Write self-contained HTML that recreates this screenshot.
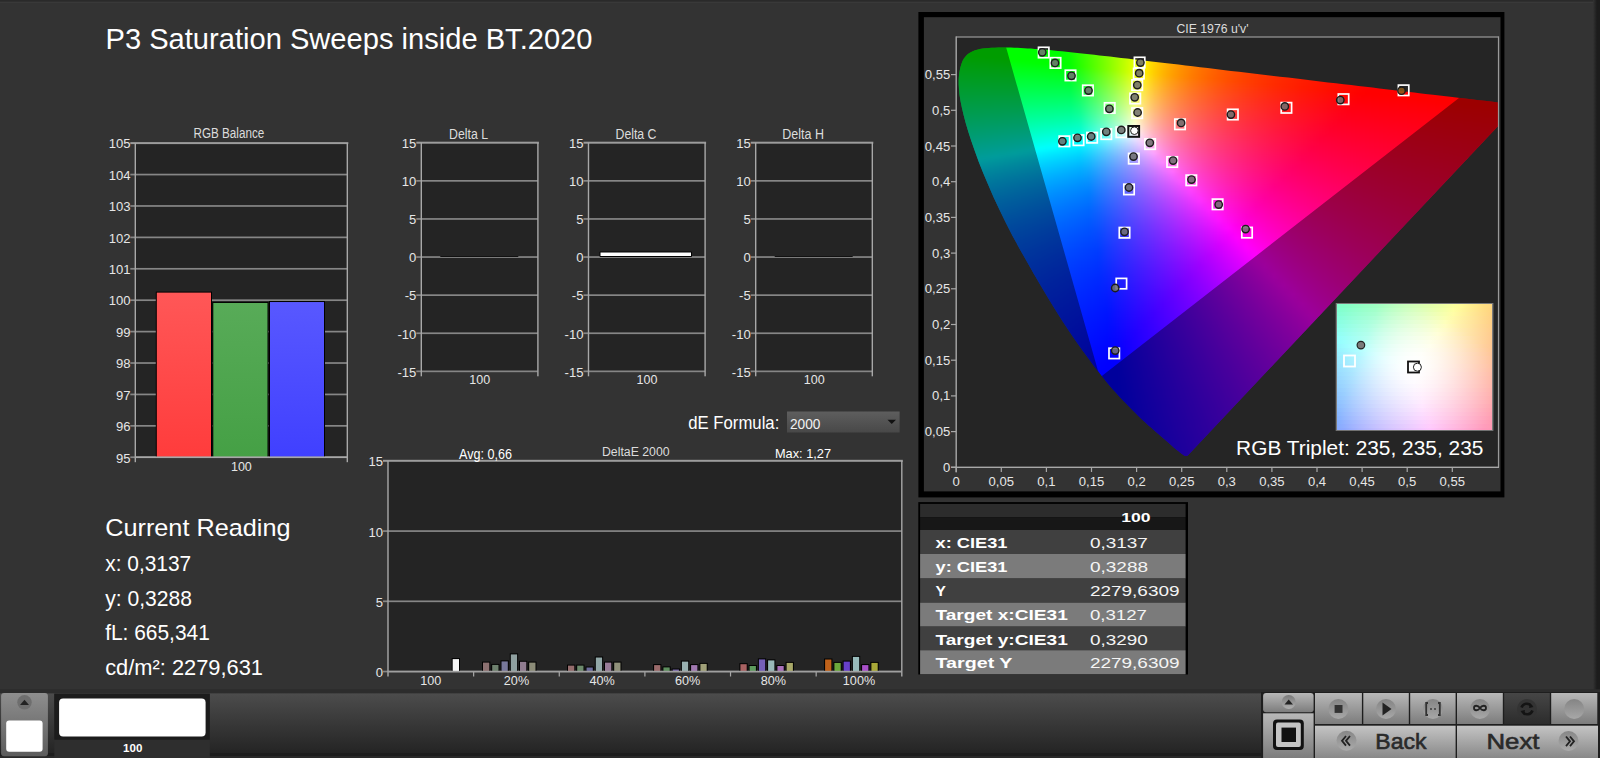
<!DOCTYPE html>
<html><head><meta charset="utf-8"><style>
html,body{margin:0;padding:0;background:#333;width:1600px;height:758px;overflow:hidden}
.L{position:absolute;left:0;top:0}
svg text{font-family:"Liberation Sans", sans-serif}
#cie{position:absolute;overflow:hidden}
#cie,#ins{position:absolute;overflow:hidden}
#cie{filter:blur(1px)}
#cie i,#ins i{position:absolute;left:0;width:100%;height:3px}
</style></head><body>
<svg class="L" width="1600" height="758" viewBox="0 0 1600 758">
<rect width="1600" height="758" fill="#333"/>
<rect width="1600" height="1.6" fill="#2a2a2a"/>
<rect y="1.8" width="1600" height="1.4" fill="#393939"/>
<linearGradient id="re" x1="0" y1="0" x2="1" y2="0"><stop offset="0" stop-color="#333"/><stop offset="1" stop-color="#1c1c1c"/></linearGradient>
<rect x="1593" y="0" width="4" height="690" fill="url(#re)"/>
<rect x="1597" y="0" width="3" height="758" fill="#1c1c1c"/>
<text x="105.5" y="48.5" font-size="29.80" fill="#fff" textLength="487.0" lengthAdjust="spacingAndGlyphs">P3 Saturation Sweeps inside BT.2020</text>
<rect x="135.3" y="143.1" width="212.0" height="314.1" fill="#242424"/>
<rect x="130.3" y="142.1" width="218.0" height="2" fill="#9c9c9c"/>
<text x="130.5" y="148.4" font-size="13.08" text-anchor="end" fill="#e6e6e6">105</text>
<rect x="130.3" y="173.70999999999998" width="217.0" height="1.7" fill="#868686"/>
<text x="130.5" y="179.8" font-size="13.08" text-anchor="end" fill="#e6e6e6">104</text>
<rect x="130.3" y="205.12" width="217.0" height="1.7" fill="#868686"/>
<text x="130.5" y="211.2" font-size="13.08" text-anchor="end" fill="#e6e6e6">103</text>
<rect x="130.3" y="236.52999999999997" width="217.0" height="1.7" fill="#868686"/>
<text x="130.5" y="242.6" font-size="13.08" text-anchor="end" fill="#e6e6e6">102</text>
<rect x="130.3" y="267.94" width="217.0" height="1.7" fill="#868686"/>
<text x="130.5" y="274.0" font-size="13.08" text-anchor="end" fill="#e6e6e6">101</text>
<rect x="130.3" y="299.34999999999997" width="217.0" height="1.7" fill="#868686"/>
<text x="130.5" y="305.4" font-size="13.08" text-anchor="end" fill="#e6e6e6">100</text>
<rect x="130.3" y="330.76" width="217.0" height="1.7" fill="#868686"/>
<text x="130.5" y="336.9" font-size="13.08" text-anchor="end" fill="#e6e6e6">99</text>
<rect x="130.3" y="362.17" width="217.0" height="1.7" fill="#868686"/>
<text x="130.5" y="368.3" font-size="13.08" text-anchor="end" fill="#e6e6e6">98</text>
<rect x="130.3" y="393.58" width="217.0" height="1.7" fill="#868686"/>
<text x="130.5" y="399.7" font-size="13.08" text-anchor="end" fill="#e6e6e6">97</text>
<rect x="130.3" y="424.98999999999995" width="217.0" height="1.7" fill="#868686"/>
<text x="130.5" y="431.1" font-size="13.08" text-anchor="end" fill="#e6e6e6">96</text>
<rect x="130.3" y="456.40000000000003" width="217.0" height="1.7" fill="#868686"/>
<text x="130.5" y="462.5" font-size="13.08" text-anchor="end" fill="#e6e6e6">95</text>
<rect x="134.60000000000002" y="143.1" width="1.4" height="319.1" fill="#a8a8a8"/>
<rect x="346.6" y="143.1" width="1.4" height="319.1" fill="#a8a8a8"/>
<text x="228.9" y="138.4" font-size="13.81" text-anchor="middle" fill="#dcdcdc" textLength="70.8" lengthAdjust="spacingAndGlyphs">RGB Balance</text>
<text x="241.4" y="471.0" font-size="12.50" text-anchor="middle" fill="#e6e6e6">100</text>
<rect x="155.8" y="291.6116000000002" width="56.19999999999999" height="165.5883999999998" fill="#000"/>
<linearGradient id="gff5757" x1="0" y1="0" x2="0" y2="1"><stop offset="0" stop-color="#ff5757"/><stop offset="1" stop-color="#ff3c3c"/></linearGradient>
<rect x="156.8" y="292.6116000000002" width="54.19999999999999" height="164.5883999999998" fill="url(#gff5757)"/>
<rect x="212.3" y="301.9769000000001" width="56.19999999999999" height="155.22309999999987" fill="#000"/>
<linearGradient id="g58ab58" x1="0" y1="0" x2="0" y2="1"><stop offset="0" stop-color="#58ab58"/><stop offset="1" stop-color="#45a045"/></linearGradient>
<rect x="213.3" y="302.9769000000001" width="54.19999999999999" height="154.22309999999987" fill="url(#g58ab58)"/>
<rect x="269.0" y="301.03460000000007" width="56.0" height="156.16539999999992" fill="#000"/>
<linearGradient id="g5858ff" x1="0" y1="0" x2="0" y2="1"><stop offset="0" stop-color="#5858ff"/><stop offset="1" stop-color="#4040ff"/></linearGradient>
<rect x="270.0" y="302.03460000000007" width="54.0" height="155.16539999999992" fill="url(#g5858ff)"/>
<rect x="135.3" y="456.4" width="212" height="1.6" fill="#a8a8a8"/>
<rect x="421.3" y="142.7" width="116.59999999999997" height="228.60000000000002" fill="#242424"/>
<rect x="416.3" y="141.7" width="122.59999999999997" height="2" fill="#9c9c9c"/>
<text x="416.3" y="148.0" font-size="13.08" text-anchor="end" fill="#e6e6e6">15</text>
<rect x="416.3" y="179.99999999999997" width="121.59999999999997" height="1.7" fill="#868686"/>
<text x="416.3" y="186.1" font-size="13.08" text-anchor="end" fill="#e6e6e6">10</text>
<rect x="416.3" y="218.09999999999997" width="121.59999999999997" height="1.7" fill="#868686"/>
<text x="416.3" y="224.2" font-size="13.08" text-anchor="end" fill="#e6e6e6">5</text>
<rect x="416.3" y="256.2" width="121.59999999999997" height="1.7" fill="#868686"/>
<text x="416.3" y="262.3" font-size="13.08" text-anchor="end" fill="#e6e6e6">0</text>
<rect x="416.3" y="294.3" width="121.59999999999997" height="1.7" fill="#868686"/>
<text x="416.3" y="300.4" font-size="13.08" text-anchor="end" fill="#e6e6e6">-5</text>
<rect x="416.3" y="332.4" width="121.59999999999997" height="1.7" fill="#868686"/>
<text x="416.3" y="338.5" font-size="13.08" text-anchor="end" fill="#e6e6e6">-10</text>
<rect x="416.3" y="370.5" width="121.59999999999997" height="1.7" fill="#868686"/>
<text x="416.3" y="376.6" font-size="13.08" text-anchor="end" fill="#e6e6e6">-15</text>
<rect x="420.6" y="142.7" width="1.4" height="233.60000000000002" fill="#a8a8a8"/>
<rect x="537.1999999999999" y="142.7" width="1.4" height="233.60000000000002" fill="#a8a8a8"/>
<text x="468.6" y="138.8" font-size="13.81" text-anchor="middle" fill="#dcdcdc" textLength="39.0" lengthAdjust="spacingAndGlyphs">Delta L</text>
<text x="479.8" y="383.9" font-size="12.50" text-anchor="middle" fill="#e6e6e6">100</text>
<rect x="440.3" y="256.0" width="78" height="1" fill="#111"/>
<rect x="588.5" y="142.7" width="116.60000000000002" height="228.60000000000002" fill="#242424"/>
<rect x="583.5" y="141.7" width="122.60000000000002" height="2" fill="#9c9c9c"/>
<text x="583.5" y="148.0" font-size="13.08" text-anchor="end" fill="#e6e6e6">15</text>
<rect x="583.5" y="179.99999999999997" width="121.60000000000002" height="1.7" fill="#868686"/>
<text x="583.5" y="186.1" font-size="13.08" text-anchor="end" fill="#e6e6e6">10</text>
<rect x="583.5" y="218.09999999999997" width="121.60000000000002" height="1.7" fill="#868686"/>
<text x="583.5" y="224.2" font-size="13.08" text-anchor="end" fill="#e6e6e6">5</text>
<rect x="583.5" y="256.2" width="121.60000000000002" height="1.7" fill="#868686"/>
<text x="583.5" y="262.3" font-size="13.08" text-anchor="end" fill="#e6e6e6">0</text>
<rect x="583.5" y="294.3" width="121.60000000000002" height="1.7" fill="#868686"/>
<text x="583.5" y="300.4" font-size="13.08" text-anchor="end" fill="#e6e6e6">-5</text>
<rect x="583.5" y="332.4" width="121.60000000000002" height="1.7" fill="#868686"/>
<text x="583.5" y="338.5" font-size="13.08" text-anchor="end" fill="#e6e6e6">-10</text>
<rect x="583.5" y="370.5" width="121.60000000000002" height="1.7" fill="#868686"/>
<text x="583.5" y="376.6" font-size="13.08" text-anchor="end" fill="#e6e6e6">-15</text>
<rect x="587.8" y="142.7" width="1.4" height="233.60000000000002" fill="#a8a8a8"/>
<rect x="704.4" y="142.7" width="1.4" height="233.60000000000002" fill="#a8a8a8"/>
<text x="636.0" y="138.8" font-size="13.81" text-anchor="middle" fill="#dcdcdc" textLength="41.0" lengthAdjust="spacingAndGlyphs">Delta C</text>
<text x="647.0" y="383.9" font-size="12.50" text-anchor="middle" fill="#e6e6e6">100</text>
<rect x="599.5" y="251.5" width="92.5" height="5.5" rx="1" fill="#000"/>
<rect x="600.5" y="252.5" width="90.5" height="3.5" fill="#fff"/>
<rect x="755.7" y="142.7" width="116.60000000000002" height="228.60000000000002" fill="#242424"/>
<rect x="750.7" y="141.7" width="122.60000000000002" height="2" fill="#9c9c9c"/>
<text x="750.7" y="148.0" font-size="13.08" text-anchor="end" fill="#e6e6e6">15</text>
<rect x="750.7" y="179.99999999999997" width="121.60000000000002" height="1.7" fill="#868686"/>
<text x="750.7" y="186.1" font-size="13.08" text-anchor="end" fill="#e6e6e6">10</text>
<rect x="750.7" y="218.09999999999997" width="121.60000000000002" height="1.7" fill="#868686"/>
<text x="750.7" y="224.2" font-size="13.08" text-anchor="end" fill="#e6e6e6">5</text>
<rect x="750.7" y="256.2" width="121.60000000000002" height="1.7" fill="#868686"/>
<text x="750.7" y="262.3" font-size="13.08" text-anchor="end" fill="#e6e6e6">0</text>
<rect x="750.7" y="294.3" width="121.60000000000002" height="1.7" fill="#868686"/>
<text x="750.7" y="300.4" font-size="13.08" text-anchor="end" fill="#e6e6e6">-5</text>
<rect x="750.7" y="332.4" width="121.60000000000002" height="1.7" fill="#868686"/>
<text x="750.7" y="338.5" font-size="13.08" text-anchor="end" fill="#e6e6e6">-10</text>
<rect x="750.7" y="370.5" width="121.60000000000002" height="1.7" fill="#868686"/>
<text x="750.7" y="376.6" font-size="13.08" text-anchor="end" fill="#e6e6e6">-15</text>
<rect x="755.0" y="142.7" width="1.4" height="233.60000000000002" fill="#a8a8a8"/>
<rect x="871.6" y="142.7" width="1.4" height="233.60000000000002" fill="#a8a8a8"/>
<text x="803.1" y="138.8" font-size="13.81" text-anchor="middle" fill="#dcdcdc" textLength="41.6" lengthAdjust="spacingAndGlyphs">Delta H</text>
<text x="814.2" y="383.9" font-size="12.50" text-anchor="middle" fill="#e6e6e6">100</text>
<rect x="774.7" y="256.0" width="78" height="1" fill="#111"/>
<text x="688.3" y="428.5" font-size="18.60" fill="#fff" textLength="91.0" lengthAdjust="spacingAndGlyphs">dE Formula:</text>
<linearGradient id="dd" x1="0" y1="0" x2="0" y2="1"><stop offset="0" stop-color="#5e5e5e"/><stop offset="1" stop-color="#484848"/></linearGradient>
<rect x="787" y="411.5" width="112.6" height="21" fill="url(#dd)"/>
<text x="790.0" y="428.5" font-size="14.53" fill="#f0f0f0" textLength="30.5" lengthAdjust="spacingAndGlyphs">2000</text>
<path d="M887.5 419.8 L896 419.8 L891.75 424 Z" fill="#111"/>
<rect x="388" y="460.8" width="513.8" height="210.7" fill="#242424"/>
<rect x="383" y="459.8" width="519.8" height="2" fill="#9c9c9c"/>
<text x="383.0" y="466.3" font-size="13.08" text-anchor="end" fill="#e6e6e6">15</text>
<rect x="383" y="530.2333333333333" width="518.8" height="1.7" fill="#868686"/>
<text x="383.0" y="536.5" font-size="13.08" text-anchor="end" fill="#e6e6e6">10</text>
<rect x="383" y="600.4666666666667" width="518.8" height="1.7" fill="#868686"/>
<text x="383.0" y="606.8" font-size="13.08" text-anchor="end" fill="#e6e6e6">5</text>
<rect x="383" y="670.7" width="518.8" height="1.7" fill="#868686"/>
<text x="383.0" y="677.0" font-size="13.08" text-anchor="end" fill="#e6e6e6">0</text>
<rect x="387.3" y="460.8" width="1.4" height="215.7" fill="#a8a8a8"/>
<rect x="901.0999999999999" y="460.8" width="1.4" height="215.7" fill="#a8a8a8"/>
<rect x="473.0333333333333" y="671.5" width="1.2" height="5" fill="#a8a8a8"/>
<rect x="558.6666666666666" y="671.5" width="1.2" height="5" fill="#a8a8a8"/>
<rect x="644.3" y="671.5" width="1.2" height="5" fill="#a8a8a8"/>
<rect x="729.9333333333333" y="671.5" width="1.2" height="5" fill="#a8a8a8"/>
<rect x="815.5666666666666" y="671.5" width="1.2" height="5" fill="#a8a8a8"/>
<text x="430.8" y="684.5" font-size="12.65" text-anchor="middle" fill="#e6e6e6">100</text>
<text x="516.5" y="684.5" font-size="12.65" text-anchor="middle" fill="#e6e6e6">20%</text>
<text x="602.1" y="684.5" font-size="12.65" text-anchor="middle" fill="#e6e6e6">40%</text>
<text x="687.7" y="684.5" font-size="12.65" text-anchor="middle" fill="#e6e6e6">60%</text>
<text x="773.3" y="684.5" font-size="12.65" text-anchor="middle" fill="#e6e6e6">80%</text>
<text x="859.0" y="684.5" font-size="12.65" text-anchor="middle" fill="#e6e6e6">100%</text>
<text x="459.0" y="459.0" font-size="13.81" fill="#fff" textLength="53.0" lengthAdjust="spacingAndGlyphs">Avg: 0,66</text>
<text x="635.8" y="456.0" font-size="13.08" text-anchor="middle" fill="#dcdcdc" textLength="67.6" lengthAdjust="spacingAndGlyphs">DeltaE 2000</text>
<text x="775.0" y="458.2" font-size="12.79" fill="#fff" textLength="56.0" lengthAdjust="spacingAndGlyphs">Max: 1,27</text>
<rect x="451.7" y="658.1" width="8.3" height="13.4" fill="#000"/>
<rect x="452.7" y="659.1" width="6.3" height="12.4" fill="#f4f4f4"/>
<rect x="482.0" y="661.6" width="8.3" height="9.9" fill="#000"/>
<rect x="483.0" y="662.6" width="6.3" height="8.9" fill="#8c7070"/>
<rect x="491.2" y="663.9" width="8.3" height="7.6" fill="#000"/>
<rect x="492.2" y="664.9" width="6.3" height="6.6" fill="#6e816e"/>
<rect x="500.5" y="660.4" width="8.3" height="11.1" fill="#000"/>
<rect x="501.5" y="661.4" width="6.3" height="10.1" fill="#77779a"/>
<rect x="509.8" y="653.4" width="8.3" height="18.1" fill="#000"/>
<rect x="510.8" y="654.4" width="6.3" height="17.1" fill="#8fa0a0"/>
<rect x="519.0" y="660.8" width="8.3" height="10.8" fill="#000"/>
<rect x="520.0" y="661.8" width="6.3" height="9.8" fill="#907c90"/>
<rect x="528.2" y="661.6" width="8.3" height="9.9" fill="#000"/>
<rect x="529.2" y="662.6" width="6.3" height="8.9" fill="#8c8c78"/>
<rect x="567.0" y="664.6" width="8.3" height="6.9" fill="#000"/>
<rect x="568.0" y="665.6" width="6.3" height="5.9" fill="#946c6c"/>
<rect x="576.2" y="664.6" width="8.3" height="6.9" fill="#000"/>
<rect x="577.2" y="665.6" width="6.3" height="5.9" fill="#6c8a6c"/>
<rect x="585.5" y="666.5" width="8.3" height="5.0" fill="#000"/>
<rect x="586.5" y="667.5" width="6.3" height="4.0" fill="#6c6c9c"/>
<rect x="594.8" y="656.5" width="8.3" height="15.0" fill="#000"/>
<rect x="595.8" y="657.5" width="6.3" height="14.0" fill="#92a8a8"/>
<rect x="604.0" y="661.6" width="8.3" height="9.9" fill="#000"/>
<rect x="605.0" y="662.6" width="6.3" height="8.9" fill="#987c98"/>
<rect x="613.2" y="661.6" width="8.3" height="9.9" fill="#000"/>
<rect x="614.2" y="662.6" width="6.3" height="8.9" fill="#90907a"/>
<rect x="653.1" y="664.1" width="8.3" height="7.4" fill="#000"/>
<rect x="654.1" y="665.1" width="6.3" height="6.4" fill="#9a6a6a"/>
<rect x="662.4" y="666.4" width="8.3" height="5.1" fill="#000"/>
<rect x="663.4" y="667.4" width="6.3" height="4.1" fill="#5e8e5e"/>
<rect x="671.6" y="668.5" width="8.3" height="3.0" fill="#000"/>
<rect x="672.6" y="669.5" width="6.3" height="2.0" fill="#7a6aaa"/>
<rect x="680.9" y="660.6" width="8.3" height="10.9" fill="#000"/>
<rect x="681.9" y="661.6" width="6.3" height="9.9" fill="#98b0b0"/>
<rect x="690.1" y="664.1" width="8.3" height="7.4" fill="#000"/>
<rect x="691.1" y="665.1" width="6.3" height="6.4" fill="#a078b0"/>
<rect x="699.4" y="662.9" width="8.3" height="8.6" fill="#000"/>
<rect x="700.4" y="663.9" width="6.3" height="7.6" fill="#a0a078"/>
<rect x="739.4" y="663.2" width="8.3" height="8.2" fill="#000"/>
<rect x="740.4" y="664.2" width="6.3" height="7.2" fill="#a86262"/>
<rect x="748.6" y="665.0" width="8.3" height="6.5" fill="#000"/>
<rect x="749.6" y="666.0" width="6.3" height="5.5" fill="#5e9a5e"/>
<rect x="757.9" y="658.4" width="8.3" height="13.1" fill="#000"/>
<rect x="758.9" y="659.4" width="6.3" height="12.1" fill="#7460b8"/>
<rect x="767.1" y="659.4" width="8.3" height="12.1" fill="#000"/>
<rect x="768.1" y="660.4" width="6.3" height="11.1" fill="#98b8b8"/>
<rect x="776.4" y="665.0" width="8.3" height="6.5" fill="#000"/>
<rect x="777.4" y="666.0" width="6.3" height="5.5" fill="#a870b8"/>
<rect x="785.6" y="661.9" width="8.3" height="9.6" fill="#000"/>
<rect x="786.6" y="662.9" width="6.3" height="8.6" fill="#a8a868"/>
<rect x="824.1" y="658.5" width="8.3" height="13.0" fill="#000"/>
<rect x="825.1" y="659.5" width="6.3" height="12.0" fill="#c0621a"/>
<rect x="833.4" y="661.9" width="8.3" height="9.6" fill="#000"/>
<rect x="834.4" y="662.9" width="6.3" height="8.6" fill="#6ca83c"/>
<rect x="842.6" y="660.6" width="8.3" height="10.9" fill="#000"/>
<rect x="843.6" y="661.6" width="6.3" height="9.9" fill="#6640c8"/>
<rect x="851.9" y="655.9" width="8.3" height="15.6" fill="#000"/>
<rect x="852.9" y="656.9" width="6.3" height="14.6" fill="#98bcbc"/>
<rect x="861.1" y="664.1" width="8.3" height="7.4" fill="#000"/>
<rect x="862.1" y="665.1" width="6.3" height="6.4" fill="#a850c8"/>
<rect x="870.4" y="661.9" width="8.3" height="9.6" fill="#000"/>
<rect x="871.4" y="662.9" width="6.3" height="8.6" fill="#a8a838"/>
<rect x="388" y="670.8" width="513.8" height="1.5" fill="#a0a0a0"/>
<text x="105.2" y="535.5" font-size="24.27" fill="#fff" textLength="185.4" lengthAdjust="spacingAndGlyphs">Current Reading</text>
<text x="105.2" y="571.0" font-size="22.09" fill="#fff" textLength="86.0" lengthAdjust="spacingAndGlyphs">x: 0,3137</text>
<text x="105.2" y="605.9" font-size="22.09" fill="#fff" textLength="86.8" lengthAdjust="spacingAndGlyphs">y: 0,3288</text>
<text x="105.2" y="640.2" font-size="22.09" fill="#fff" textLength="104.6" lengthAdjust="spacingAndGlyphs">fL: 665,341</text>
<text x="105.2" y="675.0" font-size="22.09" fill="#fff" textLength="157.8" lengthAdjust="spacingAndGlyphs">cd/m²: 2279,631</text>
<rect x="918.4" y="12" width="586" height="485.4" fill="#000"/>
<rect x="923.9" y="17.2" width="576.6" height="474.2" fill="#333"/>
<rect x="956.2" y="36.9" width="542.4" height="430.4" fill="#252525"/>
</svg>
<div id="cie" style="left:950px;top:38px;width:556.0px;height:424px;clip-path:path('M237.8 417.5 L237.4 417.8 L236.8 417.9 L236.1 418.0 L235.4 417.9 L234.5 417.7 L233.7 417.2 L232.7 416.6 L231.5 415.7 L230.0 414.6 L228.2 413.1 L226.1 411.4 L223.7 409.4 L221.0 407.0 L217.9 404.3 L214.1 401.0 L209.8 397.2 L205.4 393.4 L201.6 390.1 L198.5 387.4 L195.9 385.1 L193.4 382.8 L190.6 380.2 L187.6 377.3 L184.4 374.1 L181.1 370.8 L177.5 367.1 L173.8 363.2 L169.9 359.2 L165.7 354.6 L161.1 349.4 L156.1 343.4 L150.8 336.7 L145.1 329.4 L139.2 321.5 L132.9 312.9 L126.3 303.7 L119.5 293.8 L112.7 283.4 L105.6 272.3 L98.4 260.5 L91.1 248.3 L83.9 235.9 L76.7 223.3 L69.4 210.4 L62.3 197.4 L55.7 184.6 L49.6 172.0 L43.7 159.4 L38.3 147.1 L33.4 135.4 L28.9 124.2 L25.0 113.4 L21.4 103.3 L18.3 93.8 L15.7 85.1 L13.6 77.1 L11.9 69.8 L10.5 63.0 L9.5 56.8 L9.0 51.3 L8.7 46.2 L8.7 41.5 L9.0 37.0 L9.6 32.9 L10.4 29.2 L11.4 25.9 L12.5 23.0 L13.9 20.6 L15.5 18.4 L17.3 16.5 L19.4 15.0 L21.8 13.7 L24.4 12.6 L27.1 11.8 L29.8 11.1 L32.7 10.6 L35.7 10.3 L38.7 10.0 L41.8 9.8 L44.9 9.7 L48.1 9.6 L51.4 9.6 L54.5 9.5 L57.7 9.6 L61.0 9.6 L64.2 9.7 L67.5 9.8 L70.8 10.0 L74.2 10.2 L77.7 10.4 L81.2 10.6 L84.8 10.9 L88.4 11.1 L92.1 11.4 L95.9 11.8 L99.8 12.1 L103.8 12.5 L107.9 12.9 L112.0 13.3 L116.3 13.8 L120.6 14.2 L125.1 14.7 L129.7 15.2 L134.5 15.7 L139.3 16.3 L144.3 16.8 L149.4 17.4 L154.6 18.0 L160.0 18.6 L165.5 19.2 L171.1 19.9 L176.9 20.6 L182.9 21.3 L188.9 22.0 L195.2 22.7 L201.5 23.5 L208.1 24.2 L214.7 25.0 L221.5 25.8 L228.5 26.6 L235.6 27.5 L242.8 28.3 L250.2 29.2 L257.7 30.1 L265.4 31.0 L273.2 31.9 L281.0 32.9 L289.0 33.8 L297.1 34.8 L305.2 35.7 L313.4 36.7 L321.7 37.7 L330.0 38.7 L338.2 39.6 L346.3 40.6 L354.3 41.5 L362.2 42.5 L370.1 43.4 L378.0 44.4 L385.9 45.3 L393.7 46.2 L401.2 47.1 L408.5 48.0 L415.7 48.8 L422.6 49.6 L429.4 50.4 L435.9 51.2 L442.3 51.9 L448.4 52.7 L454.3 53.4 L459.6 54.0 L464.4 54.6 L469.5 55.2 L475.5 55.9 L483.0 56.8 L491.6 57.8 L500.3 58.8 L508.2 59.7 L515.0 60.5 L521.2 61.3 L526.9 62.0 L532.1 62.6 L536.8 63.1 L540.9 63.6 L544.6 64.0 L547.8 64.4 L548.4 64.5 L548.4 87.7 Z')"><i style="top:0px;background:linear-gradient(90deg,#00ff00,#00ff00,#00ff00,#00ff00,#00ff00,#00ff00,#00ff00,#00ff00,#00ff00,#00ff00,#00ff00,#00ff00,#00ff00,#13ff00,#2fff00,#4bff00,#67ff00,#84ff00,#a2ff00,#c1ff00,#e2ff00,#fffa00,#ffdb00,#ffc200,#ffad00,#ff9b00,#ff8c00,#ff7e00,#ff7200,#ff6800,#ff5e00,#ff5500,#ff4e00,#ff4700,#ff4000,#ff3a00,#ff3500,#ff2f00,#ff2b00,#ff2600,#ff2200,#ff1e00,#ff1a00,#ff1700,#ff1300,#ff1000,#ff0d00,#ff0a00,#ff0700,#ff0400,#ff0100,#ff0000,#ff0000,#ff0000,#ff0000,#ff0000,#ff0000,#ff0000,#ff0000,#ff0000,#ff0000)"></i><i style="top:3px;background:linear-gradient(90deg,#00ff00,#00ff00,#00ff00,#00ff00,#00ff00,#00ff00,#00ff00,#00ff00,#00ff00,#00ff00,#00ff00,#00ff00,#00ff00,#12ff00,#2eff00,#4aff00,#67ff00,#84ff00,#a2ff00,#c2ff00,#e3ff00,#fff900,#ffda00,#ffc100,#ffac00,#ff9a00,#ff8a00,#ff7d00,#ff7100,#ff6600,#ff5d00,#ff5400,#ff4d00,#ff4600,#ff3f00,#ff3900,#ff3400,#ff2e00,#ff2a00,#ff2500,#ff2100,#ff1d00,#ff1900,#ff1600,#ff1200,#ff0f00,#ff0c00,#ff0900,#ff0600,#ff0300,#ff0000,#ff0000,#ff0000,#ff0000,#ff0000,#ff0000,#ff0000,#ff0000,#ff0000,#ff0000,#ff0000)"></i><i style="top:6px;background:linear-gradient(90deg,#00ff00,#00ff00,#00ff00,#00ff00,#00ff00,#00ff00,#00ff00,#00ff00,#00ff00,#00ff00,#00ff00,#00ff00,#00ff00,#11ff00,#2dff00,#4aff00,#66ff00,#84ff00,#a2ff00,#c2ff00,#e4ff00,#fff800,#ffd900,#ffc000,#ffab00,#ff9900,#ff8900,#ff7c00,#ff7000,#ff6500,#ff5c00,#ff5300,#ff4c00,#ff4500,#ff3e00,#ff3800,#ff3300,#ff2e00,#ff2900,#ff2400,#ff2000,#ff1c00,#ff1800,#ff1500,#ff1100,#ff0e00,#ff0b00,#ff0800,#ff0500,#ff0200,#ff0000,#ff0000,#ff0000,#ff0000,#ff0000,#ff0000,#ff0000,#ff0000,#ff0000,#ff0000,#ff0000)"></i><i style="top:9px;background:linear-gradient(90deg,#00ff00,#00ff00,#00ff00,#00ff00,#00ff00,#00ff00,#00ff00,#00ff00,#00ff00,#00ff00,#00ff00,#00ff00,#00ff00,#0fff00,#2cff00,#49ff00,#66ff00,#84ff00,#a2ff00,#c3ff00,#e4ff00,#fff600,#ffd800,#ffbf00,#ffaa00,#ff9800,#ff8800,#ff7b00,#ff6f00,#ff6400,#ff5b00,#ff5200,#ff4b00,#ff4400,#ff3d00,#ff3700,#ff3200,#ff2d00,#ff2800,#ff2300,#ff1f00,#ff1b00,#ff1800,#ff1400,#ff1100,#ff0d00,#ff0a00,#ff0700,#ff0400,#ff0100,#ff0000,#ff0000,#ff0000,#ff0000,#ff0000,#ff0000,#ff0000,#ff0000,#ff0000,#ff0000,#ff0000)"></i><i style="top:12px;background:linear-gradient(90deg,#00ff00,#00ff00,#00ff00,#00ff00,#00ff00,#00ff00,#00ff00,#00ff00,#00ff00,#00ff00,#00ff00,#00ff00,#00ff00,#0eff00,#2bff00,#48ff00,#65ff00,#83ff00,#a2ff00,#c3ff00,#e5ff00,#fff500,#ffd700,#ffbd00,#ffa800,#ff9600,#ff8700,#ff7a00,#ff6e00,#ff6300,#ff5a00,#ff5100,#ff4a00,#ff4300,#ff3c00,#ff3600,#ff3100,#ff2c00,#ff2700,#ff2300,#ff1e00,#ff1a00,#ff1700,#ff1300,#ff1000,#ff0c00,#ff0900,#ff0600,#ff0300,#ff0000,#ff0000,#ff0000,#ff0000,#ff0000,#ff0000,#ff0000,#ff0000,#ff0000,#ff0000,#ff0000,#ff0000)"></i><i style="top:15px;background:linear-gradient(90deg,#00ff01,#00ff00,#00ff00,#00ff00,#00ff00,#00ff00,#00ff00,#00ff00,#00ff00,#00ff00,#00ff00,#00ff00,#00ff00,#0cff00,#2aff00,#47ff00,#65ff00,#83ff00,#a3ff00,#c3ff00,#e6ff00,#fff400,#ffd500,#ffbc00,#ffa700,#ff9500,#ff8600,#ff7800,#ff6d00,#ff6200,#ff5900,#ff5000,#ff4900,#ff4200,#ff3b00,#ff3500,#ff3000,#ff2b00,#ff2600,#ff2200,#ff1d00,#ff1900,#ff1600,#ff1200,#ff0f00,#ff0c00,#ff0800,#ff0500,#ff0200,#ff0000,#ff0000,#ff0000,#ff0000,#ff0000,#ff0000,#ff0000,#ff0000,#ff0000,#ff0000,#ff0000,#ff0000)"></i><i style="top:18px;background:linear-gradient(90deg,#00ff09,#00ff07,#00ff04,#00ff02,#00ff00,#00ff00,#00ff00,#00ff00,#00ff00,#00ff00,#00ff00,#00ff00,#00ff00,#0bff00,#29ff00,#47ff00,#64ff00,#83ff00,#a3ff00,#c4ff00,#e7ff00,#fff300,#ffd400,#ffbb00,#ffa600,#ff9400,#ff8500,#ff7700,#ff6b00,#ff6100,#ff5800,#ff4f00,#ff4800,#ff4100,#ff3a00,#ff3400,#ff2f00,#ff2a00,#ff2500,#ff2100,#ff1d00,#ff1900,#ff1500,#ff1100,#ff0e00,#ff0b00,#ff0800,#ff0400,#ff0100,#ff0000,#ff0000,#ff0000,#ff0000,#ff0000,#ff0000,#ff0000,#ff0000,#ff0000,#ff0000,#ff0000,#ff0000)"></i><i style="top:21px;background:linear-gradient(90deg,#00ff0f,#00ff0e,#00ff0c,#00ff0a,#00ff08,#00ff06,#00ff03,#00ff00,#00ff00,#00ff00,#00ff00,#00ff00,#00ff00,#09ff00,#28ff00,#46ff00,#64ff00,#83ff00,#a3ff00,#c4ff00,#e7ff00,#fff200,#ffd300,#ffba00,#ffa500,#ff9300,#ff8300,#ff7600,#ff6a00,#ff6000,#ff5700,#ff4e00,#ff4600,#ff4000,#ff3900,#ff3300,#ff2e00,#ff2900,#ff2400,#ff2000,#ff1c00,#ff1800,#ff1400,#ff1000,#ff0d00,#ff0a00,#ff0700,#ff0300,#ff0000,#ff0000,#ff0000,#ff0000,#ff0000,#ff0000,#ff0000,#ff0000,#ff0000,#ff0000,#ff0000,#ff0000,#ff0000)"></i><i style="top:24px;background:linear-gradient(90deg,#00ff16,#00ff15,#00ff13,#00ff11,#00ff0f,#00ff0d,#00ff0b,#00ff09,#00ff07,#00ff04,#00ff01,#00ff00,#00ff00,#08ff00,#27ff00,#45ff00,#63ff00,#82ff00,#a3ff00,#c5ff00,#e8ff00,#fff100,#ffd200,#ffb900,#ffa300,#ff9200,#ff8200,#ff7500,#ff6900,#ff5f00,#ff5500,#ff4d00,#ff4500,#ff3f00,#ff3800,#ff3200,#ff2d00,#ff2800,#ff2300,#ff1f00,#ff1b00,#ff1700,#ff1300,#ff1000,#ff0c00,#ff0900,#ff0600,#ff0200,#ff0000,#ff0000,#ff0000,#ff0000,#ff0000,#ff0000,#ff0000,#ff0000,#ff0000,#ff0000,#ff0000,#ff0000,#ff0000)"></i><i style="top:27px;background:linear-gradient(90deg,#00ff1d,#00ff1b,#00ff1a,#00ff18,#00ff17,#00ff15,#00ff13,#00ff11,#00ff0f,#00ff0d,#00ff0b,#00ff09,#00ff06,#06ff03,#26ff00,#44ff00,#63ff00,#82ff00,#a3ff00,#c5ff00,#e9ff00,#fff000,#ffd100,#ffb700,#ffa200,#ff9000,#ff8100,#ff7400,#ff6800,#ff5e00,#ff5400,#ff4c00,#ff4400,#ff3d00,#ff3700,#ff3100,#ff2c00,#ff2700,#ff2200,#ff1e00,#ff1a00,#ff1600,#ff1200,#ff0f00,#ff0b00,#ff0800,#ff0500,#ff0100,#ff0000,#ff0000,#ff0000,#ff0000,#ff0000,#ff0000,#ff0000,#ff0000,#ff0000,#ff0000,#ff0000,#ff0000,#ff0000)"></i><i style="top:30px;background:linear-gradient(90deg,#00ff23,#00ff22,#00ff20,#00ff1f,#00ff1e,#00ff1c,#00ff1b,#00ff19,#00ff17,#00ff16,#00ff14,#00ff12,#00ff0f,#04ff0d,#24ff0a,#43ff08,#62ff04,#82ff01,#a3ff00,#c6ff00,#eaff00,#ffef00,#ffcf00,#ffb600,#ffa100,#ff8f00,#ff8000,#ff7200,#ff6700,#ff5c00,#ff5300,#ff4b00,#ff4300,#ff3c00,#ff3600,#ff3000,#ff2b00,#ff2600,#ff2100,#ff1d00,#ff1900,#ff1500,#ff1100,#ff0e00,#ff0a00,#ff0700,#ff0400,#ff0000,#ff0000,#ff0000,#ff0000,#ff0000,#ff0000,#ff0000,#ff0000,#ff0000,#ff0000,#ff0000,#ff0000,#ff0000,#ff0000)"></i><i style="top:33px;background:linear-gradient(90deg,#00ff29,#00ff28,#00ff27,#00ff26,#00ff25,#00ff24,#00ff22,#00ff21,#00ff1f,#00ff1e,#00ff1c,#00ff1a,#00ff18,#02ff16,#23ff14,#42ff12,#61ff0f,#82ff0d,#a3ff0a,#c6ff06,#ebff02,#ffed00,#ffce00,#ffb500,#ffa000,#ff8e00,#ff7f00,#ff7100,#ff6600,#ff5b00,#ff5200,#ff4a00,#ff4200,#ff3b00,#ff3500,#ff2f00,#ff2a00,#ff2500,#ff2000,#ff1c00,#ff1800,#ff1400,#ff1000,#ff0d00,#ff0900,#ff0600,#ff0300,#ff0000,#ff0000,#ff0000,#ff0000,#ff0000,#ff0000,#ff0000,#ff0000,#ff0000,#ff0000,#ff0000,#ff0000,#ff0000,#ff0000)"></i><i style="top:36px;background:linear-gradient(90deg,#00ff30,#00ff2f,#00ff2e,#00ff2d,#00ff2c,#00ff2b,#00ff2a,#00ff28,#00ff27,#00ff26,#00ff24,#00ff23,#00ff21,#00ff20,#22ff1e,#41ff1c,#61ff1a,#81ff17,#a3ff15,#c7ff12,#ecff0f,#ffec0b,#ffcd07,#ffb303,#ff9e00,#ff8d00,#ff7d00,#ff7000,#ff6400,#ff5a00,#ff5100,#ff4900,#ff4100,#ff3a00,#ff3400,#ff2e00,#ff2900,#ff2400,#ff1f00,#ff1b00,#ff1700,#ff1300,#ff0f00,#ff0c00,#ff0800,#ff0500,#ff0200,#ff0000,#ff0000,#ff0000,#ff0000,#ff0000,#ff0000,#ff0000,#ff0000,#ff0000,#ff0000,#ff0000,#ff0000,#ff0000,#ff0000)"></i><i style="top:39px;background:linear-gradient(90deg,#00ff36,#00ff35,#00ff34,#00ff34,#00ff33,#00ff32,#00ff31,#00ff30,#00ff2f,#00ff2e,#00ff2d,#00ff2b,#00ff2a,#00ff29,#21ff27,#40ff25,#60ff24,#81ff22,#a3ff20,#c7ff1e,#edff1b,#ffeb17,#ffcc11,#ffb20d,#ff9d09,#ff8b06,#ff7c03,#ff6f01,#ff6300,#ff5900,#ff5000,#ff4700,#ff4000,#ff3900,#ff3300,#ff2d00,#ff2800,#ff2300,#ff1e00,#ff1a00,#ff1600,#ff1200,#ff0e00,#ff0b00,#ff0800,#ff0400,#ff0100,#ff0000,#ff0000,#ff0000,#ff0000,#ff0000,#ff0000,#ff0000,#ff0000,#ff0000,#ff0000,#ff0000,#ff0000,#ff0000,#ff0000)"></i><i style="top:42px;background:linear-gradient(90deg,#00ff3c,#00ff3c,#00ff3b,#00ff3a,#00ff3a,#00ff39,#00ff38,#00ff37,#00ff37,#00ff36,#00ff35,#00ff34,#00ff33,#00ff31,#1fff30,#3fff2f,#60ff2e,#81ff2c,#a3ff2a,#c8ff29,#eeff27,#ffea22,#ffca1b,#ffb116,#ff9c12,#ff8a0e,#ff7b0b,#ff6e08,#ff6206,#ff5804,#ff4f01,#ff4600,#ff3f00,#ff3800,#ff3200,#ff2c00,#ff2700,#ff2200,#ff1d00,#ff1900,#ff1500,#ff1100,#ff0e00,#ff0a00,#ff0700,#ff0300,#ff0000,#ff0000,#ff0000,#ff0000,#ff0000,#ff0000,#ff0000,#ff0000,#ff0000,#ff0000,#ff0000,#ff0000,#ff0000,#ff0000,#ff0000)"></i><i style="top:45px;background:linear-gradient(90deg,#00ff43,#00ff42,#00ff42,#00ff41,#00ff41,#00ff40,#00ff40,#00ff3f,#00ff3e,#00ff3e,#00ff3d,#00ff3c,#00ff3b,#00ff3a,#1eff39,#3eff38,#5fff37,#81ff36,#a3ff35,#c8ff34,#efff32,#ffe82c,#ffc925,#ffaf1f,#ff9a1a,#ff8916,#ff7912,#ff6c0f,#ff610c,#ff570a,#ff4d08,#ff4506,#ff3e04,#ff3702,#ff3100,#ff2b00,#ff2600,#ff2100,#ff1c00,#ff1800,#ff1400,#ff1000,#ff0d00,#ff0900,#ff0600,#ff0200,#ff0000,#ff0000,#ff0000,#ff0000,#ff0000,#ff0000,#ff0000,#ff0000,#ff0000,#ff0000,#ff0000,#ff0000,#ff0000,#ff0000,#ff0000)"></i><i style="top:48px;background:linear-gradient(90deg,#00ff49,#00ff49,#00ff48,#00ff48,#00ff48,#00ff47,#00ff47,#00ff46,#00ff46,#00ff46,#00ff45,#00ff44,#00ff44,#00ff43,#1dff43,#3dff42,#5eff41,#80ff41,#a4ff40,#c9ff3f,#f0ff3e,#ffe737,#ffc82f,#ffae28,#ff9922,#ff871d,#ff7819,#ff6b16,#ff5f13,#ff5510,#ff4c0d,#ff440b,#ff3d09,#ff3607,#ff3005,#ff2a04,#ff2502,#ff2001,#ff1b00,#ff1700,#ff1300,#ff0f00,#ff0c00,#ff0800,#ff0500,#ff0100,#ff0000,#ff0000,#ff0000,#ff0000,#ff0000,#ff0000,#ff0000,#ff0000,#ff0000,#ff0000,#ff0000,#ff0000,#ff0000,#ff0000,#ff0000)"></i><i style="top:51px;background:linear-gradient(90deg,#00ff4f,#00ff4f,#00ff4f,#00ff4f,#00ff4f,#00ff4e,#00ff4e,#00ff4e,#00ff4e,#00ff4d,#00ff4d,#00ff4d,#00ff4d,#00ff4c,#1bff4c,#3cff4c,#5eff4b,#80ff4b,#a4ff4a,#c9ff4a,#f1ff49,#ffe642,#ffc638,#ffad30,#ff982a,#ff8625,#ff7720,#ff6a1c,#ff5e19,#ff5416,#ff4b13,#ff4310,#ff3c0e,#ff350c,#ff2f0a,#ff2908,#ff2407,#ff1f05,#ff1a04,#ff1602,#ff1201,#ff0e00,#ff0b00,#ff0700,#ff0300,#ff0000,#ff0000,#ff0000,#ff0000,#ff0000,#ff0000,#ff0000,#ff0000,#ff0000,#ff0000,#ff0000,#ff0000,#ff0000,#ff0000,#ff0000,#ff0000)"></i><i style="top:54px;background:linear-gradient(90deg,#00ff56,#00ff56,#00ff56,#00ff56,#00ff56,#00ff56,#00ff56,#00ff56,#00ff56,#00ff56,#00ff55,#00ff55,#00ff55,#00ff55,#1aff55,#3bff55,#5dff55,#80ff55,#a4ff55,#caff55,#f2ff55,#ffe44c,#ffc541,#ffab39,#ff9632,#ff852c,#ff7527,#ff6823,#ff5d1f,#ff531b,#ff4a18,#ff4216,#ff3a13,#ff3411,#ff2e0f,#ff280d,#ff230b,#ff1e0a,#ff1908,#ff1507,#ff1105,#ff0d04,#ff0a03,#ff0601,#ff0200,#ff0000,#ff0000,#ff0000,#ff0000,#ff0000,#ff0000,#ff0000,#ff0000,#ff0000,#ff0000,#ff0000,#ff0000,#ff0000,#ff0000,#ff0000,#ff0000)"></i><i style="top:57px;background:linear-gradient(90deg,#00ff5c,#00ff5c,#00ff5c,#00ff5d,#00ff5d,#00ff5d,#00ff5d,#00ff5d,#00ff5d,#00ff5e,#00ff5e,#00ff5e,#00ff5e,#00ff5e,#18ff5f,#3aff5f,#5cff5f,#7fff60,#a4ff60,#caff60,#f3ff61,#ffe357,#ffc34b,#ffaa41,#ff953a,#ff8333,#ff742e,#ff6729,#ff5c25,#ff5221,#ff491e,#ff411b,#ff3918,#ff3315,#ff2d13,#ff2711,#ff220f,#ff1d0e,#ff180c,#ff140a,#ff1009,#ff0c08,#ff0906,#ff0505,#ff0104,#ff0003,#ff0002,#ff0001,#ff0000,#ff0000,#ff0000,#ff0000,#ff0000,#ff0000,#ff0000,#ff0000,#ff0000,#ff0000,#ff0000,#ff0000,#ff0000)"></i><i style="top:60px;background:linear-gradient(90deg,#00ff63,#00ff63,#00ff63,#00ff64,#00ff64,#00ff64,#00ff65,#00ff65,#00ff65,#00ff66,#00ff66,#00ff67,#00ff67,#00ff68,#17ff68,#39ff69,#5cff69,#7fff6a,#a4ff6b,#cbff6c,#f4ff6d,#ffe261,#ffc254,#ffa94a,#ff9441,#ff823a,#ff7334,#ff662f,#ff5a2a,#ff5026,#ff4723,#ff3f1f,#ff381d,#ff311a,#ff2b18,#ff2615,#ff2113,#ff1c11,#ff1710,#ff130e,#ff0f0d,#ff0b0b,#ff080a,#ff0408,#ff0007,#ff0006,#ff0005,#ff0004,#ff0003,#ff0002,#ff0001,#ff0000,#ff0000,#ff0000,#ff0000,#ff0000,#ff0000,#ff0000,#ff0000,#ff0000,#ff0000)"></i><i style="top:63px;background:linear-gradient(90deg,#00ff69,#00ff6a,#00ff6a,#00ff6b,#00ff6b,#00ff6c,#00ff6c,#00ff6d,#00ff6d,#00ff6e,#00ff6f,#00ff6f,#00ff70,#00ff71,#15ff72,#38ff73,#5bff74,#7fff75,#a4ff76,#cbff77,#f5ff79,#ffe06b,#ffc15d,#ffa752,#ff9249,#ff8041,#ff713b,#ff6435,#ff5930,#ff4f2c,#ff4628,#ff3e24,#ff3721,#ff301e,#ff2a1c,#ff2519,#ff2017,#ff1b15,#ff1613,#ff1212,#ff0e10,#ff0a0f,#ff060d,#ff030c,#ff000a,#ff0009,#ff0008,#ff0007,#ff0006,#ff0005,#ff0004,#ff0003,#ff0002,#ff0001,#ff0000,#ff0000,#ff0000,#ff0000,#ff0000,#ff0000,#ff0000)"></i><i style="top:66px;background:linear-gradient(90deg,#00ff70,#00ff70,#00ff71,#00ff72,#00ff72,#00ff73,#00ff74,#00ff75,#00ff75,#00ff76,#00ff77,#00ff78,#00ff79,#00ff7a,#13ff7c,#37ff7d,#5aff7e,#7eff80,#a4ff81,#ccff83,#f6ff85,#ffdf76,#ffbf67,#ffa65b,#ff9151,#ff7f48,#ff7041,#ff633b,#ff5836,#ff4e31,#ff452d,#ff3d29,#ff3626,#ff2f23,#ff2920,#ff241e,#ff1e1b,#ff1a19,#ff1517,#ff1115,#ff0d14,#ff0912,#ff0510,#ff020f,#ff000e,#ff000c,#ff000b,#ff000a,#ff0009,#ff0008,#ff0007,#ff0006,#ff0005,#ff0004,#ff0003,#ff0002,#ff0001,#ff0000,#ff0000,#ff0000,#ff0000)"></i><i style="top:69px;background:linear-gradient(90deg,#00ff76,#00ff77,#00ff78,#00ff79,#00ff7a,#00ff7b,#00ff7b,#00ff7c,#00ff7e,#00ff7f,#00ff80,#00ff81,#00ff82,#00ff84,#12ff85,#36ff87,#59ff89,#7eff8b,#a4ff8d,#cdff8f,#f8ff91,#ffde80,#ffbe70,#ffa463,#ff8f58,#ff7e4f,#ff6f48,#ff6241,#ff573b,#ff4d36,#ff4432,#ff3c2e,#ff352a,#ff2e27,#ff2824,#ff2322,#ff1d1f,#ff191d,#ff141b,#ff1019,#ff0c17,#ff0815,#ff0414,#ff0012,#ff0011,#ff000f,#ff000e,#ff000d,#ff000c,#ff000b,#ff000a,#ff0009,#ff0008,#ff0007,#ff0006,#ff0005,#ff0004,#ff0003,#ff0002,#ff0002,#ff0001)"></i><i style="top:72px;background:linear-gradient(90deg,#00ff7d,#00ff7e,#00ff7f,#00ff80,#00ff81,#00ff82,#00ff83,#00ff84,#00ff86,#00ff87,#00ff89,#00ff8a,#00ff8c,#00ff8d,#10ff8f,#35ff91,#59ff93,#7eff96,#a4ff98,#cdff9b,#f9ff9e,#ffdc8b,#ffbc79,#ffa36b,#ff8e60,#ff7c56,#ff6d4e,#ff6047,#ff5541,#ff4b3c,#ff4237,#ff3b33,#ff332f,#ff2d2c,#ff2728,#ff2126,#ff1c23,#ff1820,#ff131e,#ff0f1c,#ff0b1a,#ff0718,#ff0317,#ff0015,#ff0014,#ff0012,#ff0011,#ff0010,#ff000e,#ff000d,#ff000c,#ff000b,#ff000a,#ff0009,#ff0008,#ff0007,#ff0006,#ff0006,#ff0005,#ff0004,#ff0003)"></i><i style="top:75px;background:linear-gradient(90deg,#00ff84,#00ff85,#00ff86,#00ff87,#00ff88,#00ff8a,#00ff8b,#00ff8d,#00ff8e,#00ff90,#00ff91,#00ff93,#00ff95,#00ff97,#0eff99,#33ff9c,#58ff9e,#7dffa1,#a5ffa4,#ceffa7,#faffab,#ffdb96,#ffbb83,#ffa174,#ff8c68,#ff7b5d,#ff6c55,#ff5f4d,#ff5447,#ff4a41,#ff413c,#ff3938,#ff3233,#ff2c30,#ff262d,#ff2029,#ff1b27,#ff1624,#ff1222,#ff0e20,#ff0a1e,#ff061c,#ff021a,#ff0018,#ff0017,#ff0015,#ff0014,#ff0012,#ff0011,#ff0010,#ff000f,#ff000e,#ff000d,#ff000c,#ff000b,#ff000a,#ff0009,#ff0008,#ff0007,#ff0006,#ff0006)"></i><i style="top:78px;background:linear-gradient(90deg,#00ff8b,#00ff8c,#00ff8d,#00ff8f,#00ff90,#00ff91,#00ff93,#00ff95,#00ff97,#00ff98,#00ff9a,#00ff9c,#00ff9f,#00ffa1,#0cffa4,#32ffa6,#57ffa9,#7dffad,#a5ffb0,#cfffb4,#fbffb8,#ffd9a0,#ffb98c,#ffa07c,#ff8b6f,#ff7964,#ff6a5b,#ff5e53,#ff524c,#ff4946,#ff4041,#ff383c,#ff3138,#ff2a34,#ff2531,#ff1f2d,#ff1a2a,#ff1528,#ff1125,#ff0d23,#ff0921,#ff051f,#ff011d,#ff001b,#ff001a,#ff0018,#ff0016,#ff0015,#ff0014,#ff0012,#ff0011,#ff0010,#ff000f,#ff000e,#ff000d,#ff000c,#ff000b,#ff000a,#ff0009,#ff0009,#ff0008)"></i><i style="top:81px;background:linear-gradient(90deg,#00ff92,#00ff93,#00ff94,#00ff96,#00ff98,#00ff99,#00ff9b,#00ff9d,#00ff9f,#00ffa1,#00ffa3,#00ffa6,#00ffa8,#00ffab,#0affae,#31ffb1,#56ffb5,#7dffb8,#a5ffbc,#cfffc0,#fdffc5,#ffd8ab,#ffb896,#ff9e85,#ff8977,#ff786b,#ff6962,#ff5c59,#ff5152,#ff474c,#ff3f46,#ff3741,#ff303c,#ff2938,#ff2335,#ff1e31,#ff192e,#ff142b,#ff1029,#ff0c26,#ff0824,#ff0422,#ff0020,#ff001e,#ff001c,#ff001b,#ff0019,#ff0018,#ff0016,#ff0015,#ff0014,#ff0013,#ff0011,#ff0010,#ff000f,#ff000e,#ff000d,#ff000c,#ff000c,#ff000b,#ff000a)"></i><i style="top:84px;background:linear-gradient(90deg,#00ff98,#00ff9a,#00ff9c,#00ff9d,#00ff9f,#00ffa1,#00ffa3,#00ffa5,#00ffa8,#00ffaa,#00ffad,#00ffaf,#00ffb2,#00ffb5,#08ffb9,#2fffbc,#55ffc0,#7cffc4,#a5ffc9,#d0ffcd,#feffd3,#ffd6b6,#ffb69f,#ff9d8d,#ff887f,#ff7672,#ff6868,#ff5b5f,#ff5058,#ff4651,#ff3d4b,#ff3646,#ff2e41,#ff283d,#ff2239,#ff1d35,#ff1832,#ff132f,#ff0f2c,#ff0a2a,#ff0627,#ff0225,#ff0023,#ff0021,#ff001f,#ff001e,#ff001c,#ff001a,#ff0019,#ff0018,#ff0016,#ff0015,#ff0014,#ff0013,#ff0012,#ff0011,#ff0010,#ff000f,#ff000e,#ff000d,#ff000c)"></i><i style="top:87px;background:linear-gradient(90deg,#00ff9f,#00ffa1,#00ffa3,#00ffa5,#00ffa7,#00ffa9,#00ffab,#00ffae,#00ffb0,#00ffb3,#00ffb6,#00ffb9,#00ffbc,#00ffc0,#06ffc3,#2effc7,#54ffcc,#7cffd0,#a5ffd5,#d1ffdb,#ffffe0,#ffd5c1,#ffb5a9,#ff9b96,#ff8686,#ff7579,#ff666f,#ff5965,#ff4e5d,#ff4556,#ff3c50,#ff344a,#ff2d45,#ff2741,#ff213d,#ff1c39,#ff1736,#ff1233,#ff0e30,#ff092d,#ff052b,#ff0128,#ff0026,#ff0024,#ff0022,#ff0020,#ff001f,#ff001d,#ff001c,#ff001a,#ff0019,#ff0017,#ff0016,#ff0015,#ff0014,#ff0013,#ff0012,#ff0011,#ff0010,#ff000f,#ff000e)"></i><i style="top:90px;background:linear-gradient(90deg,#00ffa7,#00ffa8,#00ffab,#00ffad,#00ffaf,#00ffb1,#00ffb4,#00ffb6,#00ffb9,#00ffbc,#00ffbf,#00ffc3,#00ffc6,#00ffca,#04ffce,#2dffd3,#54ffd7,#7bffdd,#a5ffe2,#d2ffe8,#fffded,#ffd3cc,#ffb3b2,#ff999e,#ff858e,#ff7380,#ff6575,#ff586b,#ff4d63,#ff435b,#ff3b55,#ff334f,#ff2c4a,#ff2645,#ff2041,#ff1a3d,#ff1539,#ff1136,#ff0c33,#ff0830,#ff042e,#ff002b,#ff0029,#ff0027,#ff0025,#ff0023,#ff0021,#ff0020,#ff001e,#ff001d,#ff001b,#ff001a,#ff0019,#ff0017,#ff0016,#ff0015,#ff0014,#ff0013,#ff0012,#ff0011,#ff0010)"></i><i style="top:93px;background:linear-gradient(90deg,#00ffae,#00ffb0,#00ffb2,#00ffb4,#00ffb7,#00ffb9,#00ffbc,#00ffbf,#00ffc2,#00ffc5,#00ffc9,#00ffcd,#00ffd1,#00ffd5,#02ffd9,#2bffde,#53ffe4,#7bffe9,#a5ffef,#d2fff6,#fffcfa,#ffd2d7,#ffb1bc,#ff98a7,#ff8396,#ff7288,#ff637c,#ff5771,#ff4c68,#ff4261,#ff395a,#ff3254,#ff2b4e,#ff2449,#ff1f45,#ff1941,#ff143d,#ff103a,#ff0b37,#ff0734,#ff0331,#ff002e,#ff002c,#ff002a,#ff0028,#ff0026,#ff0024,#ff0022,#ff0021,#ff001f,#ff001e,#ff001c,#ff001b,#ff001a,#ff0018,#ff0017,#ff0016,#ff0015,#ff0014,#ff0013,#ff0012)"></i><i style="top:96px;background:linear-gradient(90deg,#00ffb5,#00ffb7,#00ffba,#00ffbc,#00ffbf,#00ffc2,#00ffc5,#00ffc8,#00ffcb,#00ffcf,#00ffd3,#00ffd7,#00ffdb,#00ffe0,#00ffe5,#2affea,#52fff0,#7bfff6,#a6fffd,#cffaff,#f7f2ff,#ffd0e2,#ffb0c6,#ff96b0,#ff819e,#ff708f,#ff6282,#ff5577,#ff4a6e,#ff4166,#ff385f,#ff3058,#ff2953,#ff234e,#ff1d49,#ff1845,#ff1341,#ff0e3d,#ff0a3a,#ff0637,#ff0134,#ff0031,#ff002f,#ff002d,#ff002b,#ff0029,#ff0027,#ff0025,#ff0023,#ff0022,#ff0020,#ff001f,#ff001d,#ff001c,#ff001b,#ff0019,#ff0018,#ff0017,#ff0016,#ff0015,#ff0014)"></i><i style="top:99px;background:linear-gradient(90deg,#00ffbc,#00ffbf,#00ffc1,#00ffc4,#00ffc7,#00ffca,#00ffcd,#00ffd1,#00ffd4,#00ffd8,#00ffdd,#00ffe1,#00ffe6,#00ffeb,#00fff0,#28fff6,#51fffc,#78fbff,#9ef4ff,#c5edff,#ebe5ff,#ffceed,#ffaed0,#ff95b8,#ff80a5,#ff6f96,#ff6089,#ff547d,#ff4974,#ff3f6b,#ff3764,#ff2f5d,#ff2857,#ff2252,#ff1c4d,#ff1749,#ff1245,#ff0d41,#ff093d,#ff043a,#ff0037,#ff0035,#ff0032,#ff0030,#ff002d,#ff002b,#ff0029,#ff0027,#ff0026,#ff0024,#ff0022,#ff0021,#ff001f,#ff001e,#ff001d,#ff001b,#ff001a,#ff0019,#ff0018,#ff0017,#ff0016)"></i><i style="top:102px;background:linear-gradient(90deg,#00ffc4,#00ffc6,#00ffc9,#00ffcc,#00ffcf,#00ffd3,#00ffd6,#00ffda,#00ffde,#00ffe2,#00ffe7,#00ffeb,#00fff0,#00fff6,#00fffc,#26fcff,#4df5ff,#72efff,#97e8ff,#bbe1ff,#e0d9ff,#ffcdf9,#ffacda,#ff93c1,#ff7ead,#ff6d9d,#ff5e8f,#ff5284,#ff4779,#ff3e71,#ff3569,#ff2e62,#ff275c,#ff2156,#ff1b51,#ff164c,#ff1148,#ff0c44,#ff0841,#ff033e,#ff003a,#ff0038,#ff0035,#ff0032,#ff0030,#ff002e,#ff002c,#ff002a,#ff0028,#ff0026,#ff0025,#ff0023,#ff0022,#ff0020,#ff001f,#ff001e,#ff001c,#ff001b,#ff001a,#ff0019,#ff0018)"></i><i style="top:105px;background:linear-gradient(90deg,#00ffcb,#00ffce,#00ffd1,#00ffd4,#00ffd8,#00ffdb,#00ffdf,#00ffe3,#00ffe7,#00ffec,#00fff1,#00fff6,#00fffb,#00fdff,#00f7ff,#23f0ff,#48eaff,#6ce3ff,#8fdcff,#b3d5ff,#d6ceff,#fac7ff,#ffabe4,#ff91ca,#ff7cb5,#ff6ba4,#ff5d96,#ff518a,#ff467f,#ff3c76,#ff346e,#ff2c67,#ff2660,#ff1f5a,#ff1a55,#ff1450,#ff0f4c,#ff0b48,#ff0644,#ff0241,#ff003e,#ff003b,#ff0038,#ff0035,#ff0033,#ff0031,#ff002f,#ff002d,#ff002b,#ff0029,#ff0027,#ff0025,#ff0024,#ff0022,#ff0021,#ff0020,#ff001e,#ff001d,#ff001c,#ff001b,#ff001a)"></i><i style="top:108px;background:linear-gradient(90deg,#00ffd3,#00ffd6,#00ffd9,#00ffdc,#00ffe0,#00ffe4,#00ffe8,#00ffec,#00fff1,#00fff6,#00fffb,#00fdff,#00f8ff,#00f2ff,#00ecff,#20e5ff,#44dfff,#67d9ff,#89d2ff,#abcbff,#cdc4ff,#efbdff,#ffa9ee,#ff8fd3,#ff7bbd,#ff6aab,#ff5b9c,#ff4f90,#ff4485,#ff3b7b,#ff3273,#ff2b6b,#ff2465,#ff1e5f,#ff1859,#ff1354,#ff0e50,#ff0a4b,#ff0548,#ff0044,#ff0041,#ff003e,#ff003b,#ff0038,#ff0036,#ff0033,#ff0031,#ff002f,#ff002d,#ff002b,#ff0029,#ff0028,#ff0026,#ff0025,#ff0023,#ff0022,#ff0020,#ff001f,#ff001e,#ff001d,#ff001c)"></i><i style="top:111px;background:linear-gradient(90deg,#00ffda,#00ffde,#00ffe1,#00ffe5,#00ffe9,#00ffed,#00fff1,#00fff6,#00fffb,#00feff,#00f9ff,#00f3ff,#00edff,#00e7ff,#00e2ff,#1ddbff,#40d5ff,#62cfff,#83c8ff,#a3c1ff,#c4baff,#e5b3ff,#ffa7f8,#ff8edc,#ff79c5,#ff68b3,#ff5aa3,#ff4d96,#ff438a,#ff3980,#ff3178,#ff2a70,#ff2369,#ff1d63,#ff175d,#ff1258,#ff0d53,#ff084f,#ff044b,#ff0047,#ff0044,#ff0041,#ff003e,#ff003b,#ff0038,#ff0036,#ff0034,#ff0032,#ff0030,#ff002e,#ff002c,#ff002a,#ff0028,#ff0027,#ff0025,#ff0024,#ff0023,#ff0021,#ff0020,#ff001f,#ff001e)"></i><i style="top:114px;background:linear-gradient(90deg,#00ffe2,#00ffe6,#00ffe9,#00ffed,#00fff1,#00fff6,#00fffa,#00ffff,#00f9ff,#00f4ff,#00efff,#00e9ff,#00e4ff,#00deff,#00d8ff,#1ad2ff,#3cccff,#5dc5ff,#7dbfff,#9cb8ff,#bcb1ff,#dcaaff,#fca3ff,#ff8ce5,#ff77cd,#ff66ba,#ff58aa,#ff4c9c,#ff4190,#ff3886,#ff307d,#ff2875,#ff226d,#ff1b67,#ff1661,#ff115c,#ff0c57,#ff0752,#ff024e,#ff004b,#ff0047,#ff0044,#ff0041,#ff003e,#ff003b,#ff0039,#ff0036,#ff0034,#ff0032,#ff0030,#ff002e,#ff002c,#ff002b,#ff0029,#ff0027,#ff0026,#ff0025,#ff0023,#ff0022,#ff0021,#ff001f)"></i><i style="top:117px;background:linear-gradient(90deg,#00ffea,#00ffee,#00fff2,#00fff6,#00fffa,#00ffff,#00faff,#00f5ff,#00f0ff,#00ebff,#00e6ff,#00e0ff,#00dbff,#00d5ff,#00cfff,#18c9ff,#39c3ff,#58bdff,#77b6ff,#96b0ff,#b5a9ff,#d3a2ff,#f29bff,#ff8aee,#ff76d5,#ff65c1,#ff57b0,#ff4aa2,#ff4096,#ff368b,#ff2e82,#ff2779,#ff2072,#ff1a6b,#ff1465,#ff0f60,#ff0a5b,#ff0656,#ff0152,#ff004e,#ff004a,#ff0047,#ff0044,#ff0041,#ff003e,#ff003b,#ff0039,#ff0037,#ff0034,#ff0032,#ff0030,#ff002f,#ff002d,#ff002b,#ff002a,#ff0028,#ff0027,#ff0025,#ff0024,#ff0023,#ff0021)"></i><i style="top:120px;background:linear-gradient(90deg,#00fff2,#00fff6,#00fffa,#00fffe,#00fbff,#00f6ff,#00f1ff,#00ecff,#00e7ff,#00e2ff,#00ddff,#00d8ff,#00d2ff,#00cdff,#00c7ff,#15c1ff,#36bbff,#54b5ff,#72afff,#90a8ff,#aea1ff,#cb9bff,#e994ff,#ff88f7,#ff74de,#ff63c9,#ff55b7,#ff49a8,#ff3e9c,#ff3591,#ff2d87,#ff257e,#ff1f76,#ff196f,#ff1369,#ff0e64,#ff095e,#ff045a,#ff0055,#ff0051,#ff004d,#ff004a,#ff0047,#ff0044,#ff0041,#ff003e,#ff003c,#ff0039,#ff0037,#ff0035,#ff0033,#ff0031,#ff002f,#ff002d,#ff002c,#ff002a,#ff0029,#ff0027,#ff0026,#ff0024,#ff0023)"></i><i style="top:123px;background:linear-gradient(90deg,#00fffa,#00fffe,#00fcff,#00f7ff,#00f2ff,#00eeff,#00e9ff,#00e4ff,#00dfff,#00daff,#00d5ff,#00cfff,#00caff,#00c5ff,#00bfff,#13b9ff,#32b3ff,#50adff,#6da7ff,#8aa1ff,#a79aff,#c494ff,#e18dff,#fe86ff,#ff72e6,#ff61d0,#ff53be,#ff47af,#ff3da1,#ff3396,#ff2b8c,#ff2483,#ff1d7b,#ff1774,#ff126d,#ff0d67,#ff0862,#ff035d,#ff0059,#ff0054,#ff0051,#ff004d,#ff004a,#ff0046,#ff0043,#ff0041,#ff003e,#ff003c,#ff0039,#ff0037,#ff0035,#ff0033,#ff0031,#ff0030,#ff002e,#ff002c,#ff002b,#ff0029,#ff0028,#ff0026,#ff0025)"></i><i style="top:126px;background:linear-gradient(90deg,#00fcff,#00f8ff,#00f3ff,#00efff,#00eaff,#00e6ff,#00e1ff,#00dcff,#00d7ff,#00d2ff,#00cdff,#00c8ff,#00c3ff,#00bdff,#00b7ff,#11b2ff,#30acff,#4da6ff,#69a0ff,#859aff,#a193ff,#bd8dff,#d986ff,#f57fff,#ff70ee,#ff60d8,#ff52c5,#ff45b5,#ff3ba7,#ff329b,#ff2a91,#ff2388,#ff1c7f,#ff1678,#ff1071,#ff0b6b,#ff0666,#ff0161,#ff005c,#ff0058,#ff0054,#ff0050,#ff004c,#ff0049,#ff0046,#ff0043,#ff0041,#ff003e,#ff003c,#ff003a,#ff0037,#ff0035,#ff0034,#ff0032,#ff0030,#ff002e,#ff002d,#ff002b,#ff002a,#ff0028,#ff0027)"></i><i style="top:129px;background:linear-gradient(90deg,#00f4ff,#00f0ff,#00ecff,#00e7ff,#00e3ff,#00deff,#00d9ff,#00d5ff,#00d0ff,#00cbff,#00c6ff,#00c1ff,#00bbff,#00b6ff,#00b0ff,#0fabff,#2da5ff,#499fff,#6599ff,#8093ff,#9b8dff,#b686ff,#d180ff,#ec79ff,#ff6ef6,#ff5edf,#ff50cc,#ff44bb,#ff39ad,#ff30a1,#ff2896,#ff218c,#ff1b84,#ff157c,#ff0f75,#ff0a6f,#ff0569,#ff0064,#ff005f,#ff005b,#ff0057,#ff0053,#ff004f,#ff004c,#ff0049,#ff0046,#ff0043,#ff0041,#ff003e,#ff003c,#ff003a,#ff0038,#ff0036,#ff0034,#ff0032,#ff0030,#ff002f,#ff002d,#ff002c,#ff002a,#ff0029)"></i><i style="top:132px;background:linear-gradient(90deg,#00edff,#00e9ff,#00e4ff,#00e0ff,#00dbff,#00d7ff,#00d2ff,#00ceff,#00c9ff,#00c4ff,#00bfff,#00baff,#00b5ff,#00afff,#00aaff,#0da4ff,#2a9fff,#4699ff,#6193ff,#7b8dff,#9687ff,#b081ff,#ca7aff,#e573ff,#ff6dff,#ff5ce7,#ff4ed3,#ff42c1,#ff38b3,#ff2fa6,#ff279b,#ff2091,#ff1988,#ff1380,#ff0e79,#ff0873,#ff036d,#ff0068,#ff0063,#ff005e,#ff005a,#ff0056,#ff0052,#ff004f,#ff004c,#ff0049,#ff0046,#ff0043,#ff0041,#ff003e,#ff003c,#ff003a,#ff0038,#ff0036,#ff0034,#ff0032,#ff0031,#ff002f,#ff002e,#ff002c,#ff002b)"></i><i style="top:135px;background:linear-gradient(90deg,#00e6ff,#00e2ff,#00ddff,#00d9ff,#00d5ff,#00d0ff,#00cbff,#00c7ff,#00c2ff,#00bdff,#00b8ff,#00b3ff,#00aeff,#00a9ff,#00a4ff,#0b9eff,#2899ff,#4393ff,#5d8dff,#7787ff,#9081ff,#aa7bff,#c375ff,#dd6eff,#f767ff,#ff5aee,#ff4cd9,#ff40c8,#ff36b9,#ff2dac,#ff25a0,#ff1e96,#ff188d,#ff1285,#ff0c7d,#ff0777,#ff0271,#ff006b,#ff0066,#ff0061,#ff005d,#ff0059,#ff0055,#ff0052,#ff004e,#ff004b,#ff0048,#ff0046,#ff0043,#ff0041,#ff003e,#ff003c,#ff003a,#ff0038,#ff0036,#ff0034,#ff0033,#ff0031,#ff002f,#ff002e,#ff002d)"></i><i style="top:138px;background:linear-gradient(90deg,#00dfff,#00dbff,#00d7ff,#00d2ff,#00ceff,#00caff,#00c5ff,#00c0ff,#00bcff,#00b7ff,#00b2ff,#00adff,#00a8ff,#00a3ff,#009eff,#0998ff,#2593ff,#408dff,#5987ff,#7282ff,#8b7cff,#a476ff,#bd6fff,#d669ff,#ef62ff,#ff58f6,#ff4be0,#ff3fce,#ff35bf,#ff2cb1,#ff24a5,#ff1d9b,#ff1691,#ff1089,#ff0b82,#ff057b,#ff0074,#ff006f,#ff006a,#ff0065,#ff0060,#ff005c,#ff0058,#ff0055,#ff0051,#ff004e,#ff004b,#ff0048,#ff0046,#ff0043,#ff0041,#ff003e,#ff003c,#ff003a,#ff0038,#ff0036,#ff0035,#ff0033,#ff0031,#ff0030,#ff002e)"></i><i style="top:141px;background:linear-gradient(90deg,#00d9ff,#00d4ff,#00d0ff,#00ccff,#00c8ff,#00c3ff,#00bfff,#00baff,#00b6ff,#00b1ff,#00acff,#00a7ff,#00a2ff,#009dff,#0098ff,#0793ff,#238dff,#3d88ff,#5682ff,#6e7cff,#8776ff,#9f70ff,#b76aff,#d064ff,#e85eff,#ff57fe,#ff49e7,#ff3dd5,#ff33c4,#ff2ab7,#ff22aa,#ff1ba0,#ff1596,#ff0f8d,#ff0986,#ff047f,#ff0078,#ff0072,#ff006d,#ff0068,#ff0063,#ff005f,#ff005b,#ff0057,#ff0054,#ff0051,#ff004e,#ff004b,#ff0048,#ff0045,#ff0043,#ff0041,#ff003e,#ff003c,#ff003a,#ff0039,#ff0037,#ff0035,#ff0033,#ff0032,#ff0030)"></i><i style="top:144px;background:linear-gradient(90deg,#00d2ff,#00ceff,#00caff,#00c6ff,#00c2ff,#00bdff,#00b9ff,#00b4ff,#00b0ff,#00abff,#00a6ff,#00a2ff,#009dff,#0098ff,#0092ff,#068dff,#2188ff,#3a82ff,#537dff,#6b77ff,#8271ff,#9a6cff,#b266ff,#c95fff,#e159ff,#f953ff,#ff47ee,#ff3bdb,#ff31ca,#ff28bc,#ff21af,#ff1aa4,#ff139a,#ff0d92,#ff088a,#ff0282,#ff007c,#ff0076,#ff0070,#ff006b,#ff0066,#ff0062,#ff005e,#ff005a,#ff0057,#ff0053,#ff0050,#ff004d,#ff004a,#ff0048,#ff0045,#ff0043,#ff0041,#ff003f,#ff003c,#ff003b,#ff0039,#ff0037,#ff0035,#ff0034,#ff0032)"></i><i style="top:147px;background:linear-gradient(90deg,#00cdff,#00c8ff,#00c4ff,#00c0ff,#00bcff,#00b8ff,#00b3ff,#00afff,#00aaff,#00a6ff,#00a1ff,#009cff,#0097ff,#0092ff,#008dff,#0488ff,#1f83ff,#387eff,#5078ff,#6772ff,#7e6dff,#9567ff,#ac61ff,#c35bff,#da55ff,#f24eff,#ff45f5,#ff3ae1,#ff30d0,#ff27c2,#ff1fb5,#ff18a9,#ff129f,#ff0c96,#ff068e,#ff0086,#ff0080,#ff0079,#ff0074,#ff006e,#ff006a,#ff0065,#ff0061,#ff005d,#ff0059,#ff0056,#ff0053,#ff0050,#ff004d,#ff004a,#ff0048,#ff0045,#ff0043,#ff0041,#ff003f,#ff003d,#ff003b,#ff0039,#ff0037,#ff0035,#ff0034)"></i><i style="top:150px;background:linear-gradient(90deg,#00c7ff,#00c3ff,#00bfff,#00bbff,#00b6ff,#00b2ff,#00aeff,#00a9ff,#00a5ff,#00a0ff,#009cff,#0097ff,#0092ff,#008dff,#0088ff,#0283ff,#1d7eff,#3579ff,#4d73ff,#636eff,#7a68ff,#9163ff,#a75dff,#be57ff,#d451ff,#eb4aff,#ff43fd,#ff38e8,#ff2ed6,#ff25c7,#ff1dba,#ff16ae,#ff10a4,#ff0a9a,#ff0492,#ff008a,#ff0083,#ff007d,#ff0077,#ff0072,#ff006d,#ff0068,#ff0064,#ff0060,#ff005c,#ff0059,#ff0055,#ff0052,#ff004f,#ff004d,#ff004a,#ff0047,#ff0045,#ff0043,#ff0041,#ff003f,#ff003d,#ff003b,#ff0039,#ff0037,#ff0036)"></i><i style="top:153px;background:linear-gradient(90deg,#00c1ff,#00bdff,#00b9ff,#00b5ff,#00b1ff,#00adff,#00a9ff,#00a4ff,#00a0ff,#009bff,#0097ff,#0092ff,#008dff,#0089ff,#0084ff,#007fff,#1b7aff,#3374ff,#4a6fff,#606aff,#7664ff,#8c5eff,#a259ff,#b853ff,#ce4dff,#e447ff,#fa40ff,#ff36ef,#ff2cdc,#ff23cd,#ff1cbf,#ff15b3,#ff0ea8,#ff089f,#ff0396,#ff008e,#ff0087,#ff0081,#ff007b,#ff0075,#ff0070,#ff006b,#ff0067,#ff0063,#ff005f,#ff005b,#ff0058,#ff0055,#ff0052,#ff004f,#ff004c,#ff004a,#ff0047,#ff0045,#ff0043,#ff0041,#ff003f,#ff003d,#ff003b,#ff0039,#ff0038)"></i><i style="top:156px;background:linear-gradient(90deg,#00bcff,#00b8ff,#00b4ff,#00b0ff,#00acff,#00a8ff,#00a4ff,#009fff,#009bff,#0097ff,#0092ff,#008dff,#0089ff,#0084ff,#007fff,#007aff,#1975ff,#3170ff,#476bff,#5d65ff,#7360ff,#885aff,#9e55ff,#b34fff,#c849ff,#de43ff,#f43dff,#ff34f5,#ff2ae2,#ff22d2,#ff1ac4,#ff13b8,#ff0dad,#ff07a3,#ff019a,#ff0092,#ff008b,#ff0084,#ff007e,#ff0078,#ff0073,#ff006e,#ff006a,#ff0066,#ff0062,#ff005e,#ff005a,#ff0057,#ff0054,#ff0051,#ff004e,#ff004c,#ff0049,#ff0047,#ff0045,#ff0043,#ff0041,#ff003f,#ff003d,#ff003b,#ff0039)"></i><i style="top:159px;background:linear-gradient(90deg,#00b7ff,#00b3ff,#00afff,#00abff,#00a7ff,#00a3ff,#009fff,#009bff,#0096ff,#0092ff,#008dff,#0089ff,#0084ff,#0080ff,#007bff,#0076ff,#1871ff,#2f6cff,#4567ff,#5a61ff,#6f5cff,#8457ff,#9951ff,#ae4bff,#c345ff,#d83fff,#ed39ff,#ff32fc,#ff29e8,#ff20d8,#ff18c9,#ff11bd,#ff0bb1,#ff05a7,#ff009e,#ff0096,#ff008e,#ff0088,#ff0081,#ff007c,#ff0076,#ff0071,#ff006d,#ff0068,#ff0064,#ff0061,#ff005d,#ff005a,#ff0057,#ff0054,#ff0051,#ff004e,#ff004c,#ff0049,#ff0047,#ff0045,#ff0043,#ff0041,#ff003f,#ff003d,#ff003b)"></i><i style="top:162px;background:linear-gradient(90deg,#00b2ff,#00aeff,#00abff,#00a7ff,#00a3ff,#009eff,#009aff,#0096ff,#0092ff,#008dff,#0089ff,#0085ff,#0080ff,#007bff,#0077ff,#0072ff,#166dff,#2d68ff,#4263ff,#575eff,#6c58ff,#8053ff,#954dff,#a948ff,#be42ff,#d23cff,#e736ff,#fc30ff,#ff27ef,#ff1ede,#ff17cf,#ff10c2,#ff09b6,#ff03ac,#ff00a2,#ff009a,#ff0092,#ff008b,#ff0085,#ff007f,#ff0079,#ff0074,#ff0070,#ff006b,#ff0067,#ff0063,#ff0060,#ff005c,#ff0059,#ff0056,#ff0053,#ff0050,#ff004e,#ff004b,#ff0049,#ff0047,#ff0045,#ff0043,#ff0041,#ff003f,#ff003d)"></i><i style="top:165px;background:linear-gradient(90deg,#00aeff,#00aaff,#00a6ff,#00a2ff,#009eff,#009aff,#0096ff,#0092ff,#008eff,#0089ff,#0085ff,#0080ff,#007cff,#0077ff,#0073ff,#006eff,#1469ff,#2b64ff,#405fff,#545aff,#6955ff,#7d4fff,#914aff,#a544ff,#b93fff,#cd39ff,#e133ff,#f52dff,#ff25f5,#ff1ce3,#ff15d4,#ff0ec7,#ff08bb,#ff01b0,#ff00a6,#ff009e,#ff0096,#ff008f,#ff0088,#ff0082,#ff007d,#ff0077,#ff0073,#ff006e,#ff006a,#ff0066,#ff0062,#ff005f,#ff005b,#ff0058,#ff0055,#ff0053,#ff0050,#ff004d,#ff004b,#ff0049,#ff0047,#ff0045,#ff0043,#ff0041,#ff003f)"></i><i style="top:168px;background:linear-gradient(90deg,#00a9ff,#00a5ff,#00a2ff,#009eff,#009aff,#0096ff,#0092ff,#008eff,#0089ff,#0085ff,#0081ff,#007cff,#0078ff,#0073ff,#006fff,#006aff,#1365ff,#2960ff,#3d5cff,#5256ff,#6651ff,#794cff,#8d47ff,#a141ff,#b43cff,#c836ff,#dc30ff,#ef2aff,#ff23fb,#ff1be9,#ff13d9,#ff0ccc,#ff06bf,#ff00b4,#ff00ab,#ff00a2,#ff009a,#ff0092,#ff008c,#ff0085,#ff0080,#ff007a,#ff0075,#ff0071,#ff006d,#ff0069,#ff0065,#ff0061,#ff005e,#ff005b,#ff0058,#ff0055,#ff0052,#ff0050,#ff004d,#ff004b,#ff0049,#ff0046,#ff0044,#ff0042,#ff0041)"></i><i style="top:171px;background:linear-gradient(90deg,#00a5ff,#00a1ff,#009dff,#0099ff,#0096ff,#0092ff,#008eff,#008aff,#0085ff,#0081ff,#007dff,#0079ff,#0074ff,#0070ff,#006bff,#0066ff,#1162ff,#275dff,#3b58ff,#4f53ff,#634eff,#7649ff,#8944ff,#9c3eff,#b039ff,#c333ff,#d62dff,#e927ff,#fd21ff,#ff19ef,#ff11df,#ff0ad1,#ff04c4,#ff00b9,#ff00af,#ff00a6,#ff009e,#ff0096,#ff008f,#ff0089,#ff0083,#ff007d,#ff0078,#ff0074,#ff006f,#ff006b,#ff0067,#ff0064,#ff0060,#ff005d,#ff005a,#ff0057,#ff0054,#ff0052,#ff004f,#ff004d,#ff004b,#ff0048,#ff0046,#ff0044,#ff0042)"></i><i style="top:174px;background:linear-gradient(90deg,#00a1ff,#009dff,#0099ff,#0095ff,#0092ff,#008eff,#008aff,#0086ff,#0082ff,#007dff,#0079ff,#0075ff,#0071ff,#006cff,#0068ff,#0063ff,#105eff,#255aff,#3955ff,#4d50ff,#604bff,#7346ff,#8640ff,#983bff,#ab36ff,#be30ff,#d12aff,#e424ff,#f71eff,#ff17f4,#ff0fe4,#ff09d6,#ff02c9,#ff00bd,#ff00b3,#ff00aa,#ff00a1,#ff009a,#ff0093,#ff008c,#ff0086,#ff0081,#ff007b,#ff0077,#ff0072,#ff006e,#ff006a,#ff0066,#ff0063,#ff005f,#ff005c,#ff0059,#ff0056,#ff0054,#ff0051,#ff004f,#ff004d,#ff004a,#ff0048,#ff0046,#ff0044)"></i><i style="top:177px;background:linear-gradient(90deg,#009dff,#0099ff,#0095ff,#0091ff,#008eff,#008aff,#0086ff,#0082ff,#007eff,#007aff,#0076ff,#0071ff,#006dff,#0069ff,#0064ff,#0060ff,#0f5bff,#2356ff,#3752ff,#4a4dff,#5d48ff,#7043ff,#823eff,#9538ff,#a733ff,#ba2dff,#cc28ff,#df22ff,#f11cff,#ff15fa,#ff0ee9,#ff07db,#ff00cd,#ff00c2,#ff00b7,#ff00ae,#ff00a5,#ff009d,#ff0096,#ff008f,#ff0089,#ff0084,#ff007e,#ff0079,#ff0075,#ff0070,#ff006c,#ff0069,#ff0065,#ff0062,#ff005f,#ff005c,#ff0059,#ff0056,#ff0053,#ff0051,#ff004f,#ff004c,#ff004a,#ff0048,#ff0046)"></i><i style="top:180px;background:linear-gradient(90deg,#0099ff,#0095ff,#0091ff,#008eff,#008aff,#0086ff,#0082ff,#007eff,#007aff,#0076ff,#0072ff,#006eff,#006aff,#0065ff,#0061ff,#005cff,#0d58ff,#2253ff,#354eff,#484aff,#5a45ff,#6d40ff,#7f3bff,#9135ff,#a330ff,#b52bff,#c725ff,#d91fff,#ec19ff,#fe13ff,#ff0cef,#ff05e0,#ff00d2,#ff00c6,#ff00bb,#ff00b2,#ff00a9,#ff00a1,#ff0099,#ff0093,#ff008c,#ff0087,#ff0081,#ff007c,#ff0078,#ff0073,#ff006f,#ff006b,#ff0068,#ff0064,#ff0061,#ff005e,#ff005b,#ff0058,#ff0055,#ff0053,#ff0050,#ff004e,#ff004c,#ff004a,#ff0048)"></i><i style="top:183px;background:linear-gradient(90deg,#0095ff,#0091ff,#008eff,#008aff,#0086ff,#0082ff,#007fff,#007bff,#0077ff,#0073ff,#006fff,#006bff,#0066ff,#0062ff,#005eff,#0059ff,#0c55ff,#2050ff,#334cff,#4647ff,#5842ff,#6a3dff,#7c38ff,#8e33ff,#9f2eff,#b128ff,#c323ff,#d51dff,#e617ff,#f811ff,#ff0af4,#ff03e5,#ff00d7,#ff00cb,#ff00c0,#ff00b6,#ff00ad,#ff00a4,#ff009d,#ff0096,#ff0090,#ff008a,#ff0084,#ff007f,#ff007a,#ff0076,#ff0072,#ff006e,#ff006a,#ff0066,#ff0063,#ff0060,#ff005d,#ff005a,#ff0057,#ff0055,#ff0052,#ff0050,#ff004e,#ff004c,#ff004a)"></i><i style="top:186px;background:linear-gradient(90deg,#0091ff,#008eff,#008aff,#0086ff,#0083ff,#007fff,#007bff,#0077ff,#0073ff,#006fff,#006bff,#0067ff,#0063ff,#005fff,#005bff,#0056ff,#0b52ff,#1f4dff,#3149ff,#4444ff,#553fff,#673aff,#7935ff,#8a30ff,#9c2bff,#ad26ff,#be20ff,#d01aff,#e115ff,#f30eff,#ff08fa,#ff00ea,#ff00dc,#ff00cf,#ff00c4,#ff00ba,#ff00b1,#ff00a8,#ff00a0,#ff0099,#ff0093,#ff008d,#ff0087,#ff0082,#ff007d,#ff0078,#ff0074,#ff0070,#ff006c,#ff0069,#ff0065,#ff0062,#ff005f,#ff005c,#ff005a,#ff0057,#ff0054,#ff0052,#ff0050,#ff004e,#ff004c)"></i><i style="top:189px;background:linear-gradient(90deg,#008eff,#008aff,#0087ff,#0083ff,#007fff,#007cff,#0078ff,#0074ff,#0070ff,#006cff,#0068ff,#0064ff,#0060ff,#005cff,#0058ff,#0053ff,#094fff,#1d4aff,#3046ff,#4241ff,#533dff,#6438ff,#7633ff,#872eff,#9829ff,#a923ff,#ba1eff,#cb18ff,#dc12ff,#ee0cff,#ff06ff,#ff00ef,#ff00e0,#ff00d4,#ff00c8,#ff00be,#ff00b4,#ff00ac,#ff00a4,#ff009d,#ff0096,#ff0090,#ff008a,#ff0085,#ff0080,#ff007b,#ff0077,#ff0073,#ff006f,#ff006b,#ff0068,#ff0064,#ff0061,#ff005e,#ff005c,#ff0059,#ff0056,#ff0054,#ff0052,#ff004f,#ff004d)"></i><i style="top:192px;background:linear-gradient(90deg,#008aff,#0087ff,#0083ff,#0080ff,#007cff,#0078ff,#0075ff,#0071ff,#006dff,#0069ff,#0065ff,#0061ff,#005dff,#0059ff,#0055ff,#0050ff,#084cff,#1c48ff,#2e43ff,#403fff,#513aff,#6235ff,#7330ff,#842bff,#9526ff,#a521ff,#b61cff,#c716ff,#d810ff,#e90aff,#fa03ff,#ff00f4,#ff00e5,#ff00d8,#ff00cc,#ff00c2,#ff00b8,#ff00af,#ff00a7,#ff00a0,#ff0099,#ff0093,#ff008d,#ff0088,#ff0083,#ff007e,#ff0079,#ff0075,#ff0071,#ff006e,#ff006a,#ff0067,#ff0064,#ff0061,#ff005e,#ff005b,#ff0058,#ff0056,#ff0054,#ff0051,#ff004f)"></i><i style="top:195px;background:linear-gradient(90deg,#0087ff,#0084ff,#0080ff,#007cff,#0079ff,#0075ff,#0072ff,#006eff,#006aff,#0066ff,#0062ff,#005eff,#005aff,#0056ff,#0052ff,#004eff,#0749ff,#1a45ff,#2c41ff,#3e3cff,#4f37ff,#5f33ff,#702eff,#8129ff,#9124ff,#a21fff,#b219ff,#c314ff,#d30eff,#e408ff,#f401ff,#ff00f9,#ff00ea,#ff00dd,#ff00d1,#ff00c6,#ff00bc,#ff00b3,#ff00ab,#ff00a3,#ff009c,#ff0096,#ff0090,#ff008b,#ff0085,#ff0081,#ff007c,#ff0078,#ff0074,#ff0070,#ff006c,#ff0069,#ff0066,#ff0063,#ff0060,#ff005d,#ff005a,#ff0058,#ff0055,#ff0053,#ff0051)"></i><i style="top:198px;background:linear-gradient(90deg,#0084ff,#0080ff,#007dff,#0079ff,#0076ff,#0072ff,#006fff,#006bff,#0067ff,#0063ff,#005fff,#005bff,#0057ff,#0053ff,#004fff,#004bff,#0647ff,#1943ff,#2b3eff,#3c3aff,#4d35ff,#5d30ff,#6d2cff,#7e27ff,#8e22ff,#9e1dff,#ae17ff,#bf12ff,#cf0cff,#df06ff,#ef00ff,#ff00fe,#ff00ef,#ff00e1,#ff00d5,#ff00ca,#ff00c0,#ff00b7,#ff00ae,#ff00a7,#ff00a0,#ff0099,#ff0093,#ff008d,#ff0088,#ff0083,#ff007f,#ff007a,#ff0076,#ff0072,#ff006f,#ff006b,#ff0068,#ff0065,#ff0062,#ff005f,#ff005c,#ff005a,#ff0057,#ff0055,#ff0053)"></i><i style="top:201px;background:linear-gradient(90deg,#0081ff,#007dff,#007aff,#0076ff,#0073ff,#006fff,#006cff,#0068ff,#0064ff,#0060ff,#005dff,#0059ff,#0055ff,#0051ff,#004dff,#0049ff,#0544ff,#1840ff,#293cff,#3a37ff,#4b33ff,#5b2eff,#6b29ff,#7b25ff,#8b20ff,#9b1aff,#ab15ff,#bb10ff,#cb0aff,#db04ff,#eb00ff,#fb00ff,#ff00f4,#ff00e6,#ff00d9,#ff00ce,#ff00c4,#ff00ba,#ff00b2,#ff00aa,#ff00a3,#ff009c,#ff0096,#ff0090,#ff008b,#ff0086,#ff0081,#ff007d,#ff0079,#ff0075,#ff0071,#ff006d,#ff006a,#ff0067,#ff0064,#ff0061,#ff005e,#ff005c,#ff0059,#ff0057,#ff0055)"></i><i style="top:204px;background:linear-gradient(90deg,#007eff,#007aff,#0077ff,#0073ff,#0070ff,#006cff,#0069ff,#0065ff,#0061ff,#005eff,#005aff,#0056ff,#0052ff,#004eff,#004aff,#0046ff,#0342ff,#163eff,#2839ff,#3835ff,#4930ff,#592cff,#6827ff,#7822ff,#881dff,#9818ff,#a713ff,#b70eff,#c608ff,#d601ff,#e600ff,#f600ff,#ff00f9,#ff00ea,#ff00de,#ff00d2,#ff00c8,#ff00be,#ff00b5,#ff00ad,#ff00a6,#ff009f,#ff0099,#ff0093,#ff008e,#ff0089,#ff0084,#ff007f,#ff007b,#ff0077,#ff0073,#ff0070,#ff006c,#ff0069,#ff0066,#ff0063,#ff0060,#ff005e,#ff005b,#ff0059,#ff0056)"></i><i style="top:207px;background:linear-gradient(90deg,#007bff,#0077ff,#0074ff,#0071ff,#006dff,#006aff,#0066ff,#0062ff,#005fff,#005bff,#0057ff,#0053ff,#0050ff,#004cff,#0048ff,#0044ff,#0240ff,#153bff,#2637ff,#3733ff,#472eff,#562aff,#6625ff,#7620ff,#851bff,#9416ff,#a411ff,#b30cff,#c306ff,#d200ff,#e100ff,#f100ff,#ff00fd,#ff00ef,#ff00e2,#ff00d6,#ff00cc,#ff00c2,#ff00b9,#ff00b1,#ff00a9,#ff00a2,#ff009c,#ff0096,#ff0090,#ff008b,#ff0086,#ff0082,#ff007d,#ff0079,#ff0076,#ff0072,#ff006e,#ff006b,#ff0068,#ff0065,#ff0062,#ff0060,#ff005d,#ff005b,#ff0058)"></i><i style="top:210px;background:linear-gradient(90deg,#0078ff,#0075ff,#0071ff,#006eff,#006aff,#0067ff,#0063ff,#0060ff,#005cff,#0058ff,#0055ff,#0051ff,#004dff,#0049ff,#0045ff,#0041ff,#013dff,#1439ff,#2535ff,#3531ff,#452cff,#5428ff,#6423ff,#731eff,#8219ff,#9114ff,#a00fff,#b00aff,#bf04ff,#ce00ff,#dd00ff,#ec00ff,#fc00ff,#ff00f4,#ff00e6,#ff00da,#ff00cf,#ff00c6,#ff00bd,#ff00b4,#ff00ad,#ff00a6,#ff009f,#ff0099,#ff0093,#ff008e,#ff0089,#ff0084,#ff0080,#ff007c,#ff0078,#ff0074,#ff0071,#ff006d,#ff006a,#ff0067,#ff0064,#ff0061,#ff005f,#ff005c,#ff005a)"></i><i style="top:213px;background:linear-gradient(90deg,#0075ff,#0072ff,#006eff,#006bff,#0068ff,#0064ff,#0061ff,#005dff,#005aff,#0056ff,#0052ff,#004fff,#004bff,#0047ff,#0043ff,#003fff,#003bff,#1337ff,#2333ff,#332eff,#432aff,#5226ff,#6121ff,#701cff,#7f18ff,#8e13ff,#9d0dff,#ac08ff,#bb02ff,#ca00ff,#d900ff,#e800ff,#f700ff,#ff00f8,#ff00eb,#ff00de,#ff00d3,#ff00c9,#ff00c0,#ff00b8,#ff00b0,#ff00a9,#ff00a2,#ff009c,#ff0096,#ff0091,#ff008c,#ff0087,#ff0082,#ff007e,#ff007a,#ff0076,#ff0073,#ff006f,#ff006c,#ff0069,#ff0066,#ff0063,#ff0061,#ff005e,#ff005c)"></i><i style="top:216px;background:linear-gradient(90deg,#0072ff,#006fff,#006cff,#0068ff,#0065ff,#0062ff,#005eff,#005bff,#0057ff,#0054ff,#0050ff,#004cff,#0048ff,#0045ff,#0041ff,#003dff,#0039ff,#1235ff,#2231ff,#322cff,#4128ff,#5024ff,#5f1fff,#6e1aff,#7d16ff,#8b11ff,#9a0cff,#a906ff,#b700ff,#c600ff,#d500ff,#e400ff,#f200ff,#ff00fd,#ff00ef,#ff00e3,#ff00d7,#ff00cd,#ff00c4,#ff00bb,#ff00b3,#ff00ac,#ff00a5,#ff009f,#ff0099,#ff0093,#ff008e,#ff0089,#ff0085,#ff0081,#ff007c,#ff0079,#ff0075,#ff0072,#ff006e,#ff006b,#ff0068,#ff0065,#ff0063,#ff0060,#ff005e)"></i><i style="top:219px;background:linear-gradient(90deg,#0070ff,#006cff,#0069ff,#0066ff,#0063ff,#005fff,#005cff,#0058ff,#0055ff,#0051ff,#004eff,#004aff,#0046ff,#0042ff,#003fff,#003bff,#0037ff,#1133ff,#212fff,#302aff,#4026ff,#4e22ff,#5d1dff,#6c19ff,#7a14ff,#890fff,#970aff,#a604ff,#b400ff,#c200ff,#d100ff,#df00ff,#ee00ff,#fd00ff,#ff00f3,#ff00e7,#ff00db,#ff00d1,#ff00c7,#ff00be,#ff00b6,#ff00af,#ff00a8,#ff00a2,#ff009c,#ff0096,#ff0091,#ff008c,#ff0087,#ff0083,#ff007f,#ff007b,#ff0077,#ff0074,#ff0070,#ff006d,#ff006a,#ff0067,#ff0065,#ff0062,#ff005f)"></i><i style="top:222px;background:linear-gradient(90deg,#006dff,#006aff,#0067ff,#0063ff,#0060ff,#005dff,#0059ff,#0056ff,#0052ff,#004fff,#004bff,#0048ff,#0044ff,#0040ff,#003cff,#0039ff,#0035ff,#0f31ff,#202dff,#2f28ff,#3e24ff,#4d20ff,#5b1bff,#6917ff,#7812ff,#860dff,#9408ff,#a202ff,#b100ff,#bf00ff,#cd00ff,#db00ff,#ea00ff,#f800ff,#ff00f8,#ff00eb,#ff00df,#ff00d4,#ff00cb,#ff00c2,#ff00ba,#ff00b2,#ff00ab,#ff00a5,#ff009e,#ff0099,#ff0093,#ff008e,#ff008a,#ff0085,#ff0081,#ff007d,#ff0079,#ff0076,#ff0072,#ff006f,#ff006c,#ff0069,#ff0066,#ff0064,#ff0061)"></i><i style="top:225px;background:linear-gradient(90deg,#006bff,#0067ff,#0064ff,#0061ff,#005eff,#005aff,#0057ff,#0054ff,#0050ff,#004dff,#0049ff,#0046ff,#0042ff,#003eff,#003aff,#0037ff,#0033ff,#0e2fff,#1e2bff,#2e27ff,#3c22ff,#4b1eff,#591aff,#6715ff,#7510ff,#830bff,#9106ff,#9f00ff,#ad00ff,#bb00ff,#c900ff,#d700ff,#e600ff,#f400ff,#ff00fc,#ff00ef,#ff00e3,#ff00d8,#ff00ce,#ff00c5,#ff00bd,#ff00b5,#ff00ae,#ff00a7,#ff00a1,#ff009b,#ff0096,#ff0091,#ff008c,#ff0088,#ff0083,#ff007f,#ff007c,#ff0078,#ff0075,#ff0071,#ff006e,#ff006b,#ff0068,#ff0066,#ff0063)"></i><i style="top:228px;background:linear-gradient(90deg,#0068ff,#0065ff,#0062ff,#005fff,#005bff,#0058ff,#0055ff,#0051ff,#004eff,#004bff,#0047ff,#0043ff,#0040ff,#003cff,#0038ff,#0035ff,#0031ff,#0d2dff,#1d29ff,#2c25ff,#3b20ff,#491cff,#5718ff,#6513ff,#730fff,#810aff,#8f04ff,#9c00ff,#aa00ff,#b800ff,#c600ff,#d400ff,#e200ff,#ef00ff,#fd00ff,#ff00f3,#ff00e7,#ff00dc,#ff00d2,#ff00c9,#ff00c0,#ff00b8,#ff00b1,#ff00aa,#ff00a4,#ff009e,#ff0099,#ff0094,#ff008f,#ff008a,#ff0086,#ff0082,#ff007e,#ff007a,#ff0077,#ff0073,#ff0070,#ff006d,#ff006a,#ff0067,#ff0065)"></i><i style="top:231px;background:linear-gradient(90deg,#0066ff,#0063ff,#0060ff,#005cff,#0059ff,#0056ff,#0053ff,#004fff,#004cff,#0048ff,#0045ff,#0041ff,#003eff,#003aff,#0036ff,#0033ff,#002fff,#0c2bff,#1c27ff,#2b23ff,#391fff,#471aff,#5516ff,#6312ff,#710dff,#7e08ff,#8c03ff,#9a00ff,#a700ff,#b500ff,#c200ff,#d000ff,#de00ff,#eb00ff,#f900ff,#ff00f7,#ff00eb,#ff00e0,#ff00d6,#ff00cc,#ff00c4,#ff00bc,#ff00b4,#ff00ad,#ff00a7,#ff00a1,#ff009b,#ff0096,#ff0091,#ff008c,#ff0088,#ff0084,#ff0080,#ff007c,#ff0079,#ff0075,#ff0072,#ff006f,#ff006c,#ff0069,#ff0067)"></i><i style="top:234px;background:linear-gradient(90deg,#0064ff,#0060ff,#005dff,#005aff,#0057ff,#0054ff,#0050ff,#004dff,#004aff,#0046ff,#0043ff,#003fff,#003cff,#0038ff,#0034ff,#0031ff,#002dff,#0b29ff,#1b25ff,#2a21ff,#381dff,#4619ff,#5314ff,#6110ff,#6f0bff,#7c06ff,#8901ff,#9700ff,#a400ff,#b200ff,#bf00ff,#cc00ff,#da00ff,#e700ff,#f500ff,#ff00fc,#ff00ef,#ff00e4,#ff00d9,#ff00d0,#ff00c7,#ff00bf,#ff00b7,#ff00b0,#ff00aa,#ff00a4,#ff009e,#ff0099,#ff0094,#ff008f,#ff008a,#ff0086,#ff0082,#ff007e,#ff007b,#ff0077,#ff0074,#ff0071,#ff006e,#ff006b,#ff0068)"></i><i style="top:237px;background:linear-gradient(90deg,#0061ff,#005eff,#005bff,#0058ff,#0055ff,#0052ff,#004eff,#004bff,#0048ff,#0044ff,#0041ff,#003dff,#003aff,#0036ff,#0033ff,#002fff,#002bff,#0a27ff,#1a23ff,#281fff,#361bff,#4417ff,#5213ff,#5f0eff,#6c0aff,#7a05ff,#8700ff,#9400ff,#a100ff,#af00ff,#bc00ff,#c900ff,#d600ff,#e300ff,#f100ff,#fe00ff,#ff00f3,#ff00e7,#ff00dd,#ff00d3,#ff00ca,#ff00c2,#ff00ba,#ff00b3,#ff00ad,#ff00a6,#ff00a1,#ff009b,#ff0096,#ff0091,#ff008d,#ff0088,#ff0084,#ff0081,#ff007d,#ff0079,#ff0076,#ff0073,#ff0070,#ff006d,#ff006a)"></i><i style="top:240px;background:linear-gradient(90deg,#005fff,#005cff,#0059ff,#0056ff,#0053ff,#004fff,#004cff,#0049ff,#0046ff,#0042ff,#003fff,#003bff,#0038ff,#0034ff,#0031ff,#002dff,#0029ff,#0926ff,#1922ff,#271eff,#351aff,#4315ff,#5011ff,#5d0dff,#6a08ff,#7703ff,#8400ff,#9100ff,#9f00ff,#ac00ff,#b900ff,#c600ff,#d300ff,#e000ff,#ed00ff,#fa00ff,#ff00f7,#ff00eb,#ff00e0,#ff00d7,#ff00cd,#ff00c5,#ff00bd,#ff00b6,#ff00af,#ff00a9,#ff00a3,#ff009e,#ff0099,#ff0094,#ff008f,#ff008b,#ff0087,#ff0083,#ff007f,#ff007b,#ff0078,#ff0075,#ff0072,#ff006f,#ff006c)"></i><i style="top:243px;background:linear-gradient(90deg,#005dff,#005aff,#0057ff,#0054ff,#0051ff,#004dff,#004aff,#0047ff,#0044ff,#0040ff,#003dff,#003aff,#0036ff,#0033ff,#002fff,#002bff,#0028ff,#0924ff,#1820ff,#261cff,#3418ff,#4114ff,#4e10ff,#5b0bff,#6806ff,#7501ff,#8200ff,#8f00ff,#9c00ff,#a900ff,#b500ff,#c200ff,#cf00ff,#dc00ff,#e900ff,#f600ff,#ff00fb,#ff00ef,#ff00e4,#ff00da,#ff00d1,#ff00c8,#ff00c0,#ff00b9,#ff00b2,#ff00ac,#ff00a6,#ff00a0,#ff009b,#ff0096,#ff0091,#ff008d,#ff0089,#ff0085,#ff0081,#ff007d,#ff007a,#ff0077,#ff0074,#ff0071,#ff006e)"></i><i style="top:246px;background:linear-gradient(90deg,#005bff,#0058ff,#0055ff,#0052ff,#004fff,#004bff,#0048ff,#0045ff,#0042ff,#003fff,#003bff,#0038ff,#0034ff,#0031ff,#002dff,#002aff,#0026ff,#0822ff,#171eff,#251aff,#3216ff,#3f12ff,#4d0eff,#590aff,#6605ff,#7300ff,#8000ff,#8c00ff,#9900ff,#a600ff,#b200ff,#bf00ff,#cc00ff,#d800ff,#e500ff,#f200ff,#ff00ff,#ff00f3,#ff00e8,#ff00de,#ff00d4,#ff00cb,#ff00c3,#ff00bc,#ff00b5,#ff00af,#ff00a9,#ff00a3,#ff009d,#ff0098,#ff0094,#ff008f,#ff008b,#ff0087,#ff0083,#ff007f,#ff007c,#ff0079,#ff0076,#ff0073,#ff0070)"></i><i style="top:249px;background:linear-gradient(90deg,#0059ff,#0056ff,#0053ff,#0050ff,#004dff,#004aff,#0046ff,#0043ff,#0040ff,#003dff,#0039ff,#0036ff,#0033ff,#002fff,#002cff,#0028ff,#0024ff,#0721ff,#161dff,#2419ff,#3115ff,#3e11ff,#4b0cff,#5808ff,#6403ff,#7100ff,#7e00ff,#8a00ff,#9700ff,#a300ff,#b000ff,#bc00ff,#c900ff,#d500ff,#e200ff,#ee00ff,#fb00ff,#ff00f7,#ff00eb,#ff00e1,#ff00d7,#ff00cf,#ff00c7,#ff00bf,#ff00b8,#ff00b1,#ff00ab,#ff00a5,#ff00a0,#ff009b,#ff0096,#ff0092,#ff008d,#ff0089,#ff0085,#ff0082,#ff007e,#ff007b,#ff0077,#ff0074,#ff0072)"></i><i style="top:252px;background:linear-gradient(90deg,#0057ff,#0054ff,#0051ff,#004eff,#004bff,#0048ff,#0045ff,#0041ff,#003eff,#003bff,#0038ff,#0034ff,#0031ff,#002dff,#002aff,#0026ff,#0023ff,#061fff,#151bff,#2217ff,#3013ff,#3d0fff,#490bff,#5606ff,#6301ff,#6f00ff,#7b00ff,#8800ff,#9400ff,#a000ff,#ad00ff,#b900ff,#c500ff,#d200ff,#de00ff,#ea00ff,#f700ff,#ff00fb,#ff00ef,#ff00e5,#ff00db,#ff00d2,#ff00ca,#ff00c2,#ff00bb,#ff00b4,#ff00ae,#ff00a8,#ff00a2,#ff009d,#ff0098,#ff0094,#ff008f,#ff008b,#ff0087,#ff0084,#ff0080,#ff007d,#ff0079,#ff0076,#ff0073)"></i><i style="top:255px;background:linear-gradient(90deg,#0055ff,#0052ff,#004fff,#004cff,#0049ff,#0046ff,#0043ff,#0040ff,#003cff,#0039ff,#0036ff,#0033ff,#002fff,#002cff,#0028ff,#0025ff,#0021ff,#051dff,#141aff,#2116ff,#2e12ff,#3b0eff,#4809ff,#5405ff,#6100ff,#6d00ff,#7900ff,#8500ff,#9200ff,#9e00ff,#aa00ff,#b600ff,#c200ff,#ce00ff,#db00ff,#e700ff,#f300ff,#ff00ff,#ff00f3,#ff00e8,#ff00de,#ff00d5,#ff00cd,#ff00c5,#ff00be,#ff00b7,#ff00b1,#ff00ab,#ff00a5,#ff00a0,#ff009b,#ff0096,#ff0092,#ff008d,#ff0089,#ff0086,#ff0082,#ff007f,#ff007b,#ff0078,#ff0075)"></i><i style="top:258px;background:linear-gradient(90deg,#0053ff,#0050ff,#004dff,#004aff,#0047ff,#0044ff,#0041ff,#003eff,#003bff,#0037ff,#0034ff,#0031ff,#002eff,#002aff,#0027ff,#0023ff,#0020ff,#041cff,#1318ff,#2014ff,#2d10ff,#3a0cff,#4608ff,#5303ff,#5f00ff,#6b00ff,#7700ff,#8300ff,#8f00ff,#9b00ff,#a700ff,#b300ff,#bf00ff,#cb00ff,#d700ff,#e300ff,#ef00ff,#fc00ff,#ff00f7,#ff00ec,#ff00e2,#ff00d8,#ff00d0,#ff00c8,#ff00c0,#ff00ba,#ff00b3,#ff00ad,#ff00a7,#ff00a2,#ff009d,#ff0098,#ff0094,#ff0090,#ff008c,#ff0088,#ff0084,#ff0081,#ff007d,#ff007a,#ff0077)"></i><i style="top:261px;background:linear-gradient(90deg,#0051ff,#004eff,#004bff,#0048ff,#0045ff,#0042ff,#003fff,#003cff,#0039ff,#0036ff,#0033ff,#002fff,#002cff,#0029ff,#0025ff,#0022ff,#001eff,#031aff,#1217ff,#1f13ff,#2c0fff,#390bff,#4507ff,#5102ff,#5d00ff,#6900ff,#7500ff,#8100ff,#8d00ff,#9900ff,#a500ff,#b000ff,#bc00ff,#c800ff,#d400ff,#e000ff,#ec00ff,#f800ff,#ff00fa,#ff00ef,#ff00e5,#ff00dc,#ff00d3,#ff00cb,#ff00c3,#ff00bc,#ff00b6,#ff00b0,#ff00aa,#ff00a5,#ff009f,#ff009b,#ff0096,#ff0092,#ff008e,#ff008a,#ff0086,#ff0082,#ff007f,#ff007c,#ff0079)"></i><i style="top:264px;background:linear-gradient(90deg,#004fff,#004cff,#0049ff,#0046ff,#0044ff,#0041ff,#003dff,#003aff,#0037ff,#0034ff,#0031ff,#002eff,#002aff,#0027ff,#0024ff,#0020ff,#001dff,#0219ff,#1115ff,#1e11ff,#2b0eff,#3709ff,#4405ff,#5000ff,#5b00ff,#6700ff,#7300ff,#7f00ff,#8b00ff,#9600ff,#a200ff,#ae00ff,#b900ff,#c500ff,#d100ff,#dd00ff,#e800ff,#f400ff,#ff00fe,#ff00f3,#ff00e8,#ff00df,#ff00d6,#ff00ce,#ff00c6,#ff00bf,#ff00b9,#ff00b2,#ff00ac,#ff00a7,#ff00a2,#ff009d,#ff0098,#ff0094,#ff0090,#ff008c,#ff0088,#ff0084,#ff0081,#ff007e,#ff007b)"></i><i style="top:267px;background:linear-gradient(90deg,#004dff,#004bff,#0048ff,#0045ff,#0042ff,#003fff,#003cff,#0039ff,#0036ff,#0033ff,#002fff,#002cff,#0029ff,#0026ff,#0022ff,#001fff,#001bff,#0118ff,#1014ff,#1d10ff,#2a0cff,#3608ff,#4204ff,#4e00ff,#5a00ff,#6600ff,#7100ff,#7d00ff,#8800ff,#9400ff,#9f00ff,#ab00ff,#b700ff,#c200ff,#ce00ff,#d900ff,#e500ff,#f100ff,#fc00ff,#ff00f6,#ff00ec,#ff00e2,#ff00d9,#ff00d1,#ff00c9,#ff00c2,#ff00bb,#ff00b5,#ff00af,#ff00a9,#ff00a4,#ff009f,#ff009b,#ff0096,#ff0092,#ff008e,#ff008a,#ff0086,#ff0083,#ff0080,#ff007c)"></i><i style="top:270px;background:linear-gradient(90deg,#004cff,#0049ff,#0046ff,#0043ff,#0040ff,#003dff,#003aff,#0037ff,#0034ff,#0031ff,#002eff,#002bff,#0027ff,#0024ff,#0021ff,#001dff,#001aff,#0016ff,#0f12ff,#1c0fff,#290bff,#3507ff,#4102ff,#4d00ff,#5800ff,#6400ff,#6f00ff,#7b00ff,#8600ff,#9200ff,#9d00ff,#a800ff,#b400ff,#bf00ff,#cb00ff,#d600ff,#e200ff,#ed00ff,#f900ff,#ff00fa,#ff00ef,#ff00e5,#ff00dc,#ff00d4,#ff00cc,#ff00c5,#ff00be,#ff00b8,#ff00b2,#ff00ac,#ff00a7,#ff00a2,#ff009d,#ff0098,#ff0094,#ff0090,#ff008c,#ff0088,#ff0085,#ff0081,#ff007e)"></i><i style="top:273px;background:linear-gradient(90deg,#004aff,#0047ff,#0044ff,#0041ff,#003fff,#003cff,#0039ff,#0036ff,#0033ff,#002fff,#002cff,#0029ff,#0026ff,#0023ff,#001fff,#001cff,#0018ff,#0015ff,#0e11ff,#1b0dff,#2809ff,#3405ff,#3f00ff,#4b00ff,#5700ff,#6200ff,#6d00ff,#7900ff,#8400ff,#8f00ff,#9b00ff,#a600ff,#b100ff,#bc00ff,#c800ff,#d300ff,#de00ff,#ea00ff,#f500ff,#ff00fd,#ff00f3,#ff00e9,#ff00df,#ff00d7,#ff00cf,#ff00c8,#ff00c1,#ff00ba,#ff00b4,#ff00ae,#ff00a9,#ff00a4,#ff009f,#ff009a,#ff0096,#ff0092,#ff008e,#ff008a,#ff0087,#ff0083,#ff0080)"></i><i style="top:276px;background:linear-gradient(90deg,#0048ff,#0045ff,#0043ff,#0040ff,#003dff,#003aff,#0037ff,#0034ff,#0031ff,#002eff,#002bff,#0028ff,#0024ff,#0021ff,#001eff,#001aff,#0017ff,#0013ff,#0e10ff,#1a0cff,#2708ff,#3204ff,#3e00ff,#4a00ff,#5500ff,#6000ff,#6c00ff,#7700ff,#8200ff,#8d00ff,#9800ff,#a300ff,#af00ff,#ba00ff,#c500ff,#d000ff,#db00ff,#e600ff,#f200ff,#fd00ff,#ff00f6,#ff00ec,#ff00e3,#ff00da,#ff00d2,#ff00ca,#ff00c3,#ff00bd,#ff00b7,#ff00b1,#ff00ab,#ff00a6,#ff00a1,#ff009d,#ff0098,#ff0094,#ff0090,#ff008c,#ff0089,#ff0085,#ff0082)"></i><i style="top:279px;background:linear-gradient(90deg,#0047ff,#0044ff,#0041ff,#003eff,#003bff,#0038ff,#0035ff,#0033ff,#0030ff,#002cff,#0029ff,#0026ff,#0023ff,#0020ff,#001cff,#0019ff,#0016ff,#0012ff,#0d0eff,#190bff,#2607ff,#3102ff,#3d00ff,#4800ff,#5400ff,#5f00ff,#6a00ff,#7500ff,#8000ff,#8b00ff,#9600ff,#a100ff,#ac00ff,#b700ff,#c200ff,#cd00ff,#d800ff,#e300ff,#ee00ff,#f900ff,#ff00f9,#ff00ef,#ff00e6,#ff00dd,#ff00d5,#ff00cd,#ff00c6,#ff00bf,#ff00b9,#ff00b3,#ff00ae,#ff00a8,#ff00a3,#ff009f,#ff009a,#ff0096,#ff0092,#ff008e,#ff008b,#ff0087,#ff0084)"></i><i style="top:282px;background:linear-gradient(90deg,#0045ff,#0042ff,#003fff,#003dff,#003aff,#0037ff,#0034ff,#0031ff,#002eff,#002bff,#0028ff,#0025ff,#0022ff,#001eff,#001bff,#0018ff,#0014ff,#0011ff,#0c0dff,#1909ff,#2505ff,#3001ff,#3c00ff,#4700ff,#5200ff,#5d00ff,#6800ff,#7300ff,#7e00ff,#8900ff,#9400ff,#9f00ff,#aa00ff,#b400ff,#bf00ff,#ca00ff,#d500ff,#e000ff,#eb00ff,#f600ff,#ff00fd,#ff00f3,#ff00e9,#ff00e0,#ff00d8,#ff00d0,#ff00c9,#ff00c2,#ff00bc,#ff00b6,#ff00b0,#ff00ab,#ff00a6,#ff00a1,#ff009c,#ff0098,#ff0094,#ff0090,#ff008c,#ff0089,#ff0086)"></i><i style="top:285px;background:linear-gradient(90deg,#0043ff,#0041ff,#003eff,#003bff,#0038ff,#0035ff,#0033ff,#0030ff,#002dff,#002aff,#0027ff,#0023ff,#0020ff,#001dff,#001aff,#0016ff,#0013ff,#000fff,#0b0cff,#1808ff,#2404ff,#2f00ff,#3a00ff,#4600ff,#5100ff,#5c00ff,#6700ff,#7100ff,#7c00ff,#8700ff,#9200ff,#9c00ff,#a700ff,#b200ff,#bd00ff,#c700ff,#d200ff,#dd00ff,#e800ff,#f300ff,#fe00ff,#ff00f6,#ff00ec,#ff00e3,#ff00db,#ff00d3,#ff00cb,#ff00c5,#ff00be,#ff00b8,#ff00b2,#ff00ad,#ff00a8,#ff00a3,#ff009f,#ff009a,#ff0096,#ff0092,#ff008e,#ff008b,#ff0087)"></i><i style="top:288px;background:linear-gradient(90deg,#0042ff,#003fff,#003cff,#003aff,#0037ff,#0034ff,#0031ff,#002eff,#002bff,#0028ff,#0025ff,#0022ff,#001fff,#001cff,#0018ff,#0015ff,#0012ff,#000eff,#0a0bff,#1707ff,#2303ff,#2e00ff,#3900ff,#4400ff,#4f00ff,#5a00ff,#6500ff,#7000ff,#7a00ff,#8500ff,#9000ff,#9a00ff,#a500ff,#af00ff,#ba00ff,#c500ff,#cf00ff,#da00ff,#e500ff,#ef00ff,#fa00ff,#ff00f9,#ff00ef,#ff00e6,#ff00de,#ff00d6,#ff00ce,#ff00c7,#ff00c1,#ff00bb,#ff00b5,#ff00af,#ff00aa,#ff00a5,#ff00a1,#ff009c,#ff0098,#ff0094,#ff0090,#ff008d,#ff0089)"></i><i style="top:291px;background:linear-gradient(90deg,#0040ff,#003eff,#003bff,#0038ff,#0035ff,#0033ff,#0030ff,#002dff,#002aff,#0027ff,#0024ff,#0021ff,#001eff,#001aff,#0017ff,#0014ff,#0010ff,#000dff,#0a09ff,#1605ff,#2201ff,#2d00ff,#3800ff,#4300ff,#4e00ff,#5900ff,#6300ff,#6e00ff,#7800ff,#8300ff,#8e00ff,#9800ff,#a300ff,#ad00ff,#b800ff,#c200ff,#cd00ff,#d700ff,#e200ff,#ec00ff,#f700ff,#ff00fc,#ff00f2,#ff00e9,#ff00e0,#ff00d8,#ff00d1,#ff00ca,#ff00c3,#ff00bd,#ff00b7,#ff00b2,#ff00ac,#ff00a7,#ff00a3,#ff009e,#ff009a,#ff0096,#ff0092,#ff008f,#ff008b)"></i><i style="top:294px;background:linear-gradient(90deg,#003fff,#003cff,#0039ff,#0037ff,#0034ff,#0031ff,#002eff,#002bff,#0028ff,#0026ff,#0023ff,#001fff,#001cff,#0019ff,#0016ff,#0013ff,#000fff,#000cff,#0908ff,#1504ff,#2100ff,#2c00ff,#3700ff,#4200ff,#4d00ff,#5700ff,#6200ff,#6c00ff,#7700ff,#8100ff,#8b00ff,#9600ff,#a000ff,#ab00ff,#b500ff,#bf00ff,#ca00ff,#d400ff,#df00ff,#e900ff,#f400ff,#fe00ff,#ff00f6,#ff00ec,#ff00e3,#ff00db,#ff00d4,#ff00cc,#ff00c6,#ff00c0,#ff00ba,#ff00b4,#ff00af,#ff00aa,#ff00a5,#ff00a0,#ff009c,#ff0098,#ff0094,#ff0090,#ff008d)"></i><i style="top:297px;background:linear-gradient(90deg,#003dff,#003bff,#0038ff,#0035ff,#0033ff,#0030ff,#002dff,#002aff,#0027ff,#0024ff,#0021ff,#001eff,#001bff,#0018ff,#0015ff,#0011ff,#000eff,#000aff,#0807ff,#1403ff,#2000ff,#2b00ff,#3600ff,#4100ff,#4b00ff,#5600ff,#6000ff,#6b00ff,#7500ff,#7f00ff,#8a00ff,#9400ff,#9e00ff,#a800ff,#b300ff,#bd00ff,#c700ff,#d100ff,#dc00ff,#e600ff,#f100ff,#fb00ff,#ff00f9,#ff00ef,#ff00e6,#ff00de,#ff00d6,#ff00cf,#ff00c8,#ff00c2,#ff00bc,#ff00b6,#ff00b1,#ff00ac,#ff00a7,#ff00a3,#ff009e,#ff009a,#ff0096,#ff0092,#ff008f)"></i><i style="top:300px;background:linear-gradient(90deg,#003cff,#0039ff,#0037ff,#0034ff,#0031ff,#002eff,#002cff,#0029ff,#0026ff,#0023ff,#0020ff,#001dff,#001aff,#0017ff,#0013ff,#0010ff,#000dff,#0009ff,#0706ff,#1401ff,#1f00ff,#2a00ff,#3500ff,#3f00ff,#4a00ff,#5400ff,#5f00ff,#6900ff,#7300ff,#7d00ff,#8800ff,#9200ff,#9c00ff,#a600ff,#b000ff,#ba00ff,#c500ff,#cf00ff,#d900ff,#e300ff,#ed00ff,#f800ff,#ff00fc,#ff00f2,#ff00e9,#ff00e1,#ff00d9,#ff00d2,#ff00cb,#ff00c4,#ff00be,#ff00b9,#ff00b3,#ff00ae,#ff00a9,#ff00a5,#ff00a0,#ff009c,#ff0098,#ff0094,#ff0091)"></i><i style="top:303px;background:linear-gradient(90deg,#003aff,#0038ff,#0035ff,#0032ff,#0030ff,#002dff,#002aff,#0027ff,#0025ff,#0022ff,#001fff,#001cff,#0019ff,#0015ff,#0012ff,#000fff,#000cff,#0008ff,#0704ff,#1300ff,#1e00ff,#2900ff,#3400ff,#3e00ff,#4900ff,#5300ff,#5d00ff,#6700ff,#7200ff,#7c00ff,#8600ff,#9000ff,#9a00ff,#a400ff,#ae00ff,#b800ff,#c200ff,#cc00ff,#d600ff,#e000ff,#ea00ff,#f500ff,#ff00ff,#ff00f5,#ff00ec,#ff00e4,#ff00dc,#ff00d4,#ff00cd,#ff00c7,#ff00c1,#ff00bb,#ff00b5,#ff00b0,#ff00ab,#ff00a7,#ff00a2,#ff009e,#ff009a,#ff0096,#ff0092)"></i><i style="top:306px;background:linear-gradient(90deg,#0039ff,#0036ff,#0034ff,#0031ff,#002eff,#002cff,#0029ff,#0026ff,#0023ff,#0020ff,#001dff,#001aff,#0017ff,#0014ff,#0011ff,#000eff,#000aff,#0007ff,#0603ff,#1200ff,#1d00ff,#2800ff,#3300ff,#3d00ff,#4700ff,#5200ff,#5c00ff,#6600ff,#7000ff,#7a00ff,#8400ff,#8e00ff,#9800ff,#a200ff,#ac00ff,#b600ff,#c000ff,#c900ff,#d300ff,#dd00ff,#e700ff,#f200ff,#fc00ff,#ff00f9,#ff00ef,#ff00e7,#ff00df,#ff00d7,#ff00d0,#ff00c9,#ff00c3,#ff00bd,#ff00b8,#ff00b2,#ff00ad,#ff00a9,#ff00a4,#ff00a0,#ff009c,#ff0098,#ff0094)"></i><i style="top:309px;background:linear-gradient(90deg,#0038ff,#0035ff,#0032ff,#0030ff,#002dff,#002aff,#0028ff,#0025ff,#0022ff,#001fff,#001cff,#0019ff,#0016ff,#0013ff,#0010ff,#000dff,#0009ff,#0006ff,#0502ff,#1100ff,#1c00ff,#2700ff,#3200ff,#3c00ff,#4600ff,#5000ff,#5a00ff,#6400ff,#6e00ff,#7800ff,#8200ff,#8c00ff,#9600ff,#a000ff,#a900ff,#b300ff,#bd00ff,#c700ff,#d100ff,#db00ff,#e500ff,#ef00ff,#f800ff,#ff00fc,#ff00f2,#ff00ea,#ff00e1,#ff00da,#ff00d3,#ff00cc,#ff00c6,#ff00c0,#ff00ba,#ff00b5,#ff00b0,#ff00ab,#ff00a6,#ff00a2,#ff009e,#ff009a,#ff0096)"></i><i style="top:312px;background:linear-gradient(90deg,#0036ff,#0034ff,#0031ff,#002fff,#002cff,#0029ff,#0026ff,#0024ff,#0021ff,#001eff,#001bff,#0018ff,#0015ff,#0012ff,#000fff,#000bff,#0008ff,#0004ff,#0400ff,#1000ff,#1c00ff,#2600ff,#3100ff,#3b00ff,#4500ff,#4f00ff,#5900ff,#6300ff,#6d00ff,#7600ff,#8000ff,#8a00ff,#9400ff,#9d00ff,#a700ff,#b100ff,#bb00ff,#c400ff,#ce00ff,#d800ff,#e200ff,#ec00ff,#f500ff,#ff00ff,#ff00f5,#ff00ec,#ff00e4,#ff00dc,#ff00d5,#ff00ce,#ff00c8,#ff00c2,#ff00bc,#ff00b7,#ff00b2,#ff00ad,#ff00a8,#ff00a4,#ff00a0,#ff009c,#ff0098)"></i><i style="top:315px;background:linear-gradient(90deg,#0035ff,#0032ff,#0030ff,#002dff,#002bff,#0028ff,#0025ff,#0022ff,#0020ff,#001dff,#001aff,#0017ff,#0014ff,#0011ff,#000eff,#000aff,#0007ff,#0003ff,#0400ff,#1000ff,#1b00ff,#2500ff,#3000ff,#3a00ff,#4400ff,#4e00ff,#5800ff,#6100ff,#6b00ff,#7500ff,#7f00ff,#8800ff,#9200ff,#9b00ff,#a500ff,#af00ff,#b800ff,#c200ff,#cc00ff,#d500ff,#df00ff,#e900ff,#f200ff,#fc00ff,#ff00f8,#ff00ef,#ff00e7,#ff00df,#ff00d8,#ff00d1,#ff00ca,#ff00c4,#ff00bf,#ff00b9,#ff00b4,#ff00af,#ff00aa,#ff00a6,#ff00a2,#ff009e,#ff009a)"></i><i style="top:318px;background:linear-gradient(90deg,#0034ff,#0031ff,#002fff,#002cff,#0029ff,#0027ff,#0024ff,#0021ff,#001eff,#001cff,#0019ff,#0016ff,#0013ff,#0010ff,#000cff,#0009ff,#0006ff,#0002ff,#0300ff,#0f00ff,#1a00ff,#2400ff,#2f00ff,#3900ff,#4300ff,#4d00ff,#5600ff,#6000ff,#6a00ff,#7300ff,#7d00ff,#8600ff,#9000ff,#9900ff,#a300ff,#ad00ff,#b600ff,#c000ff,#c900ff,#d300ff,#dc00ff,#e600ff,#f000ff,#f900ff,#ff00fb,#ff00f2,#ff00ea,#ff00e2,#ff00da,#ff00d3,#ff00cd,#ff00c7,#ff00c1,#ff00bb,#ff00b6,#ff00b1,#ff00ac,#ff00a8,#ff00a4,#ff00a0,#ff009c)"></i><i style="top:321px;background:linear-gradient(90deg,#0032ff,#0030ff,#002dff,#002bff,#0028ff,#0025ff,#0023ff,#0020ff,#001dff,#001aff,#0018ff,#0015ff,#0012ff,#000fff,#000bff,#0008ff,#0005ff,#0001ff,#0200ff,#0e00ff,#1900ff,#2400ff,#2e00ff,#3800ff,#4200ff,#4b00ff,#5500ff,#5f00ff,#6800ff,#7200ff,#7b00ff,#8500ff,#8e00ff,#9700ff,#a100ff,#aa00ff,#b400ff,#bd00ff,#c700ff,#d000ff,#da00ff,#e300ff,#ed00ff,#f600ff,#ff00fe,#ff00f5,#ff00ed,#ff00e5,#ff00dd,#ff00d6,#ff00cf,#ff00c9,#ff00c3,#ff00be,#ff00b8,#ff00b3,#ff00ae,#ff00aa,#ff00a6,#ff00a1,#ff009d)"></i><i style="top:324px;background:linear-gradient(90deg,#0031ff,#002fff,#002cff,#002aff,#0027ff,#0024ff,#0022ff,#001fff,#001cff,#0019ff,#0016ff,#0014ff,#0011ff,#000dff,#000aff,#0007ff,#0003ff,#0000ff,#0200ff,#0e00ff,#1800ff,#2300ff,#2d00ff,#3700ff,#4000ff,#4a00ff,#5400ff,#5d00ff,#6700ff,#7000ff,#7900ff,#8300ff,#8c00ff,#9600ff,#9f00ff,#a800ff,#b200ff,#bb00ff,#c400ff,#ce00ff,#d700ff,#e000ff,#ea00ff,#f300ff,#fd00ff,#ff00f8,#ff00ef,#ff00e7,#ff00e0,#ff00d8,#ff00d2,#ff00cb,#ff00c5,#ff00c0,#ff00ba,#ff00b5,#ff00b1,#ff00ac,#ff00a8,#ff00a3,#ff009f)"></i><i style="top:327px;background:linear-gradient(90deg,#0030ff,#002dff,#002bff,#0028ff,#0026ff,#0023ff,#0020ff,#001eff,#001bff,#0018ff,#0015ff,#0012ff,#000fff,#000cff,#0009ff,#0006ff,#0002ff,#0000ff,#0100ff,#0d00ff,#1800ff,#2200ff,#2c00ff,#3600ff,#3f00ff,#4900ff,#5200ff,#5c00ff,#6500ff,#6f00ff,#7800ff,#8100ff,#8a00ff,#9400ff,#9d00ff,#a600ff,#af00ff,#b900ff,#c200ff,#cb00ff,#d400ff,#de00ff,#e700ff,#f000ff,#fa00ff,#ff00fb,#ff00f2,#ff00ea,#ff00e2,#ff00db,#ff00d4,#ff00ce,#ff00c8,#ff00c2,#ff00bd,#ff00b7,#ff00b3,#ff00ae,#ff00a9,#ff00a5,#ff00a1)"></i><i style="top:330px;background:linear-gradient(90deg,#002fff,#002cff,#002aff,#0027ff,#0025ff,#0022ff,#001fff,#001dff,#001aff,#0017ff,#0014ff,#0011ff,#000eff,#000bff,#0008ff,#0005ff,#0001ff,#0000ff,#0000ff,#0c00ff,#1700ff,#2100ff,#2b00ff,#3500ff,#3e00ff,#4800ff,#5100ff,#5b00ff,#6400ff,#6d00ff,#7600ff,#8000ff,#8900ff,#9200ff,#9b00ff,#a400ff,#ad00ff,#b600ff,#c000ff,#c900ff,#d200ff,#db00ff,#e400ff,#ee00ff,#f700ff,#ff00fe,#ff00f5,#ff00ed,#ff00e5,#ff00de,#ff00d7,#ff00d0,#ff00ca,#ff00c4,#ff00bf,#ff00ba,#ff00b5,#ff00b0,#ff00ab,#ff00a7,#ff00a3)"></i><i style="top:333px;background:linear-gradient(90deg,#002eff,#002bff,#0029ff,#0026ff,#0023ff,#0021ff,#001eff,#001cff,#0019ff,#0016ff,#0013ff,#0010ff,#000dff,#000aff,#0007ff,#0004ff,#0000ff,#0000ff,#0000ff,#0c00ff,#1600ff,#2000ff,#2a00ff,#3400ff,#3d00ff,#4700ff,#5000ff,#5900ff,#6200ff,#6c00ff,#7500ff,#7e00ff,#8700ff,#9000ff,#9900ff,#a200ff,#ab00ff,#b400ff,#bd00ff,#c600ff,#d000ff,#d900ff,#e200ff,#eb00ff,#f400ff,#fd00ff,#ff00f8,#ff00ef,#ff00e7,#ff00e0,#ff00d9,#ff00d3,#ff00cc,#ff00c6,#ff00c1,#ff00bc,#ff00b7,#ff00b2,#ff00ad,#ff00a9,#ff00a5)"></i><i style="top:336px;background:linear-gradient(90deg,#002cff,#002aff,#0027ff,#0025ff,#0022ff,#0020ff,#001dff,#001aff,#0018ff,#0015ff,#0012ff,#000fff,#000cff,#0009ff,#0006ff,#0002ff,#0000ff,#0000ff,#0000ff,#0b00ff,#1500ff,#2000ff,#2900ff,#3300ff,#3c00ff,#4600ff,#4f00ff,#5800ff,#6100ff,#6a00ff,#7300ff,#7c00ff,#8500ff,#8e00ff,#9700ff,#a000ff,#a900ff,#b200ff,#bb00ff,#c400ff,#cd00ff,#d600ff,#df00ff,#e800ff,#f100ff,#fa00ff,#ff00fb,#ff00f2,#ff00ea,#ff00e3,#ff00dc,#ff00d5,#ff00cf,#ff00c9,#ff00c3,#ff00be,#ff00b9,#ff00b4,#ff00af,#ff00ab,#ff00a7)"></i><i style="top:339px;background:linear-gradient(90deg,#002bff,#0029ff,#0026ff,#0024ff,#0021ff,#001fff,#001cff,#0019ff,#0017ff,#0014ff,#0011ff,#000eff,#000bff,#0008ff,#0005ff,#0001ff,#0000ff,#0000ff,#0000ff,#0a00ff,#1500ff,#1f00ff,#2800ff,#3200ff,#3b00ff,#4500ff,#4e00ff,#5700ff,#6000ff,#6900ff,#7200ff,#7b00ff,#8400ff,#8d00ff,#9500ff,#9e00ff,#a700ff,#b000ff,#b900ff,#c200ff,#cb00ff,#d400ff,#dd00ff,#e600ff,#ef00ff,#f800ff,#ff00fd,#ff00f5,#ff00ed,#ff00e5,#ff00de,#ff00d7,#ff00d1,#ff00cb,#ff00c5,#ff00c0,#ff00bb,#ff00b6,#ff00b1,#ff00ad,#ff00a9)"></i><i style="top:342px;background:linear-gradient(90deg,#002aff,#0028ff,#0025ff,#0023ff,#0020ff,#001eff,#001bff,#0018ff,#0016ff,#0013ff,#0010ff,#000dff,#000aff,#0007ff,#0004ff,#0000ff,#0000ff,#0000ff,#0000ff,#0a00ff,#1400ff,#1e00ff,#2800ff,#3100ff,#3a00ff,#4300ff,#4d00ff,#5600ff,#5f00ff,#6700ff,#7000ff,#7900ff,#8200ff,#8b00ff,#9400ff,#9c00ff,#a500ff,#ae00ff,#b700ff,#c000ff,#c900ff,#d100ff,#da00ff,#e300ff,#ec00ff,#f500ff,#fe00ff,#ff00f8,#ff00ef,#ff00e8,#ff00e0,#ff00da,#ff00d3,#ff00cd,#ff00c7,#ff00c2,#ff00bd,#ff00b8,#ff00b3,#ff00af,#ff00ab)"></i><i style="top:345px;background:linear-gradient(90deg,#0029ff,#0027ff,#0024ff,#0022ff,#001fff,#001dff,#001aff,#0017ff,#0015ff,#0012ff,#000fff,#000cff,#0009ff,#0006ff,#0003ff,#0000ff,#0000ff,#0000ff,#0000ff,#0900ff,#1300ff,#1d00ff,#2700ff,#3000ff,#3900ff,#4200ff,#4b00ff,#5400ff,#5d00ff,#6600ff,#6f00ff,#7800ff,#8000ff,#8900ff,#9200ff,#9b00ff,#a300ff,#ac00ff,#b500ff,#be00ff,#c600ff,#cf00ff,#d800ff,#e100ff,#e900ff,#f200ff,#fb00ff,#ff00fa,#ff00f2,#ff00ea,#ff00e3,#ff00dc,#ff00d6,#ff00cf,#ff00ca,#ff00c4,#ff00bf,#ff00ba,#ff00b5,#ff00b1,#ff00ac)"></i><i style="top:348px;background:linear-gradient(90deg,#0028ff,#0025ff,#0023ff,#0021ff,#001eff,#001bff,#0019ff,#0016ff,#0014ff,#0011ff,#000eff,#000bff,#0008ff,#0005ff,#0001ff,#0000ff,#0000ff,#0000ff,#0000ff,#0800ff,#1300ff,#1d00ff,#2600ff,#2f00ff,#3800ff,#4100ff,#4a00ff,#5300ff,#5c00ff,#6500ff,#6d00ff,#7600ff,#7f00ff,#8800ff,#9000ff,#9900ff,#a100ff,#aa00ff,#b300ff,#bb00ff,#c400ff,#cd00ff,#d500ff,#de00ff,#e700ff,#f000ff,#f800ff,#ff00fd,#ff00f5,#ff00ed,#ff00e5,#ff00de,#ff00d8,#ff00d2,#ff00cc,#ff00c6,#ff00c1,#ff00bc,#ff00b7,#ff00b3,#ff00ae)"></i><i style="top:351px;background:linear-gradient(90deg,#0027ff,#0024ff,#0022ff,#001fff,#001dff,#001aff,#0018ff,#0015ff,#0013ff,#0010ff,#000dff,#000aff,#0007ff,#0004ff,#0000ff,#0000ff,#0000ff,#0000ff,#0000ff,#0800ff,#1200ff,#1c00ff,#2500ff,#2e00ff,#3700ff,#4000ff,#4900ff,#5200ff,#5b00ff,#6300ff,#6c00ff,#7500ff,#7d00ff,#8600ff,#8e00ff,#9700ff,#a000ff,#a800ff,#b100ff,#b900ff,#c200ff,#ca00ff,#d300ff,#dc00ff,#e400ff,#ed00ff,#f600ff,#fe00ff,#ff00f7,#ff00ef,#ff00e8,#ff00e1,#ff00da,#ff00d4,#ff00ce,#ff00c8,#ff00c3,#ff00be,#ff00b9,#ff00b5,#ff00b0)"></i><i style="top:354px;background:linear-gradient(90deg,#0026ff,#0023ff,#0021ff,#001eff,#001cff,#0019ff,#0017ff,#0014ff,#0012ff,#000fff,#000cff,#0009ff,#0006ff,#0003ff,#0000ff,#0000ff,#0000ff,#0000ff,#0000ff,#0700ff,#1100ff,#1b00ff,#2400ff,#2e00ff,#3700ff,#3f00ff,#4800ff,#5100ff,#5a00ff,#6200ff,#6b00ff,#7300ff,#7c00ff,#8400ff,#8d00ff,#9500ff,#9e00ff,#a600ff,#af00ff,#b700ff,#c000ff,#c800ff,#d100ff,#d900ff,#e200ff,#ea00ff,#f300ff,#fc00ff,#ff00fa,#ff00f2,#ff00ea,#ff00e3,#ff00dd,#ff00d6,#ff00d0,#ff00cb,#ff00c5,#ff00c0,#ff00bb,#ff00b6,#ff00b2)"></i><i style="top:357px;background:linear-gradient(90deg,#0025ff,#0022ff,#0020ff,#001dff,#001bff,#0018ff,#0016ff,#0013ff,#0011ff,#000eff,#000bff,#0008ff,#0005ff,#0002ff,#0000ff,#0000ff,#0000ff,#0000ff,#0000ff,#0700ff,#1100ff,#1a00ff,#2400ff,#2d00ff,#3600ff,#3e00ff,#4700ff,#5000ff,#5800ff,#6100ff,#6900ff,#7200ff,#7a00ff,#8300ff,#8b00ff,#9400ff,#9c00ff,#a400ff,#ad00ff,#b500ff,#be00ff,#c600ff,#cf00ff,#d700ff,#df00ff,#e800ff,#f000ff,#f900ff,#ff00fd,#ff00f5,#ff00ed,#ff00e6,#ff00df,#ff00d9,#ff00d2,#ff00cd,#ff00c7,#ff00c2,#ff00bd,#ff00b8,#ff00b4)"></i><i style="top:360px;background:linear-gradient(90deg,#0024ff,#0021ff,#001fff,#001cff,#001aff,#0017ff,#0015ff,#0012ff,#0010ff,#000dff,#000aff,#0007ff,#0004ff,#0001ff,#0000ff,#0000ff,#0000ff,#0000ff,#0000ff,#0600ff,#1000ff,#1a00ff,#2300ff,#2c00ff,#3500ff,#3d00ff,#4600ff,#4f00ff,#5700ff,#6000ff,#6800ff,#7000ff,#7900ff,#8100ff,#8a00ff,#9200ff,#9a00ff,#a300ff,#ab00ff,#b300ff,#bc00ff,#c400ff,#cc00ff,#d500ff,#dd00ff,#e500ff,#ee00ff,#f600ff,#ff00ff,#ff00f7,#ff00ef,#ff00e8,#ff00e1,#ff00db,#ff00d5,#ff00cf,#ff00c9,#ff00c4,#ff00bf,#ff00ba,#ff00b6)"></i><i style="top:363px;background:linear-gradient(90deg,#0023ff,#0020ff,#001eff,#001bff,#0019ff,#0016ff,#0014ff,#0011ff,#000fff,#000cff,#0009ff,#0006ff,#0003ff,#0000ff,#0000ff,#0000ff,#0000ff,#0000ff,#0000ff,#0500ff,#1000ff,#1900ff,#2200ff,#2b00ff,#3400ff,#3d00ff,#4500ff,#4e00ff,#5600ff,#5e00ff,#6700ff,#6f00ff,#7700ff,#8000ff,#8800ff,#9000ff,#9900ff,#a100ff,#a900ff,#b100ff,#ba00ff,#c200ff,#ca00ff,#d200ff,#db00ff,#e300ff,#eb00ff,#f400ff,#fc00ff,#ff00fa,#ff00f2,#ff00eb,#ff00e4,#ff00dd,#ff00d7,#ff00d1,#ff00cb,#ff00c6,#ff00c1,#ff00bc,#ff00b8)"></i><i style="top:366px;background:linear-gradient(90deg,#0022ff,#001fff,#001dff,#001aff,#0018ff,#0015ff,#0013ff,#0010ff,#000eff,#000bff,#0008ff,#0005ff,#0002ff,#0000ff,#0000ff,#0000ff,#0000ff,#0000ff,#0000ff,#0500ff,#0f00ff,#1800ff,#2100ff,#2a00ff,#3300ff,#3c00ff,#4400ff,#4d00ff,#5500ff,#5d00ff,#6600ff,#6e00ff,#7600ff,#7e00ff,#8600ff,#8f00ff,#9700ff,#9f00ff,#a700ff,#af00ff,#b800ff,#c000ff,#c800ff,#d000ff,#d800ff,#e100ff,#e900ff,#f100ff,#f900ff,#ff00fc,#ff00f4,#ff00ed,#ff00e6,#ff00df,#ff00d9,#ff00d3,#ff00ce,#ff00c8,#ff00c3,#ff00be,#ff00ba)"></i><i style="top:369px;background:linear-gradient(90deg,#0021ff,#001eff,#001cff,#0019ff,#0017ff,#0015ff,#0012ff,#000fff,#000dff,#000aff,#0007ff,#0004ff,#0001ff,#0000ff,#0000ff,#0000ff,#0000ff,#0000ff,#0000ff,#0400ff,#0e00ff,#1800ff,#2100ff,#2a00ff,#3200ff,#3b00ff,#4300ff,#4b00ff,#5400ff,#5c00ff,#6400ff,#6c00ff,#7500ff,#7d00ff,#8500ff,#8d00ff,#9500ff,#9d00ff,#a500ff,#ae00ff,#b600ff,#be00ff,#c600ff,#ce00ff,#d600ff,#de00ff,#e700ff,#ef00ff,#f700ff,#ff00ff,#ff00f7,#ff00ef,#ff00e8,#ff00e2,#ff00db,#ff00d5,#ff00d0,#ff00ca,#ff00c5,#ff00c0,#ff00bb)"></i><i style="top:372px;background:linear-gradient(90deg,#0020ff,#001dff,#001bff,#0019ff,#0016ff,#0014ff,#0011ff,#000eff,#000cff,#0009ff,#0006ff,#0003ff,#0000ff,#0000ff,#0000ff,#0000ff,#0000ff,#0000ff,#0000ff,#0400ff,#0e00ff,#1700ff,#2000ff,#2900ff,#3100ff,#3a00ff,#4200ff,#4a00ff,#5300ff,#5b00ff,#6300ff,#6b00ff,#7300ff,#7b00ff,#8300ff,#8c00ff,#9400ff,#9c00ff,#a400ff,#ac00ff,#b400ff,#bc00ff,#c400ff,#cc00ff,#d400ff,#dc00ff,#e400ff,#ec00ff,#f400ff,#fd00ff,#ff00f9,#ff00f2,#ff00eb,#ff00e4,#ff00de,#ff00d7,#ff00d2,#ff00cc,#ff00c7,#ff00c2,#ff00bd)"></i><i style="top:375px;background:linear-gradient(90deg,#001fff,#001cff,#001aff,#0018ff,#0015ff,#0013ff,#0010ff,#000eff,#000bff,#0008ff,#0005ff,#0002ff,#0000ff,#0000ff,#0000ff,#0000ff,#0000ff,#0000ff,#0000ff,#0300ff,#0d00ff,#1600ff,#1f00ff,#2800ff,#3100ff,#3900ff,#4100ff,#4900ff,#5200ff,#5a00ff,#6200ff,#6a00ff,#7200ff,#7a00ff,#8200ff,#8a00ff,#9200ff,#9a00ff,#a200ff,#aa00ff,#b200ff,#ba00ff,#c200ff,#ca00ff,#d200ff,#da00ff,#e200ff,#ea00ff,#f200ff,#fa00ff,#ff00fc,#ff00f4,#ff00ed,#ff00e6,#ff00e0,#ff00da,#ff00d4,#ff00ce,#ff00c9,#ff00c4,#ff00bf)"></i><i style="top:378px;background:linear-gradient(90deg,#001eff,#001bff,#0019ff,#0017ff,#0014ff,#0012ff,#000fff,#000dff,#000aff,#0007ff,#0004ff,#0001ff,#0000ff,#0000ff,#0000ff,#0000ff,#0000ff,#0000ff,#0000ff,#0200ff,#0d00ff,#1600ff,#1f00ff,#2700ff,#3000ff,#3800ff,#4000ff,#4800ff,#5100ff,#5900ff,#6100ff,#6900ff,#7100ff,#7900ff,#8100ff,#8800ff,#9000ff,#9800ff,#a000ff,#a800ff,#b000ff,#b800ff,#c000ff,#c800ff,#d000ff,#d800ff,#e000ff,#e800ff,#f000ff,#f800ff,#ff00fe,#ff00f7,#ff00ef,#ff00e9,#ff00e2,#ff00dc,#ff00d6,#ff00d0,#ff00cb,#ff00c6,#ff00c1)"></i><i style="top:381px;background:linear-gradient(90deg,#001dff,#001aff,#0018ff,#0016ff,#0013ff,#0011ff,#000eff,#000cff,#0009ff,#0006ff,#0003ff,#0000ff,#0000ff,#0000ff,#0000ff,#0000ff,#0000ff,#0000ff,#0000ff,#0200ff,#0c00ff,#1500ff,#1e00ff,#2700ff,#2f00ff,#3700ff,#3f00ff,#4700ff,#5000ff,#5800ff,#6000ff,#6700ff,#6f00ff,#7700ff,#7f00ff,#8700ff,#8f00ff,#9700ff,#9f00ff,#a600ff,#ae00ff,#b600ff,#be00ff,#c600ff,#ce00ff,#d500ff,#dd00ff,#e500ff,#ed00ff,#f500ff,#fd00ff,#ff00f9,#ff00f2,#ff00eb,#ff00e4,#ff00de,#ff00d8,#ff00d2,#ff00cd,#ff00c8,#ff00c3)"></i><i style="top:384px;background:linear-gradient(90deg,#001cff,#001aff,#0017ff,#0015ff,#0012ff,#0010ff,#000dff,#000bff,#0008ff,#0005ff,#0002ff,#0000ff,#0000ff,#0000ff,#0000ff,#0000ff,#0000ff,#0000ff,#0000ff,#0100ff,#0b00ff,#1500ff,#1d00ff,#2600ff,#2e00ff,#3600ff,#3e00ff,#4700ff,#4f00ff,#5600ff,#5e00ff,#6600ff,#6e00ff,#7600ff,#7e00ff,#8600ff,#8d00ff,#9500ff,#9d00ff,#a500ff,#ac00ff,#b400ff,#bc00ff,#c400ff,#cc00ff,#d300ff,#db00ff,#e300ff,#eb00ff,#f300ff,#fb00ff,#ff00fc,#ff00f4,#ff00ed,#ff00e6,#ff00e0,#ff00da,#ff00d4,#ff00cf,#ff00ca,#ff00c5)"></i><i style="top:387px;background:linear-gradient(90deg,#001bff,#0019ff,#0016ff,#0014ff,#0011ff,#000fff,#000cff,#000aff,#0007ff,#0004ff,#0001ff,#0000ff,#0000ff,#0000ff,#0000ff,#0000ff,#0000ff,#0000ff,#0000ff,#0000ff,#0b00ff,#1400ff,#1d00ff,#2500ff,#2d00ff,#3600ff,#3e00ff,#4600ff,#4e00ff,#5500ff,#5d00ff,#6500ff,#6d00ff,#7500ff,#7c00ff,#8400ff,#8c00ff,#9400ff,#9b00ff,#a300ff,#ab00ff,#b200ff,#ba00ff,#c200ff,#ca00ff,#d100ff,#d900ff,#e100ff,#e900ff,#f000ff,#f800ff,#ff00fe,#ff00f7,#ff00ef,#ff00e9,#ff00e2,#ff00dc,#ff00d6,#ff00d1,#ff00cc,#ff00c7)"></i><i style="top:390px;background:linear-gradient(90deg,#001aff,#0018ff,#0015ff,#0013ff,#0011ff,#000eff,#000cff,#0009ff,#0006ff,#0003ff,#0000ff,#0000ff,#0000ff,#0000ff,#0000ff,#0000ff,#0000ff,#0000ff,#0000ff,#0000ff,#0a00ff,#1300ff,#1c00ff,#2400ff,#2d00ff,#3500ff,#3d00ff,#4500ff,#4d00ff,#5400ff,#5c00ff,#6400ff,#6c00ff,#7300ff,#7b00ff,#8300ff,#8a00ff,#9200ff,#9a00ff,#a100ff,#a900ff,#b100ff,#b800ff,#c000ff,#c800ff,#cf00ff,#d700ff,#df00ff,#e600ff,#ee00ff,#f600ff,#fd00ff,#ff00f9,#ff00f2,#ff00eb,#ff00e4,#ff00de,#ff00d9,#ff00d3,#ff00ce,#ff00c9)"></i><i style="top:393px;background:linear-gradient(90deg,#0019ff,#0017ff,#0014ff,#0012ff,#0010ff,#000dff,#000bff,#0008ff,#0005ff,#0002ff,#0000ff,#0000ff,#0000ff,#0000ff,#0000ff,#0000ff,#0000ff,#0000ff,#0000ff,#0000ff,#0a00ff,#1300ff,#1b00ff,#2400ff,#2c00ff,#3400ff,#3c00ff,#4400ff,#4c00ff,#5300ff,#5b00ff,#6300ff,#6a00ff,#7200ff,#7a00ff,#8100ff,#8900ff,#9000ff,#9800ff,#a000ff,#a700ff,#af00ff,#b600ff,#be00ff,#c600ff,#cd00ff,#d500ff,#dc00ff,#e400ff,#ec00ff,#f300ff,#fb00ff,#ff00fb,#ff00f4,#ff00ed,#ff00e7,#ff00e0,#ff00db,#ff00d5,#ff00d0,#ff00cb)"></i><i style="top:396px;background:linear-gradient(90deg,#0018ff,#0016ff,#0014ff,#0011ff,#000fff,#000cff,#000aff,#0007ff,#0004ff,#0002ff,#0000ff,#0000ff,#0000ff,#0000ff,#0000ff,#0000ff,#0000ff,#0000ff,#0000ff,#0000ff,#0900ff,#1200ff,#1b00ff,#2300ff,#2b00ff,#3300ff,#3b00ff,#4300ff,#4b00ff,#5200ff,#5a00ff,#6200ff,#6900ff,#7100ff,#7800ff,#8000ff,#8700ff,#8f00ff,#9700ff,#9e00ff,#a600ff,#ad00ff,#b500ff,#bc00ff,#c400ff,#cb00ff,#d300ff,#da00ff,#e200ff,#e900ff,#f100ff,#f900ff,#ff00fe,#ff00f6,#ff00ef,#ff00e9,#ff00e3,#ff00dd,#ff00d7,#ff00d2,#ff00cd)"></i><i style="top:399px;background:linear-gradient(90deg,#0017ff,#0015ff,#0013ff,#0010ff,#000eff,#000cff,#0009ff,#0006ff,#0004ff,#0000ff,#0000ff,#0000ff,#0000ff,#0000ff,#0000ff,#0000ff,#0000ff,#0000ff,#0000ff,#0000ff,#0900ff,#1200ff,#1a00ff,#2200ff,#2a00ff,#3200ff,#3a00ff,#4200ff,#4a00ff,#5100ff,#5900ff,#6000ff,#6800ff,#7000ff,#7700ff,#7f00ff,#8600ff,#8e00ff,#9500ff,#9c00ff,#a400ff,#ab00ff,#b300ff,#ba00ff,#c200ff,#c900ff,#d100ff,#d800ff,#e000ff,#e700ff,#ef00ff,#f600ff,#fe00ff,#ff00f9,#ff00f2,#ff00eb,#ff00e5,#ff00df,#ff00d9,#ff00d4,#ff00ce)"></i><i style="top:402px;background:linear-gradient(90deg,#0016ff,#0014ff,#0012ff,#0010ff,#000dff,#000bff,#0008ff,#0005ff,#0003ff,#0000ff,#0000ff,#0000ff,#0000ff,#0000ff,#0000ff,#0000ff,#0000ff,#0000ff,#0000ff,#0000ff,#0800ff,#1100ff,#1900ff,#2200ff,#2a00ff,#3200ff,#3900ff,#4100ff,#4900ff,#5000ff,#5800ff,#5f00ff,#6700ff,#6e00ff,#7600ff,#7d00ff,#8500ff,#8c00ff,#9300ff,#9b00ff,#a200ff,#aa00ff,#b100ff,#b900ff,#c000ff,#c700ff,#cf00ff,#d600ff,#de00ff,#e500ff,#ed00ff,#f400ff,#fc00ff,#ff00fb,#ff00f4,#ff00ed,#ff00e7,#ff00e1,#ff00db,#ff00d6,#ff00d0)"></i><i style="top:405px;background:linear-gradient(90deg,#0016ff,#0013ff,#0011ff,#000fff,#000cff,#000aff,#0007ff,#0005ff,#0002ff,#0000ff,#0000ff,#0000ff,#0000ff,#0000ff,#0000ff,#0000ff,#0000ff,#0000ff,#0000ff,#0000ff,#0800ff,#1000ff,#1900ff,#2100ff,#2900ff,#3100ff,#3900ff,#4000ff,#4800ff,#4f00ff,#5700ff,#5e00ff,#6600ff,#6d00ff,#7500ff,#7c00ff,#8300ff,#8b00ff,#9200ff,#9900ff,#a100ff,#a800ff,#af00ff,#b700ff,#be00ff,#c500ff,#cd00ff,#d400ff,#dc00ff,#e300ff,#ea00ff,#f200ff,#f900ff,#ff00fd,#ff00f6,#ff00ef,#ff00e9,#ff00e3,#ff00dd,#ff00d8,#ff00d2)"></i><i style="top:408px;background:linear-gradient(90deg,#0015ff,#0012ff,#0010ff,#000eff,#000bff,#0009ff,#0006ff,#0004ff,#0001ff,#0000ff,#0000ff,#0000ff,#0000ff,#0000ff,#0000ff,#0000ff,#0000ff,#0000ff,#0000ff,#0000ff,#0700ff,#1000ff,#1800ff,#2000ff,#2800ff,#3000ff,#3800ff,#3f00ff,#4700ff,#4e00ff,#5600ff,#5d00ff,#6500ff,#6c00ff,#7300ff,#7b00ff,#8200ff,#8900ff,#9100ff,#9800ff,#9f00ff,#a600ff,#ae00ff,#b500ff,#bc00ff,#c400ff,#cb00ff,#d200ff,#da00ff,#e100ff,#e800ff,#f000ff,#f700ff,#fe00ff,#ff00f8,#ff00f2,#ff00eb,#ff00e5,#ff00df,#ff00da,#ff00d4)"></i><i style="top:411px;background:linear-gradient(90deg,#0014ff,#0012ff,#000fff,#000dff,#000bff,#0008ff,#0006ff,#0003ff,#0000ff,#0000ff,#0000ff,#0000ff,#0000ff,#0000ff,#0000ff,#0000ff,#0000ff,#0000ff,#0000ff,#0000ff,#0600ff,#0f00ff,#1800ff,#2000ff,#2800ff,#2f00ff,#3700ff,#3f00ff,#4600ff,#4d00ff,#5500ff,#5c00ff,#6400ff,#6b00ff,#7200ff,#7900ff,#8100ff,#8800ff,#8f00ff,#9600ff,#9e00ff,#a500ff,#ac00ff,#b300ff,#bb00ff,#c200ff,#c900ff,#d000ff,#d800ff,#df00ff,#e600ff,#ed00ff,#f500ff,#fc00ff,#ff00fb,#ff00f4,#ff00ed,#ff00e7,#ff00e1,#ff00dc,#ff00d6)"></i><i style="top:414px;background:linear-gradient(90deg,#0013ff,#0011ff,#000fff,#000cff,#000aff,#0007ff,#0005ff,#0002ff,#0000ff,#0000ff,#0000ff,#0000ff,#0000ff,#0000ff,#0000ff,#0000ff,#0000ff,#0000ff,#0000ff,#0000ff,#0600ff,#0f00ff,#1700ff,#1f00ff,#2700ff,#2f00ff,#3600ff,#3e00ff,#4500ff,#4d00ff,#5400ff,#5b00ff,#6200ff,#6a00ff,#7100ff,#7800ff,#7f00ff,#8700ff,#8e00ff,#9500ff,#9c00ff,#a300ff,#aa00ff,#b200ff,#b900ff,#c000ff,#c700ff,#ce00ff,#d600ff,#dd00ff,#e400ff,#eb00ff,#f200ff,#fa00ff,#ff00fd,#ff00f6,#ff00ef,#ff00e9,#ff00e3,#ff00de,#ff00d8)"></i><i style="top:417px;background:linear-gradient(90deg,#0012ff,#0010ff,#000eff,#000bff,#0009ff,#0006ff,#0004ff,#0001ff,#0000ff,#0000ff,#0000ff,#0000ff,#0000ff,#0000ff,#0000ff,#0000ff,#0000ff,#0000ff,#0000ff,#0000ff,#0500ff,#0e00ff,#1700ff,#1e00ff,#2600ff,#2e00ff,#3500ff,#3d00ff,#4400ff,#4c00ff,#5300ff,#5a00ff,#6100ff,#6900ff,#7000ff,#7700ff,#7e00ff,#8500ff,#8c00ff,#9300ff,#9b00ff,#a200ff,#a900ff,#b000ff,#b700ff,#be00ff,#c500ff,#cc00ff,#d400ff,#db00ff,#e200ff,#e900ff,#f000ff,#f700ff,#ff00ff,#ff00f8,#ff00f2,#ff00eb,#ff00e5,#ff00df,#ff00da)"></i><i style="top:420px;background:linear-gradient(90deg,#0011ff,#000fff,#000dff,#000bff,#0008ff,#0006ff,#0003ff,#0000ff,#0000ff,#0000ff,#0000ff,#0000ff,#0000ff,#0000ff,#0000ff,#0000ff,#0000ff,#0000ff,#0000ff,#0000ff,#0500ff,#0e00ff,#1600ff,#1e00ff,#2600ff,#2d00ff,#3500ff,#3c00ff,#4300ff,#4b00ff,#5200ff,#5900ff,#6000ff,#6700ff,#6f00ff,#7600ff,#7d00ff,#8400ff,#8b00ff,#9200ff,#9900ff,#a000ff,#a700ff,#ae00ff,#b500ff,#bc00ff,#c400ff,#cb00ff,#d200ff,#d900ff,#e000ff,#e700ff,#ee00ff,#f500ff,#fc00ff,#ff00fb,#ff00f4,#ff00ed,#ff00e7,#ff00e1,#ff00dc)"></i><i style="top:423px;background:linear-gradient(90deg,#0011ff,#000eff,#000cff,#000aff,#0007ff,#0005ff,#0002ff,#0000ff,#0000ff,#0000ff,#0000ff,#0000ff,#0000ff,#0000ff,#0000ff,#0000ff,#0000ff,#0000ff,#0000ff,#0000ff,#0400ff,#0d00ff,#1500ff,#1d00ff,#2500ff,#2d00ff,#3400ff,#3b00ff,#4300ff,#4a00ff,#5100ff,#5800ff,#5f00ff,#6600ff,#6d00ff,#7500ff,#7c00ff,#8300ff,#8a00ff,#9100ff,#9800ff,#9f00ff,#a600ff,#ad00ff,#b400ff,#bb00ff,#c200ff,#c900ff,#d000ff,#d700ff,#de00ff,#e500ff,#ec00ff,#f300ff,#fa00ff,#ff00fd,#ff00f6,#ff00ef,#ff00e9,#ff00e3,#ff00de)"></i></div>
<svg class="L" width="1600" height="758" viewBox="0 0 1600 758">
<clipPath id="hs"><path d="M1187.8 455.5 L1187.4 455.8 L1186.8 455.9 L1186.1 456.0 L1185.4 455.9 L1184.5 455.7 L1183.7 455.2 L1182.7 454.6 L1181.5 453.7 L1180.0 452.6 L1178.2 451.1 L1176.1 449.4 L1173.7 447.4 L1171.0 445.0 L1167.9 442.3 L1164.1 439.0 L1159.8 435.2 L1155.4 431.4 L1151.6 428.1 L1148.5 425.4 L1145.9 423.1 L1143.4 420.8 L1140.6 418.2 L1137.6 415.3 L1134.4 412.1 L1131.1 408.8 L1127.5 405.1 L1123.8 401.2 L1119.9 397.2 L1115.7 392.6 L1111.1 387.4 L1106.1 381.4 L1100.8 374.7 L1095.1 367.4 L1089.2 359.5 L1082.9 350.9 L1076.3 341.7 L1069.5 331.8 L1062.7 321.4 L1055.6 310.3 L1048.4 298.5 L1041.1 286.3 L1033.9 273.9 L1026.7 261.3 L1019.4 248.4 L1012.3 235.4 L1005.7 222.6 L999.6 210.0 L993.7 197.4 L988.3 185.1 L983.4 173.4 L978.9 162.2 L975.0 151.4 L971.4 141.3 L968.3 131.8 L965.7 123.1 L963.6 115.1 L961.9 107.8 L960.5 101.0 L959.5 94.8 L959.0 89.3 L958.7 84.2 L958.7 79.5 L959.0 75.0 L959.6 70.9 L960.4 67.2 L961.4 63.9 L962.5 61.0 L963.9 58.6 L965.5 56.4 L967.3 54.5 L969.4 53.0 L971.8 51.7 L974.4 50.6 L977.1 49.8 L979.8 49.1 L982.7 48.6 L985.7 48.3 L988.7 48.0 L991.8 47.8 L994.9 47.7 L998.1 47.6 L1001.4 47.6 L1004.5 47.5 L1007.7 47.6 L1011.0 47.6 L1014.2 47.7 L1017.5 47.8 L1020.8 48.0 L1024.2 48.2 L1027.7 48.4 L1031.2 48.6 L1034.8 48.9 L1038.4 49.1 L1042.1 49.4 L1045.9 49.8 L1049.8 50.1 L1053.8 50.5 L1057.9 50.9 L1062.0 51.3 L1066.3 51.8 L1070.6 52.2 L1075.1 52.7 L1079.7 53.2 L1084.5 53.7 L1089.3 54.3 L1094.3 54.8 L1099.4 55.4 L1104.6 56.0 L1110.0 56.6 L1115.5 57.2 L1121.1 57.9 L1126.9 58.6 L1132.9 59.3 L1138.9 60.0 L1145.2 60.7 L1151.5 61.5 L1158.1 62.2 L1164.7 63.0 L1171.5 63.8 L1178.5 64.6 L1185.6 65.5 L1192.8 66.3 L1200.2 67.2 L1207.7 68.1 L1215.4 69.0 L1223.2 69.9 L1231.0 70.9 L1239.0 71.8 L1247.1 72.8 L1255.2 73.7 L1263.4 74.7 L1271.7 75.7 L1280.0 76.7 L1288.2 77.6 L1296.3 78.6 L1304.3 79.5 L1312.2 80.5 L1320.1 81.4 L1328.0 82.4 L1335.9 83.3 L1343.7 84.2 L1351.2 85.1 L1358.5 86.0 L1365.7 86.8 L1372.6 87.6 L1379.4 88.4 L1385.9 89.2 L1392.3 89.9 L1398.4 90.7 L1404.3 91.4 L1409.6 92.0 L1414.4 92.6 L1419.5 93.2 L1425.5 93.9 L1433.0 94.8 L1441.6 95.8 L1450.3 96.8 L1458.2 97.7 L1465.0 98.5 L1471.2 99.3 L1476.9 100.0 L1482.1 100.6 L1486.8 101.1 L1490.9 101.6 L1494.6 102.0 L1497.8 102.4 L1500.7 102.7 L1503.0 103.0 L1505.1 103.3 L1507.2 103.5 L1509.4 103.8 L1511.7 104.1 L1513.7 104.3 L1515.3 104.5 L1516.6 104.6 L1517.4 104.7 L1518.1 104.8 Z"/></clipPath>
<clipPath id="pa"><rect x="956.2" y="36.9" width="542.4" height="430.4"/></clipPath>
<g clip-path="url(#pa)"><g clip-path="url(#hs)"><path d="M900 -20 H1700 V600 H900 Z M1099.9 377.5 L987.0 -20.0 L1700 -20 L1700.0 -89.6 Z" fill="#000" fill-opacity="0.39" fill-rule="evenodd"/></g></g>
<rect x="956.2" y="36.4" width="542.4" height="1.2" fill="#9a9a9a"/>
<rect x="1497.9" y="36.4" width="1.2" height="431" fill="#9a9a9a"/>
<rect x="955.5" y="36.4" width="1.4" height="436" fill="#a8a8a8"/>
<rect x="951" y="466.6" width="548" height="1.4" fill="#a8a8a8"/>
<rect x="951" y="466.7" width="5" height="1.2" fill="#a8a8a8"/>
<text x="950.3" y="471.8" font-size="13.08" text-anchor="end" fill="#e6e6e6">0</text>
<rect x="951" y="431.0" width="5" height="1.2" fill="#a8a8a8"/>
<text x="950.3" y="436.1" font-size="13.08" text-anchor="end" fill="#e6e6e6">0,05</text>
<rect x="951" y="395.3" width="5" height="1.2" fill="#a8a8a8"/>
<text x="950.3" y="400.4" font-size="13.08" text-anchor="end" fill="#e6e6e6">0,1</text>
<rect x="951" y="359.6" width="5" height="1.2" fill="#a8a8a8"/>
<text x="950.3" y="364.7" font-size="13.08" text-anchor="end" fill="#e6e6e6">0,15</text>
<rect x="951" y="323.9" width="5" height="1.2" fill="#a8a8a8"/>
<text x="950.3" y="329.0" font-size="13.08" text-anchor="end" fill="#e6e6e6">0,2</text>
<rect x="951" y="288.2" width="5" height="1.2" fill="#a8a8a8"/>
<text x="950.3" y="293.3" font-size="13.08" text-anchor="end" fill="#e6e6e6">0,25</text>
<rect x="951" y="252.5" width="5" height="1.2" fill="#a8a8a8"/>
<text x="950.3" y="257.6" font-size="13.08" text-anchor="end" fill="#e6e6e6">0,3</text>
<rect x="951" y="216.8" width="5" height="1.2" fill="#a8a8a8"/>
<text x="950.3" y="221.9" font-size="13.08" text-anchor="end" fill="#e6e6e6">0,35</text>
<rect x="951" y="181.1" width="5" height="1.2" fill="#a8a8a8"/>
<text x="950.3" y="186.2" font-size="13.08" text-anchor="end" fill="#e6e6e6">0,4</text>
<rect x="951" y="145.4" width="5" height="1.2" fill="#a8a8a8"/>
<text x="950.3" y="150.5" font-size="13.08" text-anchor="end" fill="#e6e6e6">0,45</text>
<rect x="951" y="109.7" width="5" height="1.2" fill="#a8a8a8"/>
<text x="950.3" y="114.8" font-size="13.08" text-anchor="end" fill="#e6e6e6">0,5</text>
<rect x="951" y="74.0" width="5" height="1.2" fill="#a8a8a8"/>
<text x="950.3" y="79.1" font-size="13.08" text-anchor="end" fill="#e6e6e6">0,55</text>
<rect x="955.6" y="467" width="1.2" height="5" fill="#a8a8a8"/>
<text x="956.2" y="485.7" font-size="13.08" text-anchor="middle" fill="#e6e6e6">0</text>
<rect x="1000.7" y="467" width="1.2" height="5" fill="#a8a8a8"/>
<text x="1001.3" y="485.7" font-size="13.08" text-anchor="middle" fill="#e6e6e6">0,05</text>
<rect x="1045.8" y="467" width="1.2" height="5" fill="#a8a8a8"/>
<text x="1046.4" y="485.7" font-size="13.08" text-anchor="middle" fill="#e6e6e6">0,1</text>
<rect x="1090.9" y="467" width="1.2" height="5" fill="#a8a8a8"/>
<text x="1091.5" y="485.7" font-size="13.08" text-anchor="middle" fill="#e6e6e6">0,15</text>
<rect x="1136.0" y="467" width="1.2" height="5" fill="#a8a8a8"/>
<text x="1136.6" y="485.7" font-size="13.08" text-anchor="middle" fill="#e6e6e6">0,2</text>
<rect x="1181.1" y="467" width="1.2" height="5" fill="#a8a8a8"/>
<text x="1181.7" y="485.7" font-size="13.08" text-anchor="middle" fill="#e6e6e6">0,25</text>
<rect x="1226.2" y="467" width="1.2" height="5" fill="#a8a8a8"/>
<text x="1226.8" y="485.7" font-size="13.08" text-anchor="middle" fill="#e6e6e6">0,3</text>
<rect x="1271.3" y="467" width="1.2" height="5" fill="#a8a8a8"/>
<text x="1271.9" y="485.7" font-size="13.08" text-anchor="middle" fill="#e6e6e6">0,35</text>
<rect x="1316.4" y="467" width="1.2" height="5" fill="#a8a8a8"/>
<text x="1317.0" y="485.7" font-size="13.08" text-anchor="middle" fill="#e6e6e6">0,4</text>
<rect x="1361.5" y="467" width="1.2" height="5" fill="#a8a8a8"/>
<text x="1362.1" y="485.7" font-size="13.08" text-anchor="middle" fill="#e6e6e6">0,45</text>
<rect x="1406.6" y="467" width="1.2" height="5" fill="#a8a8a8"/>
<text x="1407.2" y="485.7" font-size="13.08" text-anchor="middle" fill="#e6e6e6">0,5</text>
<rect x="1451.7" y="467" width="1.2" height="5" fill="#a8a8a8"/>
<text x="1452.3" y="485.7" font-size="13.08" text-anchor="middle" fill="#e6e6e6">0,55</text>
<text x="1212.5" y="33.4" font-size="13.52" text-anchor="middle" fill="#dcdcdc" textLength="72.2" lengthAdjust="spacingAndGlyphs">CIE 1976 u'v'</text>
<rect x="1038.5" y="47.3" width="10.4" height="10.4" fill="none" stroke="#fff" stroke-width="1.7"/>
<rect x="1050.3" y="57.7" width="10.4" height="10.4" fill="none" stroke="#fff" stroke-width="1.7"/>
<rect x="1065.3" y="70.2" width="10.4" height="10.4" fill="none" stroke="#fff" stroke-width="1.7"/>
<rect x="1082.7" y="85.2" width="10.4" height="10.4" fill="none" stroke="#fff" stroke-width="1.7"/>
<rect x="1104.5" y="102.8" width="10.4" height="10.4" fill="none" stroke="#fff" stroke-width="1.7"/>
<rect x="1134.4" y="57.3" width="10.4" height="10.4" fill="none" stroke="#fff" stroke-width="1.7"/>
<rect x="1133.6" y="68.4" width="10.4" height="10.4" fill="none" stroke="#fff" stroke-width="1.7"/>
<rect x="1132.0" y="79.9" width="10.4" height="10.4" fill="none" stroke="#fff" stroke-width="1.7"/>
<rect x="1130.0" y="93.3" width="10.4" height="10.4" fill="none" stroke="#fff" stroke-width="1.7"/>
<rect x="1132.0" y="108.0" width="10.4" height="10.4" fill="none" stroke="#fff" stroke-width="1.7"/>
<rect x="1059.2" y="136.1" width="10.4" height="10.4" fill="none" stroke="#fff" stroke-width="1.7"/>
<rect x="1073.3" y="135.0" width="10.4" height="10.4" fill="none" stroke="#fff" stroke-width="1.7"/>
<rect x="1086.9" y="132.5" width="10.4" height="10.4" fill="none" stroke="#fff" stroke-width="1.7"/>
<rect x="1101.1" y="128.9" width="10.4" height="10.4" fill="none" stroke="#fff" stroke-width="1.7"/>
<rect x="1116.2" y="127.0" width="10.4" height="10.4" fill="none" stroke="#fff" stroke-width="1.7"/>
<rect x="1174.8" y="119.1" width="10.4" height="10.4" fill="none" stroke="#fff" stroke-width="1.7"/>
<rect x="1227.6" y="109.3" width="10.4" height="10.4" fill="none" stroke="#fff" stroke-width="1.7"/>
<rect x="1281.2" y="102.6" width="10.4" height="10.4" fill="none" stroke="#fff" stroke-width="1.7"/>
<rect x="1338.3" y="94.0" width="10.4" height="10.4" fill="none" stroke="#fff" stroke-width="1.7"/>
<rect x="1398.4" y="85.1" width="10.4" height="10.4" fill="none" stroke="#fff" stroke-width="1.7"/>
<rect x="1144.9" y="138.9" width="10.4" height="10.4" fill="none" stroke="#fff" stroke-width="1.7"/>
<rect x="1167.0" y="156.8" width="10.4" height="10.4" fill="none" stroke="#fff" stroke-width="1.7"/>
<rect x="1186.1" y="175.1" width="10.4" height="10.4" fill="none" stroke="#fff" stroke-width="1.7"/>
<rect x="1212.4" y="199.1" width="10.4" height="10.4" fill="none" stroke="#fff" stroke-width="1.7"/>
<rect x="1241.8" y="227.4" width="10.4" height="10.4" fill="none" stroke="#fff" stroke-width="1.7"/>
<rect x="1128.6" y="153.4" width="10.4" height="10.4" fill="none" stroke="#fff" stroke-width="1.7"/>
<rect x="1123.8" y="184.2" width="10.4" height="10.4" fill="none" stroke="#fff" stroke-width="1.7"/>
<rect x="1119.3" y="227.5" width="10.4" height="10.4" fill="none" stroke="#fff" stroke-width="1.7"/>
<rect x="1116.2" y="278.4" width="10.4" height="10.4" fill="none" stroke="#fff" stroke-width="1.7"/>
<rect x="1109.0" y="348.2" width="10.4" height="10.4" fill="none" stroke="#fff" stroke-width="1.7"/>
<circle cx="1042.3" cy="52.3" r="3.7" fill="#707070" fill-opacity="0.88" stroke="#1c1c1c" stroke-width="1.4"/>
<circle cx="1055" cy="62.9" r="3.7" fill="#707070" fill-opacity="0.88" stroke="#1c1c1c" stroke-width="1.4"/>
<circle cx="1071.5" cy="75.8" r="3.7" fill="#707070" fill-opacity="0.88" stroke="#1c1c1c" stroke-width="1.4"/>
<circle cx="1088.5" cy="90.6" r="3.7" fill="#707070" fill-opacity="0.88" stroke="#1c1c1c" stroke-width="1.4"/>
<circle cx="1109.4" cy="108.8" r="3.7" fill="#707070" fill-opacity="0.88" stroke="#1c1c1c" stroke-width="1.4"/>
<circle cx="1140.4" cy="62.6" r="3.7" fill="#707070" fill-opacity="0.88" stroke="#1c1c1c" stroke-width="1.4"/>
<circle cx="1139.2" cy="73.2" r="3.7" fill="#707070" fill-opacity="0.88" stroke="#1c1c1c" stroke-width="1.4"/>
<circle cx="1137.3" cy="85.1" r="3.7" fill="#707070" fill-opacity="0.88" stroke="#1c1c1c" stroke-width="1.4"/>
<circle cx="1134.7" cy="97.3" r="3.7" fill="#707070" fill-opacity="0.88" stroke="#1c1c1c" stroke-width="1.4"/>
<circle cx="1137.6" cy="112.5" r="3.7" fill="#707070" fill-opacity="0.88" stroke="#1c1c1c" stroke-width="1.4"/>
<circle cx="1062.4" cy="141.3" r="3.7" fill="#707070" fill-opacity="0.88" stroke="#1c1c1c" stroke-width="1.4"/>
<circle cx="1077.5" cy="137.8" r="3.7" fill="#707070" fill-opacity="0.88" stroke="#1c1c1c" stroke-width="1.4"/>
<circle cx="1091.2" cy="136.5" r="3.7" fill="#707070" fill-opacity="0.88" stroke="#1c1c1c" stroke-width="1.4"/>
<circle cx="1106.3" cy="131.8" r="3.7" fill="#707070" fill-opacity="0.88" stroke="#1c1c1c" stroke-width="1.4"/>
<circle cx="1121.3" cy="129.9" r="3.7" fill="#707070" fill-opacity="0.88" stroke="#1c1c1c" stroke-width="1.4"/>
<circle cx="1181.1" cy="122.9" r="3.7" fill="#707070" fill-opacity="0.88" stroke="#1c1c1c" stroke-width="1.4"/>
<circle cx="1230.9" cy="114.6" r="3.7" fill="#707070" fill-opacity="0.88" stroke="#1c1c1c" stroke-width="1.4"/>
<circle cx="1284.8" cy="106.4" r="3.7" fill="#707070" fill-opacity="0.88" stroke="#1c1c1c" stroke-width="1.4"/>
<circle cx="1340.3" cy="100.1" r="3.7" fill="#707070" fill-opacity="0.88" stroke="#1c1c1c" stroke-width="1.4"/>
<circle cx="1401.5" cy="90.65" r="3.7" fill="#8a5a1a" fill-opacity="0.88" stroke="#1c1c1c" stroke-width="1.4"/>
<circle cx="1149.8" cy="142.8" r="3.7" fill="#707070" fill-opacity="0.88" stroke="#1c1c1c" stroke-width="1.4"/>
<circle cx="1173.1" cy="160.6" r="3.7" fill="#707070" fill-opacity="0.88" stroke="#1c1c1c" stroke-width="1.4"/>
<circle cx="1191.5" cy="179.6" r="3.7" fill="#707070" fill-opacity="0.88" stroke="#1c1c1c" stroke-width="1.4"/>
<circle cx="1218.7" cy="204.6" r="3.7" fill="#707070" fill-opacity="0.88" stroke="#1c1c1c" stroke-width="1.4"/>
<circle cx="1245.6" cy="229.1" r="3.7" fill="#707070" fill-opacity="0.88" stroke="#1c1c1c" stroke-width="1.4"/>
<circle cx="1133.5" cy="156.6" r="3.7" fill="#707070" fill-opacity="0.88" stroke="#1c1c1c" stroke-width="1.4"/>
<circle cx="1129" cy="187.5" r="3.7" fill="#707070" fill-opacity="0.88" stroke="#1c1c1c" stroke-width="1.4"/>
<circle cx="1124.5" cy="231.8" r="3.7" fill="#707070" fill-opacity="0.88" stroke="#1c1c1c" stroke-width="1.4"/>
<circle cx="1115.2" cy="288" r="3.7" fill="#707070" fill-opacity="0.88" stroke="#1c1c1c" stroke-width="1.4"/>
<circle cx="1115.2" cy="350.6" r="3.7" fill="#707070" fill-opacity="0.88" stroke="#1c1c1c" stroke-width="1.4"/>
<rect x="1128.3" y="126" width="10.8" height="10.8" fill="none" stroke="#111" stroke-width="2"/>
<circle cx="1134.4" cy="130.7" r="3.8" fill="#fff" stroke="#222" stroke-width="1"/>
<rect x="1335.7" y="303" width="157.7" height="127.9" fill="#7a7a7a"/>
</svg>
<div id="ins" style="left:1337px;top:304.3px;width:155px;height:125.3px"><i style="top:0px;height:4px;background:linear-gradient(90deg,#80ffcb,#83ffc8,#8bffc6,#92ffc5,#99ffc4,#9fffc3,#aaffc2,#b7ffc1,#c2ffbf,#cbffbc,#d3ffb8,#dbffb2,#e2ffab,#e9ffa8,#f1ffa3,#faff9e,#fffb98,#fff191,#ffe88a,#ffde82,#ffd780)"></i><i style="top:4px;height:4px;background:linear-gradient(90deg,#80ffd0,#87ffce,#8fffcd,#96ffcc,#9dffcb,#a3ffca,#b1ffc9,#bdffc8,#c7ffc6,#d0ffc4,#d8ffc0,#dfffbb,#e6ffb4,#edffac,#f5ffa8,#feffa2,#fff79c,#ffee95,#ffe58e,#ffdc86,#ffd480)"></i><i style="top:8px;height:4px;background:linear-gradient(90deg,#82ffd6,#8affd4,#92ffd3,#9affd2,#a1ffd1,#a8ffd0,#b7ffd0,#c3ffcf,#cdffcd,#d6ffcb,#ddffc8,#e3ffc3,#eaffbc,#f1ffb4,#f8ffad,#fffda7,#fff5a0,#ffec99,#ffe391,#ffdb89,#ffd281)"></i><i style="top:12px;height:4px;background:linear-gradient(90deg,#85ffdd,#8dffdb,#96ffd9,#9effd8,#a5ffd7,#aeffd6,#bcffd6,#c8ffd5,#d2ffd4,#daffd2,#e1ffcf,#e8ffca,#eeffc4,#f4ffbc,#fbffb2,#fffaab,#fff2a4,#ffea9d,#ffe295,#ffd98c,#ffd184)"></i><i style="top:16px;height:4px;background:linear-gradient(90deg,#88ffe3,#90ffe1,#99ffdf,#a1ffde,#a9ffdd,#b4ffdc,#c2ffdb,#ceffdb,#d7ffda,#dfffd8,#e6ffd6,#ebffd2,#f1ffcc,#f7ffc4,#feffbb,#fff8af,#fff0a8,#ffe8a0,#ffe098,#ffd88f,#ffcf86)"></i><i style="top:20px;height:4px;background:linear-gradient(90deg,#8affe9,#93ffe6,#9cffe5,#a5ffe3,#adffe2,#baffe1,#c8ffe1,#d3ffe0,#dcffe0,#e3ffde,#eaffdc,#efffd8,#f4ffd3,#faffcb,#fffdc2,#fff6b6,#ffeeac,#ffe7a3,#ffde9b,#ffd692,#ffce89)"></i><i style="top:24px;height:4px;background:linear-gradient(90deg,#8dffef,#96ffec,#9fffea,#a8ffe8,#b0ffe7,#bfffe6,#cdffe6,#d7ffe6,#e1ffe5,#e8ffe4,#edffe2,#f2ffde,#f7ffd9,#fdffd2,#fffbc9,#fff4bd,#ffecb1,#ffe5a7,#ffdd9e,#ffd595,#ffcd8b)"></i><i style="top:28px;height:4px;background:linear-gradient(90deg,#8ffff5,#98fff2,#a2ffef,#abffed,#b3ffec,#c4ffeb,#d1ffeb,#dcffea,#e5ffea,#ebffe9,#f1ffe7,#f5ffe4,#faffdf,#ffffd8,#fff9ce,#fff2c3,#ffebb7,#ffe4a9,#ffdca0,#ffd497,#ffcb8d)"></i><i style="top:32px;height:4px;background:linear-gradient(90deg,#91fffb,#9afff8,#a4fff5,#adfff2,#b8fff0,#c8ffef,#d6ffef,#e0ffee,#e9ffee,#efffee,#f4ffec,#f8ffe9,#fcffe5,#fffddd,#fff7d3,#fff1c8,#ffeabd,#ffe3b0,#ffdba3,#ffd399,#ffca8f)"></i><i style="top:36px;height:4px;background:linear-gradient(90deg,#92fdff,#9cfffd,#a6fffa,#b0fff7,#bdfff5,#cdfff3,#dafff3,#e4fff2,#ecfff2,#f2fff2,#f6fff1,#faffee,#feffe9,#fffbe2,#fff6d8,#fff0cd,#ffe9c2,#ffe2b5,#ffdaa7,#ffd29b,#ffc991)"></i><i style="top:40px;height:4px;background:linear-gradient(90deg,#94f7ff,#9efcff,#a8ffff,#b2fffb,#c1fff9,#d1fff7,#ddfff6,#e8fff6,#f0fff6,#f5fff5,#f9fff5,#fcfff2,#ffffee,#fffae6,#fff5dc,#ffefd1,#ffe8c6,#ffe1b9,#ffd9ac,#ffd09e,#ffc893)"></i><i style="top:44px;height:4px;background:linear-gradient(90deg,#95f3ff,#9ff7ff,#a9fbff,#b3feff,#c5fffd,#d4fffb,#e1fff9,#ebfff9,#f2fff9,#f8fff8,#fbfff8,#fdfff6,#fffdf1,#fff9e9,#fff4e0,#ffeed5,#ffe7ca,#ffdfbd,#ffd8b0,#ffcfa3,#ffc794)"></i><i style="top:48px;height:4px;background:linear-gradient(90deg,#96eeff,#a1f2ff,#abf6ff,#b5faff,#c7fdff,#d7fffe,#e4fffc,#edfffb,#f5fffb,#fafffb,#fdfffb,#fffff9,#fffcf3,#fff8ec,#fff3e3,#ffedd8,#ffe6cd,#ffdec1,#ffd6b4,#ffcea6,#ffc598)"></i><i style="top:52px;height:4px;background:linear-gradient(90deg,#97eaff,#a1eeff,#acf3ff,#b8f6ff,#cafaff,#d9fdff,#e6ffff,#f0fffe,#f7fffd,#fcfffd,#fefffd,#fffffb,#fffcf5,#fff8ee,#fff2e5,#ffecdb,#ffe5d0,#ffddc4,#ffd5b7,#ffcdaa,#ffc49c)"></i><i style="top:56px;height:4px;background:linear-gradient(90deg,#97e6ff,#a2ebff,#acefff,#baf3ff,#cbf6ff,#dafaff,#e7fcff,#f1feff,#f8fffe,#fdfffe,#fffffe,#fffefc,#fffbf7,#fff7f0,#fff1e7,#ffebdd,#ffe4d2,#ffdcc6,#ffd4ba,#ffcbad,#ffc39f)"></i><i style="top:60px;height:4px;background:linear-gradient(90deg,#98e2ff,#a2e7ff,#acecff,#bcf0ff,#ccf4ff,#dbf7ff,#e7faff,#f1fcff,#f9feff,#feffff,#ffffff,#fffefd,#fffbf8,#fff6f1,#fff0e8,#ffeadf,#ffe2d4,#ffdbc9,#ffd2bc,#ffcab0,#ffc1a2)"></i><i style="top:64px;height:4px;background:linear-gradient(90deg,#98dfff,#a2e3ff,#ace8ff,#bdedff,#cdf1ff,#dbf4ff,#e7f8ff,#f1fbff,#f9fdff,#fdfeff,#ffffff,#fffdfd,#fffaf8,#fff5f1,#ffefe9,#ffe8e0,#ffe1d6,#ffd9ca,#ffd1be,#ffc8b2,#ffbfa5)"></i><i style="top:68px;height:4px;background:linear-gradient(90deg,#97dbff,#a2e0ff,#ace5ff,#beeaff,#cdeeff,#dbf2ff,#e7f6ff,#f1f9ff,#f8fbff,#fdfdff,#fffeff,#fffcfd,#fff9f8,#fff3f2,#ffedea,#ffe7e1,#ffdfd7,#ffd7cc,#ffcfc0,#ffc6b4,#ffbda7)"></i><i style="top:72px;height:4px;background:linear-gradient(90deg,#97d7ff,#a1ddff,#ade2ff,#bee7ff,#cdebff,#dbefff,#e6f3ff,#f0f7ff,#f7faff,#fcfcff,#fffdff,#fffbfc,#fff7f8,#fff2f2,#ffecea,#ffe5e2,#ffddd8,#ffd6cd,#ffcdc1,#ffc4b5,#ffbba9)"></i><i style="top:76px;height:4px;background:linear-gradient(90deg,#96d4ff,#a0d9ff,#addfff,#bee4ff,#cde8ff,#daedff,#e5f1ff,#eef4ff,#f6f7ff,#fbfaff,#fefbff,#fff9fc,#fff5f8,#fff0f2,#ffeaeb,#ffe3e2,#ffdbd8,#ffd3ce,#ffcbc3,#ffc2b7,#ffb9aa)"></i><i style="top:80px;height:4px;background:linear-gradient(90deg,#94d1ff,#9fd6ff,#addbff,#bee0ff,#cce5ff,#d9eaff,#e4eeff,#edf2ff,#f4f5ff,#f9f7ff,#fdf8ff,#fff7fc,#fff3f8,#ffeef2,#ffe7ea,#ffe1e2,#ffd9d9,#ffd1ce,#ffc9c3,#ffc0b8,#ffb7ac)"></i><i style="top:84px;height:4px;background:linear-gradient(90deg,#93cdff,#9dd2ff,#add8ff,#bdddff,#cbe2ff,#d7e7ff,#e2ebff,#ebefff,#f2f2ff,#f8f4ff,#fdf5ff,#fff4fd,#fff0f8,#ffebf2,#ffe5ea,#ffdee2,#ffd6d9,#ffcecf,#ffc6c4,#ffbdb9,#ffb4ad)"></i><i style="top:88px;height:4px;background:linear-gradient(90deg,#91c9ff,#9bcfff,#acd5ff,#bcdaff,#cadfff,#d6e4ff,#e0e8ff,#e9ecff,#f1efff,#f7f1ff,#fcf2ff,#fff1fd,#ffedf8,#ffe8f1,#ffe2ea,#ffdbe2,#ffd4d9,#ffcbcf,#ffc3c5,#ffbaba,#ffb2ae)"></i><i style="top:92px;height:4px;background:linear-gradient(90deg,#8fc6ff,#9bcbff,#acd1ff,#bbd6ff,#c8dcff,#d4e0ff,#dfe4ff,#e7e8ff,#efebff,#f5edff,#fbefff,#ffeefe,#ffeaf8,#ffe5f1,#ffdfea,#ffd8e2,#ffd0d9,#ffc9d0,#ffc0c5,#ffb8ba,#ffaeae)"></i><i style="top:96px;height:4px;background:linear-gradient(90deg,#8dc2ff,#9ac8ff,#abcdff,#b9d3ff,#c7d8ff,#d2dcff,#dde1ff,#e5e4ff,#ede7ff,#f3e9ff,#f9ebff,#ffebfe,#ffe6f8,#ffe1f1,#ffdbea,#ffd4e2,#ffcdd9,#ffc5d0,#ffbdc6,#ffb5bb,#ffacaf)"></i><i style="top:100px;height:4px;background:linear-gradient(90deg,#8bbeff,#99c4ff,#a9caff,#b8cfff,#c5d4ff,#d0d9ff,#daddff,#e3e0ff,#ebe3ff,#f2e5ff,#f8e6ff,#ffe7ff,#ffe2f8,#ffddf1,#ffd8ea,#ffd1e2,#ffc9d9,#ffc2d0,#ffbac5,#ffb1bb,#ffa8b0)"></i><i style="top:104px;height:4px;background:linear-gradient(90deg,#88baff,#98c0ff,#a8c6ff,#b6cbff,#c3d0ff,#ced4ff,#d8d9ff,#e1dcff,#e9dfff,#f0e1ff,#f7e2ff,#fee2ff,#ffdef9,#ffd9f1,#ffd3ea,#ffcde2,#ffc6d9,#ffbed0,#ffb6c6,#ffadbb,#ffa5b0)"></i><i style="top:108px;height:4px;background:linear-gradient(90deg,#86b6ff,#97bcff,#a6c1ff,#b4c7ff,#c0ccff,#ccd0ff,#d6d4ff,#dfd7ff,#e7daff,#eedcff,#f5ddff,#fcddff,#ffdaf9,#ffd5f2,#ffcfea,#ffc9e2,#ffc2d9,#ffbad0,#ffb2c6,#ffaabc,#ffa1b1)"></i><i style="top:112px;height:4px;background:linear-gradient(90deg,#84b2ff,#95b8ff,#a4bdff,#b2c2ff,#bec7ff,#c9ccff,#d4d0ff,#ddd3ff,#e5d5ff,#ecd7ff,#f4d8ff,#fbd8ff,#ffd5fa,#ffd1f2,#ffcbea,#ffc5e2,#ffbdd9,#ffb6d0,#ffaec6,#ffa6bc,#ff9db1)"></i><i style="top:116px;height:4px;background:linear-gradient(90deg,#83aeff,#94b3ff,#a2b9ff,#b0beff,#bcc3ff,#c7c7ff,#d1cbff,#daceff,#e3d1ff,#ead2ff,#f2d3ff,#fad3ff,#ffd1fb,#ffccf3,#ffc6eb,#ffc0e2,#ffb9d9,#ffb2d0,#ffaac6,#ffa2bc,#ff9ab2)"></i><i style="top:120px;height:4px;background:linear-gradient(90deg,#85abff,#92afff,#a1b4ff,#aeb9ff,#babeff,#c5c2ff,#cfc6ff,#d8c9ff,#e0cbff,#e8cdff,#f0ceff,#f9ceff,#ffccfc,#ffc7f4,#ffc1eb,#ffbbe2,#ffb5d9,#ffadd0,#ffa6c6,#ff9dbc,#ff99b3)"></i><i style="top:124px;height:4px;background:linear-gradient(90deg,#87a9ff,#90aaff,#9eb0ff,#acb5ff,#b7b9ff,#c2bdff,#ccc1ff,#d6c4ff,#dec6ff,#e7c7ff,#efc8ff,#f7c8ff,#ffc7fe,#ffc2f4,#ffbceb,#ffb6e2,#ffb0d9,#ffa9d0,#ffa1c6,#ff99bc,#ff97b6)"></i></div>
<svg class="L" width="1600" height="758" viewBox="0 0 1600 758">
<circle cx="1360.9" cy="345.1" r="3.8" fill="#7a7a7a" stroke="#222" stroke-width="1.2"/>
<rect x="1344" y="355.5" width="11" height="11" fill="none" stroke="#fff" stroke-width="1.8"/>
<rect x="1408" y="361.5" width="11" height="11" fill="none" stroke="#111" stroke-width="1.8"/>
<circle cx="1417.4" cy="367.2" r="4" fill="#fff" stroke="#222" stroke-width="1"/>
<text x="1236.1" y="455.4" font-size="20.35" fill="#fff" textLength="247.3" lengthAdjust="spacingAndGlyphs">RGB Triplet: 235, 235, 235</text>
<rect x="918.3" y="502.1" width="269.7" height="172.4" fill="#000"/>
<rect x="920.1" y="503.9" width="265.5" height="13.2" fill="#2c2c2c"/>
<rect x="920.1" y="517.1" width="265.5" height="12.9" fill="#171717"/>
<text x="1121.2" y="522.0" font-size="13.08" font-weight="bold" fill="#fff" textLength="29.3" lengthAdjust="spacingAndGlyphs">100</text>
<rect x="920.1" y="530" width="265.5" height="24.00" fill="#404040"/>
<text x="935.5" y="547.8" font-size="15.55" font-weight="bold" fill="#fff" textLength="71.9" lengthAdjust="spacingAndGlyphs">x: CIE31</text>
<text x="1089.9" y="547.8" font-size="15.55" fill="#f4f4f4" textLength="58.0" lengthAdjust="spacingAndGlyphs">0,3137</text>
<rect x="920.1" y="554" width="265.5" height="24.60" fill="#7b7b7b"/>
<text x="935.5" y="571.8" font-size="15.55" font-weight="bold" fill="#fff" textLength="71.9" lengthAdjust="spacingAndGlyphs">y: CIE31</text>
<text x="1089.9" y="571.8" font-size="15.55" fill="#f4f4f4" textLength="58.2" lengthAdjust="spacingAndGlyphs">0,3288</text>
<rect x="920.1" y="578.6" width="265.5" height="23.95" fill="#404040"/>
<text x="935.5" y="596.4" font-size="15.55" font-weight="bold" fill="#fff">Y</text>
<text x="1089.9" y="596.4" font-size="15.55" fill="#f4f4f4" textLength="89.7" lengthAdjust="spacingAndGlyphs">2279,6309</text>
<rect x="920.1" y="602.55" width="265.5" height="24.11" fill="#7b7b7b"/>
<text x="935.5" y="620.3" font-size="15.55" font-weight="bold" fill="#fff" textLength="132.3" lengthAdjust="spacingAndGlyphs">Target x:CIE31</text>
<text x="1089.9" y="620.3" font-size="15.55" fill="#f4f4f4" textLength="57.1" lengthAdjust="spacingAndGlyphs">0,3127</text>
<rect x="920.1" y="626.66" width="265.5" height="23.54" fill="#404040"/>
<text x="935.5" y="644.5" font-size="15.55" font-weight="bold" fill="#fff" textLength="132.3" lengthAdjust="spacingAndGlyphs">Target y:CIE31</text>
<text x="1089.9" y="644.5" font-size="15.55" fill="#f4f4f4" textLength="57.8" lengthAdjust="spacingAndGlyphs">0,3290</text>
<rect x="920.1" y="650.2" width="265.5" height="24.10" fill="#7b7b7b"/>
<text x="935.5" y="668.0" font-size="15.55" font-weight="bold" fill="#fff" textLength="77.0" lengthAdjust="spacingAndGlyphs">Target Y</text>
<text x="1089.9" y="668.0" font-size="15.55" fill="#f4f4f4" textLength="89.7" lengthAdjust="spacingAndGlyphs">2279,6309</text>
<linearGradient id="tb" x1="0" y1="0" x2="0" y2="1"><stop offset="0" stop-color="#4c4c4c"/><stop offset="1" stop-color="#242424"/></linearGradient>
<rect x="0" y="689.3" width="1600" height="4.1" fill="#2c2c2c"/>
<rect x="0" y="693.4" width="1600" height="59.6" fill="url(#tb)"/>
<rect x="0" y="753" width="1600" height="3" fill="#1d1d1d"/>
<rect x="0" y="756" width="1600" height="2" fill="#292929"/>
<linearGradient id="b1" x1="0" y1="0" x2="0" y2="1"><stop offset="0" stop-color="#8e8e8e"/><stop offset="1" stop-color="#5c5c5c"/></linearGradient>
<rect x="1.1" y="693" width="46.8" height="63.3" rx="3" fill="url(#b1)"/>
<circle cx="24.5" cy="702.3" r="7.2" fill="#6e6e6e"/>
<path d="M20 705 L29 705 L24.5 699.8 Z" fill="#222"/>
<rect x="6.2" y="720.6" width="36.4" height="31.2" rx="3" fill="#fff"/>
<rect x="54.3" y="693.7" width="155.5" height="64.3" fill="#2e2e2e"/>
<rect x="54.3" y="693.7" width="155.5" height="46" fill="#1c1c1c"/>
<rect x="59.1" y="698.6" width="146.5" height="37.8" rx="4" fill="#fff"/>
<text x="132.7" y="752.2" font-size="11.34" text-anchor="middle" font-weight="bold" fill="#fff" textLength="19.3" lengthAdjust="spacingAndGlyphs">100</text>
<rect x="1261" y="692" width="339" height="66" fill="#1e1e1e"/>
<linearGradient id="bt" x1="0" y1="0" x2="0" y2="1"><stop offset="0" stop-color="#b8b8b8"/><stop offset="1" stop-color="#7c7c7c"/></linearGradient>
<linearGradient id="bd" x1="0" y1="0" x2="0" y2="1"><stop offset="0" stop-color="#464646"/><stop offset="1" stop-color="#2c2c2c"/></linearGradient>
<linearGradient id="bn" x1="0" y1="0" x2="0" y2="1"><stop offset="0" stop-color="#c4c4c4"/><stop offset="1" stop-color="#888"/></linearGradient>
<linearGradient id="ic" x1="0" y1="0" x2="0" y2="1"><stop offset="0" stop-color="#7a7a7a"/><stop offset="1" stop-color="#b0b0b0"/></linearGradient>
<rect x="1263.1" y="693" width="50.5" height="19.3" rx="3" fill="url(#bt)"/>
<rect x="1263.1" y="713.3" width="50.5" height="44.7" fill="url(#bt)"/>
<circle cx="1288.7" cy="702" r="7" fill="url(#ic)"/>
<path d="M1284.5 704.5 L1293 704.5 L1288.7 699.5 Z" fill="#222"/>
<rect x="1273" y="719.4" width="30.8" height="30.6" rx="4" fill="#111"/>
<rect x="1276" y="722.4" width="24.8" height="24.6" rx="2" fill="#c4c4c4"/>
<rect x="1281.5" y="727.6" width="14.5" height="14.4" fill="#111"/>
<rect x="1315.0" y="693" width="46.9" height="31" fill="url(#bt)"/>
<circle cx="1338.4" cy="709" r="10" fill="url(#ic)" opacity="0.8"/>
<rect x="1363.3" y="693" width="45.5" height="31" fill="url(#bt)"/>
<circle cx="1386.0" cy="709" r="10" fill="url(#ic)" opacity="0.8"/>
<rect x="1410.2" y="693" width="45.4" height="31" fill="url(#bt)"/>
<circle cx="1432.9" cy="709" r="10" fill="url(#ic)" opacity="0.8"/>
<rect x="1457.0" y="693" width="45.8" height="31" fill="url(#bt)"/>
<circle cx="1479.9" cy="709" r="10" fill="url(#ic)" opacity="0.8"/>
<rect x="1504.2" y="693" width="45.6" height="31" fill="url(#bd)"/>
<circle cx="1527.0" cy="709" r="10" fill="#333"/>
<rect x="1551.2" y="693" width="46.1" height="31" fill="url(#bt)"/>
<circle cx="1574.2" cy="709" r="10" fill="url(#ic)" opacity="0.8"/>
<rect x="1334.6" y="705" width="7.9" height="7.9" fill="#333"/>
<path d="M1382.5 702.5 L1391.5 709 L1382.5 715.5 Z" fill="#222"/>
<path d="M1428 703 h-1.8 v12 h1.8 M1438 703 h1.8 v12 h-1.8" stroke="#333" stroke-width="1.8" fill="none"/><circle cx="1431" cy="709" r="0.9" fill="#333"/><circle cx="1435" cy="709" r="0.9" fill="#333"/>
<path d="M1480 708 c-2 -3 -6 -3 -6 0 c0 3 4 3 6 0 c2 -3 6 -3 6 0 c0 3 -4 3 -6 0" stroke="#222" stroke-width="1.8" fill="none"/>
<path d="M1521.5 707.5 a5.5 5.5 0 0 1 10 -1 M1532.5 710.5 a5.5 5.5 0 0 1 -10 1" stroke="#141414" stroke-width="2.6" fill="none"/><path d="M1530 703.5 l3.5 3.5 l-4.5 1 Z M1524 714.5 l-3.5 -3.5 l4.5 -1 Z" fill="#141414"/>
<rect x="1315" y="725.7" width="140.6" height="32.3" fill="url(#bn)"/>
<rect x="1457" y="725.7" width="141" height="32.3" fill="url(#bn)"/>
<circle cx="1346.5" cy="740.8" r="10" fill="url(#ic)" opacity="0.8"/>
<circle cx="1568.5" cy="741" r="10" fill="url(#ic)" opacity="0.8"/>
<path d="M1346 736 l-4 4.8 l4 4.8 M1350 736 l-4 4.8 l4 4.8" stroke="#222" stroke-width="1.8" fill="none"/>
<path d="M1566 736.5 l4 4.8 l-4 4.8 M1570 736.5 l4 4.8 l-4 4.8" stroke="#222" stroke-width="1.8" fill="none"/>
<text x="1375.3" y="749.3" font-size="22.53" fill="#2a2a2a" textLength="51.2" lengthAdjust="spacingAndGlyphs" stroke="#2a2a2a" stroke-width="0.6">Back</text>
<text x="1486.5" y="749.0" font-size="22.24" fill="#2a2a2a" textLength="53.0" lengthAdjust="spacingAndGlyphs" stroke="#2a2a2a" stroke-width="0.6">Next</text>
</svg>
</body></html>
